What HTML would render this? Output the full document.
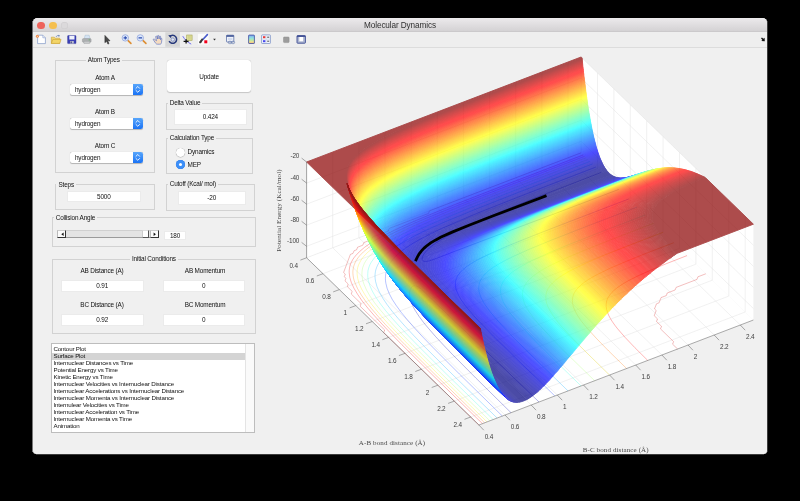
<!DOCTYPE html>
<html><head><meta charset="utf-8"><title>Molecular Dynamics</title>
<style>
html,body{margin:0;padding:0;background:#000;}
body{letter-spacing:-0.17px;width:800px;height:501px;position:relative;overflow:hidden;font-family:"Liberation Sans",sans-serif;font-size:6.4px;color:#111;}
#win{will-change:transform;position:absolute;left:33px;top:18px;width:734px;height:436px;background:#f0f0f0;border-radius:4.5px 4.5px 3px 3px;overflow:hidden;}
#tb{position:absolute;left:0;top:0;width:734px;height:14px;background:linear-gradient(#eceaec,#d4d2d4);border-bottom:1px solid #cbc9cb;box-sizing:border-box;}
#tb .t{position:absolute;left:0;width:734px;top:3.1px;text-align:center;font-size:8.2px;color:#303030;letter-spacing:-0.1px}
.lt{position:absolute;top:3.55px;width:7.4px;height:7.4px;border-radius:50%;}
#tool{position:absolute;left:0;top:14px;width:734px;height:16px;background:#eee;border-bottom:1.6px solid #dcdcdc;box-sizing:border-box;}
.ab{position:absolute;}
.pn{position:absolute;border:1px solid #d2d2d2;box-sizing:border-box;}
.pt{position:absolute;top:-4.6px;background:#f0f0f0;padding:0 2px;white-space:nowrap;line-height:8px;}
.lb{position:absolute;white-space:nowrap;text-align:center;line-height:8px;}
.ed{position:absolute;background:#fff;border:1px solid #ebebeb;box-sizing:border-box;text-align:center;}
.pop{position:absolute;background:#fff;border-radius:2px;box-shadow:0 0 0.5px #999,0 0.5px 0.8px rgba(0,0,0,.25);}
.pop span{position:absolute;left:5.4px;top:1.9px;line-height:8px;}
.pop i{position:absolute;right:0;top:0;width:9.6px;height:100%;border-radius:0 2.2px 2.2px 0;background:linear-gradient(#58a6fb,#1a73f5);}.pop i svg{position:absolute;left:0;top:0}
#lst{position:absolute;left:18.2px;top:325.4px;width:204px;height:89.2px;font-size:6.2px;background:#fff;border:1px solid #bdbdbd;box-sizing:border-box;}
#lst div{position:absolute;left:1.3px;white-space:nowrap;line-height:7.07px;height:7.07px;}
.rd{width:9px;height:9px;border-radius:50%;background:#fff;box-shadow:0 0 0.5px #777,0 0.4px 0.8px rgba(0,0,0,.3);}
.rd.on{background:#3c8ff8;box-shadow:0 0 0.5px #1a5fd0;}
.rd.on::after{content:"";position:absolute;left:3px;top:3px;width:3px;height:3px;border-radius:50%;background:#fff;}
.sb{width:9px;height:8.6px;background:#fbfbfb;border-right:0.8px solid #333;border-bottom:0.8px solid #333;border-left:0.5px solid #bbb;border-top:0.5px solid #ccc;box-sizing:border-box;}
.sb svg{position:absolute;left:-0.5px;top:-0.5px}
</style></head><body>
<div class="ab" style="left:32px;top:21px;width:1px;height:431px;background:linear-gradient(#e0dee0 0,#d8d6d8 11px,#f0f0f0 12px);opacity:.5"></div><div class="ab" style="left:767px;top:21px;width:1px;height:431px;background:#f0f0f0;opacity:.25"></div><div class="ab" style="left:36px;top:454px;width:728px;height:1px;background:#f0f0f0;opacity:.25"></div>
<div id="win">
 <div id="tb"><span class="lt" style="left:4.4px;background:#ee635b"></span><span class="lt" style="left:16.2px;background:#f5bf4f"></span><span class="lt" style="left:28px;background:#dbd9db;box-shadow:inset 0 0 0 0.5px #cdcbcd"></span><div class="t">Molecular Dynamics</div></div>
 <div id="tool"><svg style="position:absolute;left:-33px;top:-32px" width="800" height="60" viewBox="0 0 800 60">
<defs>
<linearGradient id="cb" x1="0" y1="0" x2="0" y2="1"><stop offset="0" stop-color="#7fa4f2"/><stop offset=".35" stop-color="#8fe0e0"/><stop offset=".6" stop-color="#b8e8a8"/><stop offset=".8" stop-color="#f0e090"/><stop offset="1" stop-color="#f0b080"/></linearGradient>
<linearGradient id="fl" x1="0" y1="0" x2="0" y2="1"><stop offset="0" stop-color="#f4dc7a"/><stop offset="1" stop-color="#dfb640"/></linearGradient>
</defs>
<!-- new -->
<path d="M37.6 35.2h5.2l2.6 2.6v5.8h-7.8z" fill="#fff" stroke="#8096c6" stroke-width=".7"/>
<path d="M42.8 35.2v2.6h2.6" fill="#dfe6f4" stroke="#8096c6" stroke-width=".5"/>
<circle cx="37.4" cy="36.3" r="1.5" fill="#f08a48"/><circle cx="37.4" cy="36.3" r=".6" fill="#fbd9b8"/>
<!-- open -->
<path d="M51.3 43.4v-6.2h3l.9 1h4.6v5.2z" fill="url(#fl)" stroke="#c79f34" stroke-width=".6"/>
<path d="M51.3 43.4l1.6-3.9h8.2l-1.5 3.9z" fill="#f3d568" stroke="#c79f34" stroke-width=".5"/>
<path d="M56 37c.6-1.3 1.8-1.800 3-1.4" fill="none" stroke="#6f86b8" stroke-width=".8"/><path d="M58.300 34.700l1.900 1-1.700 1.200z" fill="#6f86b8"/>
<!-- save -->
<rect x="67.600" y="35.600" width="8.400" height="8" rx=".5" fill="#3c40b6" stroke="#2c2f90" stroke-width=".4"/>
<rect x="69.300" y="35.800" width="5.200" height="3.700" fill="#eef1fb"/>
<rect x="70" y="41" width="3.800" height="2.600" fill="#b9bccd"/><rect x="70.600" y="41.500" width="1.100" height="1.700" fill="#30307a"/>
<!-- print -->
<path d="M84.300 38.800l.8-3.600h4l1 3.600z" fill="#d3e3f3" stroke="#9ab0c8" stroke-width=".4"/>
<rect x="82.400" y="38.600" width="8.700" height="3.700" rx="1" fill="#aeb0b2" stroke="#8b8d90" stroke-width=".4"/>
<rect x="83.800" y="41.300" width="6" height="2.200" rx=".4" fill="#c9cbcd" stroke="#96989b" stroke-width=".4"/>
<rect x="88.700" y="39.500" width="1.300" height=".8" fill="#5fae5f"/>
<!-- pointer -->
<path d="M104.900 35.400v7.300l1.700-1.500 1.300 2.900 1.100-.5-1.300-2.800h2.300z" fill="#4a4a4a" stroke="#222" stroke-width=".5" stroke-linejoin="round"/>
<!-- zoom in -->
<path d="M127.600 40.200l3.300 3.200" stroke="#dd8f35" stroke-width="1.700" stroke-linecap="round"/>
<circle cx="125.300" cy="37.900" r="3.200" fill="#dbe7fb" stroke="#93a6dc" stroke-width=".8"/>
<path d="M123.600 37.900h3.400M125.300 36.200v3.400" stroke="#2d4db0" stroke-width="1.100"/>
<!-- zoom out -->
<path d="M142.600 40.200l3.300 3.200" stroke="#dd8f35" stroke-width="1.700" stroke-linecap="round"/>
<circle cx="140.300" cy="37.900" r="3.200" fill="#dbe7fb" stroke="#93a6dc" stroke-width=".8"/>
<path d="M138.500 37.900h3.600" stroke="#2d4db0" stroke-width="1.200"/>
<!-- hand -->
<path d="M154.600 39.300c-.8-.9-1.700-.2-1.100.7l2.200 3.300c.5.700 1 .9 1.800.9h2.300c1 0 1.600-.6 1.700-1.500l.4-3.700c.1-.9-1-1-1.200-.2l-.2.900.1-3c0-.9-1.200-.9-1.300 0l-.2 2.300-.3-3c-.1-.9-1.300-.8-1.300.1l.1 2.900-.7-2.500c-.3-.9-1.400-.5-1.200.4l.8 3.900z" fill="#f6dcc0" stroke="#4c68c4" stroke-width=".6" stroke-linejoin="round"/>
<!-- rotate (selected) -->
<rect x="165.300" y="32.200" width="14.600" height="14.600" fill="#d7d7d7"/>
<path d="M169.700 36.600a4 4 0 1 1-.6 4.600" fill="none" stroke="#27397c" stroke-width="1.500"/>
<path d="M168.200 35.300l3.300-.3-.5 3.200z" fill="#27397c"/>
<circle cx="172.800" cy="39.600" r="1.700" fill="#e2e6f2" stroke="#6c80bc" stroke-width=".7"/>
<!-- data cursor -->
<rect x="186.700" y="35" width="5.400" height="5.400" fill="#dcdc96" stroke="#a6a658" stroke-width=".6"/>
<path d="M188 36.400h2.800M188 37.700h2.800M188 39h2.800" stroke="#c4c47c" stroke-width=".4"/>
<path d="M182.800 36.200c2 3.500 4.500 6 8.400 7.900" fill="none" stroke="#4c4cf0" stroke-width=".8"/>
<path d="M183.600 41.300h5M186.100 39.200v4.400" stroke="#111" stroke-width="1.300"/>
<!-- brush -->
<rect x="198" y="33.800" width="10.600" height="10.600" rx=".8" fill="#fbfbfb"/>
<path d="M207.400 34.600l-4.800 5.200" stroke="#4a5ccc" stroke-width="1.600" stroke-linecap="round"/>
<path d="M203.300 39.300l-1.300-1-2.600 3.300c-.5.700-.2 1.500.3 1.600.8.200 1.300 0 1.700-.5z" fill="#3a3a3a"/>
<rect x="204.300" y="40.300" width="3" height="3" fill="#f1001b"/>
<path d="M213.100 38.700h2.800l-1.400 1.700z" fill="#333"/>
<!-- link -->
<rect x="226.500" y="35.200" width="7.300" height="6.800" rx=".6" fill="#eef2fa" stroke="#4c629c" stroke-width=".7"/>
<rect x="226.500" y="35.200" width="7.300" height="1.600" fill="#3f5496"/>
<rect x="228" y="38" width="4.400" height="2" fill="#d3dcef"/>
<rect x="228.300" y="41.300" width="3.300" height="2.300" rx="1.100" fill="none" stroke="#6f84b4" stroke-width=".8"/><rect x="231.300" y="41.300" width="3.300" height="2.300" rx="1.100" fill="none" stroke="#6f84b4" stroke-width=".8"/>
<!-- colorbar -->
<rect x="248.600" y="35.100" width="5.800" height="8.400" rx=".5" fill="url(#cb)" stroke="#3c4c9c" stroke-width=".8"/>
<!-- legend -->
<rect x="261.600" y="34.900" width="8.800" height="8.600" rx=".6" fill="#f2f5fc" stroke="#7088c2" stroke-width=".7"/>
<path d="M261.600 39.200h8.800M266.200 34.900v8.600" stroke="#b8c4e0" stroke-width=".4"/>
<rect x="263" y="36.200" width="2.400" height="2" fill="#ea3838"/><rect x="263" y="40.200" width="2.400" height="2" fill="#4646ee"/>
<path d="M267.200 37.200h2M267.200 41.200h2" stroke="#222" stroke-width=".8"/>
<!-- gray sq -->
<rect x="283.500" y="37" width="5.600" height="5.600" rx=".8" fill="#9c9c9c" stroke="#8c8c8c" stroke-width=".5"/>
<!-- dock -->
<rect x="297" y="35.600" width="8.400" height="7.600" rx=".6" fill="#aeb7d2" stroke="#3a4a92" stroke-width=".9"/>
<rect x="299.300" y="37" width="3.800" height="4.300" fill="#fff"/>
<path d="M297 36.300h8.400" stroke="#3a4a92" stroke-width="1.200"/>
<!-- far right arrow -->
<path d="M761 38.300l1-.8 1.300 1.300 1.300-1.100.2 3.600-3.600-.2 1.200-1.200z" fill="#111"/>
</svg>
</div>
 <div style="position:absolute;left:0;top:0"><!-- coordinates relative to #win (page - 33, page - 18) -->
<div class="pn" style="left:21.8px;top:42px;width:100.4px;height:113px"><span class="pt" style="left:30px">Atom Types</span></div>
<div class="lb" style="left:52px;top:56px;width:40px">Atom A</div>
<div class="pop" style="left:36.6px;top:66.4px;width:73.2px;height:10.8px"><span>hydrogen</span><i><svg width="9.6" height="10.8" viewBox="0 0 9.6 10.8"><path d="M3 4.300l1.800-1.800 1.800 1.800M3 6.500l1.800 1.800 1.800-1.800" fill="none" stroke="#fff" stroke-width=".9" stroke-linecap="round" stroke-linejoin="round"/></svg></i></div>
<div class="lb" style="left:52px;top:90px;width:40px">Atom B</div>
<div class="pop" style="left:36.6px;top:100.4px;width:73.2px;height:10.8px"><span>hydrogen</span><i><svg width="9.6" height="10.8" viewBox="0 0 9.6 10.8"><path d="M3 4.300l1.800-1.800 1.800 1.800M3 6.500l1.800 1.800 1.800-1.800" fill="none" stroke="#fff" stroke-width=".9" stroke-linecap="round" stroke-linejoin="round"/></svg></i></div>
<div class="lb" style="left:52px;top:124.3px;width:40px">Atom C</div>
<div class="pop" style="left:36.6px;top:134.2px;width:73.2px;height:10.8px"><span>hydrogen</span><i><svg width="9.6" height="10.8" viewBox="0 0 9.6 10.8"><path d="M3 4.300l1.800-1.800 1.800 1.800M3 6.500l1.800 1.800 1.800-1.800" fill="none" stroke="#fff" stroke-width=".9" stroke-linecap="round" stroke-linejoin="round"/></svg></i></div>

<div class="ab" style="left:134px;top:42px;width:84px;height:32px;background:#fff;border-radius:3px;box-shadow:0 0 0.6px #aaa,0 0.6px 1px rgba(0,0,0,.18)"></div>
<div class="lb" style="left:156px;top:55px;width:40px">Update</div>

<div class="pn" style="left:133px;top:84.8px;width:86.6px;height:27.6px"><span class="pt" style="left:0.7px">Delta Value</span></div>
<div class="ed" style="left:140.8px;top:91.4px;width:73.2px;height:15.4px;line-height:13.8px">0.424</div>

<div class="pn" style="left:133px;top:119.9px;width:86.6px;height:36.1px"><span class="pt" style="left:0.7px">Calculation Type</span></div>
<div class="ab rd" style="left:142.7px;top:129.6px"></div><div class="lb" style="left:154.6px;top:130px;text-align:left">Dynamics</div>
<div class="ab rd on" style="left:142.7px;top:141.7px"></div><div class="lb" style="left:154.6px;top:143px;text-align:left">MEP</div>

<div class="pn" style="left:21.8px;top:166.4px;width:100.4px;height:26px"><span class="pt" style="left:0.7px">Steps</span></div>
<div class="ed" style="left:34px;top:173.2px;width:73.6px;height:11.2px;line-height:9.6px">5000</div>

<div class="pn" style="left:133px;top:166px;width:89.4px;height:27px"><span class="pt" style="left:0.7px">Cutoff (Kcal/ mol)</span></div>
<div class="ed" style="left:144.8px;top:173.2px;width:67.8px;height:14.2px;line-height:12.6px">-20</div>

<div class="pn" style="left:19px;top:199.4px;width:204px;height:29.2px"><span class="pt" style="left:0.7px">Collision Angle</span></div>
<div class="ab" style="left:24.3px;top:211.8px;width:101.2px;height:8.6px;background:#e4e4e4;border-bottom:0.6px solid #9b9b9b;border-top:0.5px solid #d0d0d0;box-sizing:border-box"></div>
<div class="ab sb" style="left:24.3px;top:211.8px"><svg width="9" height="8.6" viewBox="0 0 9 8.6"><path d="M5.600 2.500v3.400L3.300 4.200z" fill="#111"/></svg></div>
<div class="ab sb" style="left:116.5px;top:211.8px"><svg width="9" height="8.6" viewBox="0 0 9 8.6"><path d="M3.600 2.500v3.400l2.300-1.700z" fill="#111"/></svg></div>
<div class="ab" style="left:109.4px;top:211.8px;width:7px;height:8.600px;background:#fff;border-right:0.7px solid #555;border-bottom:0.7px solid #555;border-left:0.5px solid #ccc;border-top:0.5px solid #ddd;box-sizing:border-box"></div>
<div class="ed" style="left:131.4px;top:212.8px;width:21.3px;height:9.600px;line-height:8px">180</div>

<div class="pn" style="left:19px;top:241px;width:204.4px;height:75.4px"><span class="pt" style="left:77px">Initial Conditions</span></div>
<div class="lb" style="left:39px;top:248.8px;width:60px">AB Distance (A)</div>
<div class="lb" style="left:142px;top:248.8px;width:60px">AB Momentum</div>
<div class="ed" style="left:28px;top:261.5px;width:82.5px;height:12px;line-height:10.4px">0.91</div>
<div class="ed" style="left:130px;top:261.5px;width:81.6px;height:12px;line-height:10.4px">0</div>
<div class="lb" style="left:39px;top:282.6px;width:60px">BC Distance (A)</div>
<div class="lb" style="left:142px;top:282.6px;width:60px">BC Momentum</div>
<div class="ed" style="left:28px;top:295.5px;width:82.5px;height:12px;line-height:10.4px">0.92</div>
<div class="ed" style="left:130px;top:295.5px;width:81.6px;height:12px;line-height:10.4px">0</div>

<div id="lst">
<div style="top:8.2px;left:0;width:192.6px;background:#d4d4d4"></div>
<div style="top:0;left:192.6px;width:8.4px;height:87.2px;background:#fafafa;border-left:0.5px solid #e4e4e4"></div>
<div style="top:0.30px">Contour Plot</div>
<div style="top:7.37px">Surface Plot</div>
<div style="top:14.44px">Internuclear Distances vs Time</div>
<div style="top:21.51px">Potential Energy vs Time</div>
<div style="top:28.58px">Kinetic Energy vs Time</div>
<div style="top:35.65px">Internuclear Velocities vs Internuclear Distance</div>
<div style="top:42.72px">Internuclear Accelerations vs Internuclear Distance</div>
<div style="top:49.79px">Internuclear Momenta vs Internuclear Distance</div>
<div style="top:56.86px">Internulear Velocities vs Time</div>
<div style="top:63.93px">Internuclear Acceleration vs Time</div>
<div style="top:71.00px">Internuclear Momenta vs Time</div>
<div style="top:78.07px">Animation</div>
</div>
</div>
 <svg style="position:absolute;left:-33px;top:-18px" width="800" height="501" viewBox="0 0 800 501">
<path fill="#fff" d="M306.6 257.8L478.9 425L753.4 320L581.1 152.8Z"/>
<path fill="#fff" d="M306.6 257.8L581.1 152.8L581.1 57L306.6 162Z"/>
<path fill="#fff" d="M581.1 152.8L753.4 320L753.4 224.2L581.1 57Z"/>
<path fill="none" stroke="#e3e3e3" stroke-width="0.5" d="M306.6 257.8L581.1 152.8L581.1 57M478.9 425L306.6 257.8L306.6 162M323 273.7L597.5 168.7L597.5 72.9M505 415L332.7 247.8L332.7 152M339.4 289.6L613.9 184.6L613.9 88.8M531.2 405L358.9 237.8L358.9 142M355.8 305.6L630.3 200.6L630.3 104.8M557.3 395L385 227.8L385 132M372.2 321.5L646.7 216.5L646.7 120.7M583.5 385L411.2 217.8L411.2 122M388.6 337.4L663.1 232.4L663.1 136.6M609.6 375L437.3 207.8L437.3 112M405.1 353.3L679.5 248.3L679.5 152.5M635.7 365L463.4 197.8L463.4 102M421.5 369.2L695.9 264.2L695.9 168.4M661.9 355L489.6 187.8L489.6 92M437.9 385.2L712.3 280.2L712.3 184.4M688 345L515.7 177.8L515.7 82M454.3 401.1L728.8 296.1L728.8 200.3M714.2 335L541.9 167.8L541.9 72M470.7 417L745.2 312L745.2 216.2M740.3 325L568 157.8L568 62M306.6 246.3L581.1 141.3L753.4 308.5M306.6 225.2L581.1 120.2L753.4 287.4M306.6 204.2L581.1 99.2L753.4 266.3M306.6 183.1L581.1 78.1L753.4 245.2M306.6 162L581.1 57L753.4 224.2"/>
<path fill="none" stroke="#0000b5" stroke-width="0.36" stroke-opacity="0.8" d="M601.2 172.4L544.8 194.2L505.6 209.8L477.8 221.5L466.7 226.4L456.8 231.2L448.5 235.5L441.2 239.6L434.7 243.8L429.9 247.5L426 251.4L423.5 254.6L422.7 256.4L422.2 257.9L422.2 259.3L422.5 260.2L423.1 260.9L423.6 261.2L424.6 261.4L426.1 261.4L429.5 260.8L434.5 259.1L472.4 244.6L553.7 214.1L618.8 189.4M539 402L498 362.5L446.6 313.6L422.7 290.4L419.4 287.6L416.9 286.1L415.5 285.8L414.4 285.7L413.2 286.1L412.2 286.6L411.5 287.4L410.6 288.7L410 290.4L409.6 292.2L409.5 294.4L409.6 296L410.1 298.7L410.7 300.7L412.6 305.6L415.1 310.3L419 316.3L423.5 322.4L428.5 328.4L435.5 336.5L443.8 345.4L452.3 354.3L475.9 378.1L511 412.7"/>
<path fill="none" stroke="#002eff" stroke-width="0.36" stroke-opacity="0.8" d="M595.8 167.1L527.2 193.5L484.1 210.5L467.9 217.1L453.5 223.3L441.3 228.7L431.1 233.5L421.1 238.7L413.3 243.1L406.4 247.5L400.9 251.6L396.2 255.7L392.3 260L389.3 264.5L388 266.8L387.1 268.9L386.4 271.2L385.8 273.6L385.5 276.2L385.4 278.5L385.5 280.8L385.9 283.4L387.1 288.3L389.2 293.5L392.2 299.3L396.1 305.3L401.4 312.6L407.2 319.6L414.3 327.8L422.9 337.1L432.8 347.3L459.4 374L502.3 416M554.8 395.9L514 356.4L493.5 336.2L478.9 321.3L473.5 315.4L469 310.1L464.7 304.8L461.3 300L458.8 295.8L457 291.8L455.9 288.5L455.4 285L455.6 281.6L456.4 278.5L457.8 275.6L460 272.7L463 269.6L466.7 266.6L471.3 263.5L476.5 260.4L483 257.1L490.7 253.4L507.6 246L530.9 236.6L563.8 223.8L628.7 199"/>
<path fill="none" stroke="#00a7ff" stroke-width="0.36" stroke-opacity="0.8" d="M592.5 163.9L518.9 192.2L475.2 209.4L444.6 222L431.9 227.6L421.5 232.4L412.4 237L404.1 241.5L396.6 246.2L390.7 250.4L385.7 254.6L381.6 259L378.7 263.1L377.6 265.2L376.6 267.5L375.9 269.6L375.4 271.7L375.1 274.1L375 276.6L375.2 278.9L375.6 281.6L377 286.7L379.4 292.1L382.8 298.2L387.1 304.6L392 311.1L397.9 318.2L405.3 326.5L414 335.8L423.9 346L451 373L497.1 418M568 390.9L533.9 357.7L514.6 338.5L500.8 324.1L495.8 318.5L491.3 313.2L487.5 308.2L484.2 303.4L481.8 299.1L480.1 295.2L479.1 291.7L478.7 288.2L479 284.8L479.9 281.7L481.4 278.6L483.7 275.5L486.5 272.6L489.9 269.7L494.4 266.6L499.6 263.5L506 260L513.1 256.5L529.4 249.2L552 239.9L583.2 227.7L637 207.1"/>
<path fill="none" stroke="#2bffde" stroke-width="0.36" stroke-opacity="0.8" d="M590 161.4L515.3 190.2L470.5 207.7L438.2 221L426.5 226.1L415.6 231.1L405.9 235.8L397 240.6L389.5 245.2L383.6 249.4L378.4 253.7L374.3 258L371.4 262L370.1 264.3L369.2 266.5L368.5 268.7L368 270.7L367.8 273.2L367.7 275.5L367.9 277.8L368.3 280.5L369.9 285.7L372.3 291.1L375.8 297.2L380.4 303.8L385.7 310.7L392 318.1L398.8 325.7L407.6 335L418.5 346.2L446.3 373.9L493.1 419.5M581 385.9L551.7 357.4L533.8 339.5L521.2 326.1L516.3 320.5L512.2 315.5L508.6 310.8L505.7 306.3L503.4 302.2L501.9 298.5L500.9 295.1L500.5 291.5L500.7 288.2L501.5 285.1L502.9 282.2L505 279L507.9 276L511.4 272.9L515.5 269.9L520.6 266.7L526.4 263.5L533 260.1L548.6 253L569.6 244.3L598.5 232.9L645.2 215"/>
<path fill="none" stroke="#a4ff65" stroke-width="0.36" stroke-opacity="0.8" d="M587.9 159.4L511 189L465.1 207L432.8 220.2L420.6 225.5L409.7 230.5L400 235.3L391.1 240.1L383.5 244.6L377.4 248.9L372.4 253.2L368.7 257L367 259.1L365.5 261.4L364.4 263.3L363.5 265.5L362.7 267.6L362.2 270.1L362 272.1L361.9 274.5L362.1 276.7L362.5 279.3L363.2 281.9L364.1 284.5L366.5 290L370 296.1L374.6 302.8L380 309.6L386.2 317L393.4 325L402.2 334.3L413.1 345.5L441.6 373.8L489.8 420.8M594.6 380.7L569.1 355.9L553 339.6L541.4 327.2L536.9 322L533.1 317.3L529.7 312.6L527.1 308.4L525 304.5L523.6 300.9L522.8 297.5L522.5 294.3L522.7 291.1L523.5 288.2L525 285.1L526.8 282.4L529.3 279.6L532.8 276.4L536.7 273.5L541.3 270.5L546.6 267.4L552.6 264.3L567.1 257.6L586.9 249.3L613.1 238.9L653.7 223.2"/>
<path fill="none" stroke="#ffeb00" stroke-width="0.36" stroke-opacity="0.8" d="M586.2 157.7L506.5 188.4L460.1 206.5L427.7 219.8L415.5 225.1L404.6 230.1L394.9 234.8L386 239.6L378.5 244.2L372.2 248.6L367.3 252.7L363.6 256.6L362 258.7L360.5 261L358.5 265L357.8 267.2L357.4 269.2L357.1 271.6L357.1 274L357.7 278.4L359.1 283.5L361.6 289.1L365.2 295.2L369.7 301.8L375.1 308.7L381.4 316.1L388.6 324.1L397.3 333.3L408.3 344.6L437.1 373.2L487 421.9M609.4 375L587.5 353.5L573.1 339L562.6 327.6L558.4 322.6L555 318.3L552 313.9L549.7 310.1L547.9 306.5L546.7 303.3L546 300.3L545.8 297.1L546.1 294.2L547 291L548.2 288.4L550.1 285.6L552.6 282.9L555.7 280L559.2 277.4L563.8 274.4L568.6 271.6L574 268.8L587.5 262.4L605.1 254.9L628.4 245.6L663 232.3"/>
<path fill="none" stroke="#ff7200" stroke-width="0.36" stroke-opacity="0.8" d="M584.6 156.3L503.3 187.5L457.4 205.5L425 218.7L412.3 224.2L401.3 229.2L391.1 234.1L382.2 238.9L374.6 243.4L368.6 247.6L363.4 251.9L359.7 255.7L358 257.8L356.5 260.1L355.4 262L354.4 264.3L353.7 266.4L353.2 268.8L352.9 270.9L352.9 273.2L353.1 275.5L353.5 278L354.2 280.7L355.2 283.3L357.6 288.7L361.2 294.8L365.8 301.5L371.5 308.7L377.8 316L385.3 324.4L394.5 334L405.1 344.8L433.6 373.1L484.6 422.8M626.6 368.5L608.7 351L596.4 338.4L587.3 328.4L583.7 324.1L580.7 320.2L578.2 316.5L575.9 312.6L574.3 309.1L573.2 306.2L572.6 303.2L572.4 300.4L572.7 297.5L573.4 294.9L574.6 292.4L576.4 289.7L578.6 287.3L581.3 284.7L584.3 282.3L588.3 279.6L592.6 277.1L597.5 274.4L609.8 268.4L625.2 261.8L645.2 253.7L673.8 242.7"/>
<path fill="none" stroke="#ff0000" stroke-width="0.36" stroke-opacity="0.8" d="M583.3 154.9L501.4 186.4L454.9 204.5L422.5 217.7L409.7 223.2L398.2 228.4L387.5 233.6L378.6 238.4L371 242.9L364.7 247.2L359.5 251.6L355.7 255.6L354 257.7L352.6 259.8L350.6 263.8L349.9 266L349.5 268.1L349.2 270.5L349.2 272.8L349.8 277.4L350.6 280.2L351.4 282.7L354 288.3L357.6 294.3L362.2 301L367.9 308.2L374.2 315.5L382.1 324.2L391.2 333.8L401.9 344.7L430.8 373.3L482.4 423.6M647.7 360.4L634.8 347.6L625 337.3L617.7 328.9L614.9 325.3L612.3 321.6L610.2 318.2L608.6 315.1L607.5 312.3L606.6 309.3L606.2 306.7L606.2 304.3L606.5 301.9L607.2 299.5L608.2 297.4L609.7 295.1L611.7 292.6L614 290.4L616.6 288.2L620 285.8L623.7 283.4L628 280.9L638.1 275.8L650.7 270.2L666.3 263.7L687 255.6"/>
<path fill="none" stroke="#d42020" stroke-width="0.36" stroke-opacity="0.8" d="M581.1 152.8L429.5 210.8L428.5 213.4L389.3 228.4L388.3 231L372.6 237L371.6 239.6L363.8 242.6L362.8 245.2L357.6 247.2L356.6 249.8L354 250.8L353 253.4L350.4 254.4L346.5 264.7L343.6 272.5L345.3 274.1L344.3 276.7L345.9 278.3L345 280.9L348.2 284L347.3 286.6L352.2 291.4L351.2 294L361.1 303.6L360.1 306.2L384.7 330L383.7 332.6L478.9 425M677.6 349L672.6 344.2L673.6 341.6L660.5 328.9L661.5 326.3L656.5 321.5L657.5 318.9L654.2 315.7L656.2 310.5L654.5 308.9L656.5 303.8L659.1 302.8L661 297.6L666.3 295.6L667.2 293L675.1 290L676.1 287.4L697 279.4L697.9 276.8L705.8 273.8"/>
<g opacity="0.70" stroke-width="0.9" stroke-linejoin="round">
<path fill="#000081" stroke="#000081" d="M588.8 178L607 170.8L609.2 173.2L611.3 175L580.7 186.3L559.9 193.6L545.4 198.3L542.7 199L541.2 199.3L540.6 199.1L541 198.7L542.4 197.8L544.9 196.5L554 192.4L570.5 185.4ZM480.6 359.1L480.9 358.9L481.5 359.1L483.8 360.5L487.9 363.7L493.3 368.3L506.6 380.2L527.1 399.4L523.6 401L520.3 402L503.5 385.2L490.9 371.9L482.9 362.8L481 360.2Z"/>
<path fill="#000084" stroke="#000084" d="M597.3 173.2L606.2 169.7L607 170.8L578.3 182.3L558.9 190.3L544.9 196.5L542.4 197.8L541 198.7L540.6 199.1L541.2 199.3L542.7 199L545.4 198.3L559.9 193.6L580.7 186.3L611.3 175L612.3 175.7L568.4 192L539.8 202.2L521 208.2L515.1 209.7L513 209.8L512.9 209.5L513.3 209L514.2 208.3L517.8 206.3L524.1 203.1L534.8 198.4L560.1 187.9ZM463.2 341.8L463.6 341.5L464.8 341.9L468.3 344L474.2 348.6L481 354.4L500 371.5L528.7 398.5L527.1 399.4L507.3 380.9L494.1 369L487.9 363.7L483.8 360.5L481.5 359.1L480.9 358.9L480.6 359L481 360.2L482.9 362.8L490.2 371.2L503.5 385.2L520.3 402L518.9 402.2L493.6 376.9L476.5 359.1L471 352.9L466.2 347.1L463.8 343.6Z"/>
<path fill="#000088" stroke="#000088" d="M569.6 182.8L605.5 168.7L606.2 169.7L564.2 186.3L534.8 198.4L524.1 203.1L517.8 206.3L514.2 208.3L513.3 209L512.9 209.5L513 209.8L514.8 209.7L519.1 208.7L534.3 204L564 193.6L612.3 175.7L613.1 176.1L559.1 196.2L524.7 208.5L511.9 212.7L502.7 215.4L497 216.5L496.1 216.6L495.5 216.5L495.2 216.2L495.8 215.4L496.6 214.7L500.2 212.5L506.5 209.3L514.6 205.5L536.5 196.1ZM452.2 330.7L452.5 330.3L452.8 330.2L453.8 330.4L455.3 331.1L457.5 332.5L463.7 337L471.9 343.9L481.7 352.5L494.2 364L529.9 397.7L528.7 398.5L498.4 370L486 358.8L477.4 351.3L472 346.8L467.9 343.7L464.8 341.9L464.1 341.6L463.3 341.6L463.2 342.3L463.4 342.9L465.2 345.8L469.1 350.6L473.3 355.5L479.9 362.8L490 373.3L518.9 402.2L517.8 402.3L486.9 371.5L476.3 360.5L467.7 351.5L460.9 343.7L456.1 337.7L453.1 333.3L452.4 331.9Z"/>
<path fill="#00008b" stroke="#00008b" d="M589.8 173.7L604.9 167.9L605.5 168.7L554.1 189L522.5 202L510.1 207.5L502.5 211.3L496.6 214.7L495.8 215.4L495.2 216.2L495.5 216.5L496.1 216.6L497 216.5L502.7 215.4L509.5 213.5L520.3 210L555 197.8L613.1 176.1L613.8 176.5L551.1 199.9L513.3 213.3L500.7 217.5L490.5 220.4L484.9 221.5L483 221.6L482.3 221.2L482.5 220.5L483.7 219.3L489.3 215.9L497.3 211.8L509.8 206.1L540.3 193.3ZM444.3 322.1L444.5 321.9L445.1 321.7L446.2 321.9L448.6 323.1L450.9 324.5L458 329.8L466.8 337.2L477.6 346.7L492.4 360.4L531 397L529.9 397.7L493.4 363.2L479.8 350.8L470 342.3L462.6 336.2L457.5 332.5L454.5 330.7L453.2 330.3L452.5 330.3L452.2 330.9L452.4 331.9L453.1 333.3L454.7 335.8L458.6 340.9L464.8 348.2L474 358.2L485.4 370L517.8 402.3L516.9 402.4L482.3 367.9L470.5 355.8L461.1 345.7L453.2 336.7L447.9 329.9L444.9 325L444.2 323.2Z"/>
<path fill="#00008f" stroke="#00008f" d="M583.6 175.1L604.4 167L604.9 167.9L547.1 190.6L526.6 198.9L510.9 205.6L497.5 211.7L489.3 215.9L483.7 219.3L482.5 220.5L482.3 221.2L483 221.6L484.9 221.5L490.5 220.4L500.1 217.6L512.5 213.6L529.5 207.7L550.5 200.1L613.8 176.5L614.4 176.8L547.7 201.7L523.6 210.5L505.4 216.9L490.8 221.6L480.8 224.5L476.7 225.3L474.1 225.7L472.6 225.6L471.9 225.2L471.9 224.9L472.3 224L473.5 222.9L478.4 219.7L487.5 214.9L499.2 209.4L513.2 203.3L532.6 195.3ZM438 315.2L438.7 314.8L440.1 314.9L442.4 315.9L445 317.5L452.2 322.7L461.8 330.7L473.4 341L488.5 354.9L532 396.2L531 397L489.9 358L475.5 344.8L463.9 334.7L456.3 328.5L450.9 324.5L446.8 322.2L445.6 321.8L444.5 321.9L444.1 322.7L444.6 324.3L447.1 328.7L451.6 334.7L458.5 342.8L468.1 353.2L479.9 365.5L516.9 402.4L516.1 402.3L477.1 363.6L464.4 350.5L454.6 339.8L446.9 330.9L441.5 323.8L439.6 320.8L438.4 318.4L437.8 316.2Z"/>
<path fill="#000093" stroke="#000093" d="M586.8 172.9L603.9 166.2L604.4 167L543.1 191.1L520.6 200.2L504.8 206.9L490.8 213.3L480.1 218.7L476.8 220.6L473.5 222.9L472.3 224L471.9 224.9L471.9 225.2L472.6 225.6L474.1 225.7L476.7 225.3L480.8 224.5L490.7 221.7L502.7 217.8L520.4 211.7L545.5 202.6L614.4 176.8L615 177L541.6 204.5L517.3 213.4L497.8 220.2L482.5 225.2L472.3 228L468.5 228.8L465.9 229.1L464.3 229.1L463.8 229L463.2 228.5L463.2 228.2L463.6 227.4L465.2 225.7L468.1 223.6L471 221.8L480.1 217L494.1 210.4L509 203.9L529.9 195.3ZM432.9 309.1L433.4 308.8L434.1 308.7L435.7 309.1L438 310.2L440.4 311.6L447.6 316.8L457.8 325.3L470.1 336.2L486.5 351.3L533 395.5L532 396.2L487 353.5L471.6 339.4L458.8 328.2L450.9 321.7L444.5 317.2L442.3 315.9L440.1 314.9L439.1 314.7L438.1 315L437.8 315.8L438.2 317.8L439.2 319.9L440.8 322.7L445.6 329.2L453.3 338.3L463.5 349.5L475.9 362.4L493.4 380L516.1 402.3L515.3 402.3L491.7 379L473.9 361.1L460 346.8L449.5 335.3L441 325.2L435.7 317.8L434.1 315.1L432.9 312.3L432.5 310.4L432.6 309.7Z"/>
<path fill="#000097" stroke="#000097" d="M602 166.1L603.5 165.5L603.9 166.2L563.6 181.9L533.6 193.8L511.1 203L494.1 210.4L480.1 217L471 221.8L468.1 223.6L465.2 225.7L463.6 227.4L463.2 228.2L463.2 228.5L463.8 229L464.3 229.1L465.9 229.1L468.5 228.8L472.3 228L481.8 225.4L495.2 221.1L514.6 214.3L539.9 205.1L615 177L615.6 177.2L538.2 206.3L511.8 215.9L490.8 223.3L475.5 228.3L465 231.2L461.1 232L458.6 232.2L457 232.2L455.8 231.6L455.7 231.3L455.8 230.6L457.4 228.7L459.8 226.8L463.4 224.4L473.6 218.8L489.1 211.4L506 204.1L529.9 194.3L559.5 182.6ZM428.5 303.8L429.7 303.3L431.2 303.6L433.3 304.4L436.4 306.2L443.6 311.4L453.5 319.6L466.3 331L483.7 347L533.9 394.8L533 395.5L505.6 369.3L484.7 349.6L468.1 334.3L454.7 322.7L446.5 315.9L439.8 311.2L437.1 309.7L435.1 308.9L433.7 308.8L432.9 309.1L432.6 309.7L432.5 310.4L432.9 312.3L434.1 315.1L435.7 317.8L441 325.2L449.4 335.2L460 346.8L473.9 361.1L491.7 379L515.3 402.3L514.6 402.2L488.5 376.5L470.3 358.2L456.4 343.8L445.3 331.6L437.3 322L434.2 317.9L431.4 313.6L429.5 310.2L428.3 307.1L428 304.9Z"/>
<path fill="#00009b" stroke="#00009b" d="M560.7 181.2L603.1 164.7L603.5 165.5L560.7 182.1L530.4 194.1L506.5 203.9L489.6 211.2L474 218.6L468.5 221.4L463.4 224.4L459.8 226.8L457.4 228.7L455.8 230.6L455.7 231.3L455.8 231.6L457 232.2L458.6 232.2L461.1 232L464.7 231.2L474.5 228.6L489.4 223.7L528.3 209.9L565.3 196.2L615.6 177.2L616.2 177.4L533.3 208.5L503.4 219.4L482.4 226.8L467.2 231.7L457.6 234.3L454.2 234.9L451.6 235.1L449.9 234.9L449.1 234.2L449.2 233.1L450.6 231.3L452.6 229.5L455.6 227.4L459.6 224.8L464.8 221.9L476.6 216L490.6 209.6L508.5 202L532.1 192.4ZM424.8 298.8L425.8 298.4L427.7 298.6L429.9 299.5L432.9 301.2L439.8 306.1L449.6 314.3L464 327.2L482.4 344.2L534.8 394.1L533.9 394.8L504.8 366.9L482.7 346.1L465.3 330.1L451.3 317.7L442.4 310.5L435.7 305.7L433.3 304.4L431.2 303.6L429.7 303.3L428.5 303.8L428 304.9L428.3 307.1L429.2 309.5L431.1 313.1L433.4 316.7L436.6 321L444.9 331.2L454.3 341.6L466.9 354.8L487.1 375.1L514.6 402.2L514 402.1L486.9 375.4L467.4 355.9L452.9 340.8L441.4 328.1L433 317.8L429.5 312.9L427.1 309.1L425.2 305.3L424.2 302.4L424.1 300.3L424.3 299.4Z"/>
<path fill="#00009f" stroke="#00009f" d="M579.3 173L602.7 163.9L603.1 164.7L560.7 181.2L528.3 194L504.9 203.5L485.1 212.1L470.2 219.1L463.2 222.8L458.1 225.7L454.5 228.1L451.2 230.7L449.4 232.7L449.1 233.5L449.1 234.2L449.9 234.9L451.6 235.1L454.2 234.9L457.6 234.3L467.2 231.7L481.8 227L500.3 220.5L522.9 212.3L562.9 197.5L616.2 177.4L616.7 177.5L529.5 210.3L497.9 221.9L475.3 229.8L461.1 234.5L451.6 237L448.1 237.6L445.6 237.8L443.8 237.5L443.1 236.8L443 236.1L443.3 235.4L444.6 233.5L447.1 231.2L451 228.4L455.1 225.8L460.6 222.7L475 215.6L491.5 208.2L513.9 198.8L540.7 188.1ZM421.2 294.5L422.3 293.8L424 293.8L425.9 294.3L428.6 295.7L431.8 297.8L435.4 300.4L445 308.4L459.7 321.5L479.5 339.9L504.4 363.4L535.7 393.4L534.8 394.1L503.5 364.1L480.1 342L461.2 324.6L447.2 312.3L438.3 305L431.8 300.5L429.1 299.1L427.2 298.5L425.8 298.4L424.7 298.9L424.3 299.4L424.1 300.3L424.2 302.4L425.2 305.3L427.1 309.1L429.5 312.9L432.7 317.5L440.8 327.4L450.3 338.1L463.4 351.8L484 372.5L514 402.1L513.3 402L485 374.1L464.5 353.5L449.5 337.8L438.2 325.3L433.6 319.8L429.4 314.4L426.1 309.6L423.8 305.9L422 302.2L420.8 298.7L420.6 296.1L420.8 295.2Z"/>
<path fill="#0000a4" stroke="#0000a4" d="M551.8 182.8L602.3 163.2L602.7 163.9L555.8 182.2L522.9 195.1L497.4 205.6L479.2 213.6L462.9 221.5L456.7 224.9L452.2 227.6L447.9 230.6L445.1 233L443.3 235.4L443 236.1L443.1 236.8L443.8 237.5L445.6 237.8L447.6 237.7L451.1 237.1L460.2 234.7L473.9 230.3L493.4 223.5L518.7 214.3L561.2 198.5L616.7 177.5L617.2 177.7L525.2 212.3L492.1 224.5L468.5 232.8L454.3 237.5L445.5 239.8L442.2 240.4L440.2 240.5L438.5 240.1L437.6 239.5L437.5 238.9L437.6 238.2L438.8 236L440.8 233.9L443.9 231.4L448.2 228.4L452.7 225.7L463.7 219.8L478.7 212.8L497.5 204.6L521.5 194.8ZM418.5 289.8L419.7 289.2L421.4 289.2L423.2 289.8L425.9 291.1L428.7 292.9L432.2 295.6L441 302.9L456.1 316.4L477.7 336.5L503.5 361L536.5 392.7L535.7 393.4L503.4 362.4L478 338.5L457.8 319.8L443.4 307L434.8 300L428.6 295.7L425.9 294.3L424 293.8L422.7 293.7L421.5 294.2L420.7 295.5L420.6 297.8L421.5 300.9L423 304.5L425.4 308.6L428.4 313L432.6 318.5L437.1 324L447.3 335.5L461 349.9L482.4 371.5L513.3 402L512.8 401.8L482 371.5L461.1 350.5L445.9 334.7L434.4 321.7L430.1 316.4L426 311L422.4 305.7L420.1 301.5L418.4 297.5L417.5 294.4L417.5 291.6L417.8 290.7Z"/>
<path fill="#0000a8" stroke="#0000a8" d="M577.1 172L602 162.4L602.3 163.2L552.4 182.5L519.3 195.7L493.5 206.3L474.1 214.8L458.6 222.4L452.7 225.7L447 229.2L442.2 232.7L439.2 235.5L437.7 237.8L437.5 238.9L437.6 239.5L438.5 240.1L440.2 240.5L442.2 240.4L445.2 239.9L453.5 237.7L467.1 233.3L486.6 226.4L515 216.1L560 199.3L617.2 177.7L617.8 177.8L522.5 213.7L484.4 227.7L459.3 236.7L447.4 240.7L439.3 242.8L436.5 243.2L434.8 243.2L433.2 242.8L432.5 242L432.3 241.4L432.4 240.4L433 239.2L433.9 237.8L436.4 235.2L440.2 232.1L444.7 229L450.8 225.3L457.2 221.9L464.7 218.2L482.4 210.1L504.7 200.7L535 188.5ZM416 285.4L417.2 284.7L418.8 284.6L420.5 285.1L422.8 286.1L427.8 289.5L435.7 296.2L452 310.9L476.8 334.1L537.3 392L536.5 392.7L502.2 359.8L475.4 334.4L454 314.6L438.8 301L430.8 294.4L425.4 290.8L423.2 289.8L421.4 289.2L419.7 289.2L418.5 289.8L418 290.4L417.6 291.3L417.4 292.3L417.5 293.9L418.2 297L419.7 300.8L421.9 304.8L425.2 309.8L429 315L433.8 321L444.3 332.9L459 348.3L480.3 369.9L512.8 401.8L512.2 401.6L479.7 369.7L457.9 347.7L442.1 331.1L430.8 318.2L425.8 311.9L422.2 307L419.2 302.1L416.8 297.5L415.2 293.3L414.6 290L414.8 287.4L415.3 286.2Z"/>
<path fill="#0000ad" stroke="#0000ad" d="M552.5 180.7L601.6 161.7L602 162.4L550.3 182.5L514.8 196.5L489.1 207.2L469.1 216.1L459.8 220.6L452.7 224.3L446 228.2L441.2 231.4L437 234.6L433.9 237.8L433 239.2L432.4 240.4L432.3 241.4L432.5 242L433.2 242.8L434.8 243.2L436.5 243.2L439.2 242.8L446.9 240.8L458.4 237L479.1 229.6L511.4 217.8L557.6 200.5L617.8 177.8L618.3 177.9L525.7 212.8L447.6 241.6L438.7 244.6L433 245.9L431.1 246.1L429.6 246.1L428.2 245.6L427.6 244.8L427.4 243.9L427.5 242.9L428.7 240.4L431.2 237.4L434.4 234.5L438.1 231.8L443.3 228.4L449.4 224.8L456.2 221.2L471.8 213.8L492.2 204.9L518.5 194.1ZM413.8 280.8L415 280.1L416.5 279.9L418 280.2L419.7 280.8L423.7 283.4L429.6 288.4L444.9 302.6L479.4 335L538.2 391.3L537.3 392L502.3 358.4L474.8 332.2L449.7 308.8L434.1 294.8L427.2 289.1L424.3 287.1L422.1 285.8L420.4 285L418.8 284.6L417.2 284.7L416 285.3L415.4 285.9L414.9 287L414.6 288.4L414.6 290L415.2 293.3L416.8 297.5L419.2 302.1L422.2 307L425.8 311.9L430.7 318.1L441.6 330.6L456.7 346.5L478.7 368.7L512.2 401.6L511.6 401.4L477.7 368.1L455.1 345.3L439 328.2L432.5 321L427.4 314.9L422.9 309L418.9 303.3L415.8 298.1L413.9 293.9L412.4 289.4L412 285.8L412.2 284L412.5 282.7L413.1 281.6Z"/>
<path fill="#0000b2" stroke="#0000b2" d="M594 163.8L601.3 160.9L601.6 161.7L546.5 183.1L508.5 198.2L481 209.7L461.6 218.5L453.7 222.5L445.8 226.8L440.2 230.3L435.2 233.9L431.2 237.4L428.7 240.4L427.5 242.9L427.4 243.9L427.6 244.8L428.2 245.6L429.6 246.1L431.1 246.1L433 245.9L438.7 244.6L447.2 241.8L525.2 213L618.3 177.9L618.8 177.9L435.3 247.2L430 248.9L426.5 249.6L425.3 249.6L424.2 249.4L423.5 249L422.9 248.2L422.6 247.3L422.7 246L423.2 244.4L424 242.8L426.6 239.5L430.7 235.5L435.1 232.2L441.3 228.2L448.4 224.1L457.4 219.5L476.4 210.7L503.4 199.3L538.7 185.2ZM412.5 275.5L413.6 274.9L414.6 274.7L415.6 274.8L416.9 275.1L419.7 276.8L423.3 279.7L446 301.7L496.9 350.1L539 390.5L538.2 391.3L477.9 333.6L442.1 300L428.5 287.5L423.3 283.2L419.3 280.7L417.5 280L416.1 279.9L415 280.1L413.9 280.7L413.1 281.6L412.5 282.7L412.2 284L412 285.8L412.4 289.4L413.9 293.9L415.8 298.1L418.9 303.3L422.9 309L427.4 314.9L432.5 321L438.9 328.2L453.9 344.1L476.7 367.1L511.6 401.4L511.1 401.2L475.7 366.4L452.6 343.2L435.8 325.3L429.3 317.8L424.1 311.5L419.4 305.2L415.4 299.2L412.6 293.8L410.8 289.4L409.8 284.9L409.8 281.2L410.1 279.5L410.6 278L411.4 276.6Z"/>
<path fill="#0000b7" stroke="#0000b7" d="M564.5 174.3L600.9 160.2L601.3 160.9L543.8 183.2L506.5 198L479.2 209.5L468.2 214.4L458.7 218.8L450.4 223L442.3 227.5L436.2 231.5L430.7 235.5L426.6 239.5L424 242.8L423.2 244.4L422.7 246L422.6 247.3L422.9 248.2L423.5 249L424.2 249.4L425.3 249.6L426.5 249.6L430 248.9L435.3 247.2L618.8 177.9L619.3 178L468.3 235.1L445.9 244.1L423.7 253.9L421.4 254.6L419.9 254.7L418.9 254.3L418.2 253.6L417.8 252.4L417.7 251.1L417.9 249.3L418.5 247.5L420.5 243.7L423.7 239.8L427.3 236.4L432.5 232.4L438.7 228.4L445.6 224.4L452.7 220.7L462.6 215.9L486 205.6L518.4 192.4ZM412 268.9L413.7 268.1L415 268L416.4 268.6L417.8 269.7L430.8 284.4L444.4 298.2L539.8 389.8L539 390.5L496.9 350.1L446.3 302L422.8 279.3L419.4 276.5L416.9 275.1L415.6 274.8L414.6 274.7L413.6 274.9L412.5 275.6L411.4 276.6L410.6 278L410.1 279.5L409.8 281.2L409.8 284.9L410.8 289.4L412.6 293.8L415.4 299.2L419.2 305L423.7 310.9L428.7 317.1L434.7 324.1L450.8 341.2L474.2 365L511.1 401.2L510.6 401L472.2 363.3L448.1 338.8L438.5 328.7L431 320.4L424.6 312.8L419.6 306.4L415.2 300.1L411.9 294.6L409.5 289.1L408 284.3L407.5 279.8L407.7 277.5L408.1 275.5L408.7 273.6L409.7 271.6L410.8 270.1Z"/>
<path fill="#0000bc" stroke="#0000bc" d="M547.1 180.1L600.6 159.4L600.9 160.2L542.3 182.9L503.6 198.3L475.5 210.1L464.2 215.2L454.8 219.7L445.6 224.4L438.7 228.4L432.5 232.4L427.3 236.4L423.2 240.3L420.2 244.1L418.4 247.8L417.9 249.3L417.7 251.1L417.8 252.4L418.1 253.3L418.6 254.1L419.2 254.5L420.9 254.7L423.3 254L446.7 243.8L470 234.4L619.3 178L619.8 178L489.2 227.5L469.8 235L455.2 240.9L441.1 247.2L435.8 249.9L431.1 252.6L427.4 255.1L424.9 257.1L423 259.3L421.8 261.4L421.3 263.6L421.4 265.9L422.2 268.6L423.5 271.4L425.7 274.9L428.3 278.6L431.9 282.9L436.1 287.6L445 296.9L457.6 309.4L540.6 389L539.8 389.8L444.6 298.5L431.1 284.7L425.7 278.7L419.2 271.2L417.3 269.3L415.7 268.2L414.6 268L413.3 268.2L411.9 269L410.4 270.6L409.2 272.4L408.4 274.5L407.8 276.8L407.5 280.2L408 284.3L409 288L410.8 292.4L413.3 297L416.6 302.2L420.6 307.7L425.6 314L431 320.4L437.7 327.8L454 344.9L476.6 367.6L510.6 401L510 400.7L482.6 373.9L453.4 344.7L436.2 326.6L429.4 319.1L423.5 312.1L418.3 305.5L414.4 299.9L411.2 294.8L408.6 289.8L406.8 285L405.9 281L405.6 277.1L405.9 273.3L407.1 269L410.9 260L413.8 251.2L414.8 248.8L416.2 246.2L418.8 242.6L422.2 238.9L426.3 235.3L432.3 231.1L439.3 226.7L447.4 222.3L457.7 217.2L470.1 211.5L483.7 205.6L500.6 198.6Z"/>
<path fill="#0000c1" stroke="#0000c1" d="M535 184L600.3 158.7L600.6 159.4L530.7 186.6L488.1 203.8L472.4 210.5L458.6 216.7L447.4 222.3L437.7 227.7L431 231.9L424.8 236.6L420.6 240.5L417 244.9L415.2 247.9L413.8 251.2L410.9 260L407 269.3L406.2 272L405.7 274.4L405.6 278.3L406.2 282.4L407.4 286.7L409.3 291.2L411.8 295.8L415.1 301L419.1 306.6L424.1 312.9L429.5 319.2L436.4 326.9L452.7 344L475.6 366.9L510 400.7L509.5 400.5L481.6 373.1L452.4 343.9L434.9 325.6L428.2 318.2L422.2 311.2L417.2 304.8L413.1 299L409.9 293.9L407.3 288.9L405.5 284.4L404.3 280.2L403.8 276.1L404 271.8L405 266.6L407.5 259.4L410.5 252L413.2 246.9L416.4 242.7L419.9 239L424.1 235.4L430 231.2L437 226.8L445 222.4L453.9 217.9L465.2 212.7L478.1 207L494.2 200.3ZM465.7 236.6L501.5 222.8L619.8 178L620.3 178.1L494.1 225.9L473.1 234.1L458.5 240.1L444.7 246.4L439.3 249.3L435 251.9L431.7 254.3L428.9 256.6L426.9 259.1L425.6 261.5L425 264L425 266.4L425.6 269.2L426.9 272.3L428.8 275.6L431.3 279.3L434.5 283.4L438.6 288.2L447.7 297.8L461 311L541.4 388.3L540.6 389L462.8 314.4L445.2 297.1L437 288.6L430.8 281.7L426 275.5L423.1 270.6L422.1 268.3L421.5 266.2L421.3 264.3L421.5 262.4L422.1 260.7L423.1 259.2L424.4 257.6L426.5 255.8L429.2 253.8L432.4 251.8L440.8 247.4L451.6 242.5Z"/>
<path fill="#0000c6" stroke="#0000c6" d="M575.4 167.4L600 157.9L600.3 158.7L533.1 184.7L490.7 201.7L474.8 208.5L460.8 214.7L450.2 219.8L440.7 224.7L432.5 229.5L425.8 234.1L420.5 238.5L416.4 242.7L413.2 246.9L410.7 251.6L407.6 259.1L405 266.6L404 271.5L403.8 275.7L404.3 280.2L405.6 284.8L407.5 289.4L410.4 294.8L414.2 300.7L418.9 307.1L424.5 313.8L430.9 321.2L439.1 330.1L448.2 339.6L472.2 363.7L509.5 400.5L509.1 400.2L475.8 367.6L447.2 338.8L437.6 328.8L429.3 319.9L422.5 311.9L416.9 305.1L412.2 298.6L408.6 292.9L405.8 287.6L403.7 282.2L402.6 277.6L402.2 272.8L402.5 268.3L403.6 263.4L405.8 257L408.3 251.3L411.2 246.5L414.6 242.2L419.1 237.9L424.6 233.5L430.5 229.5L438.4 224.8L447.8 219.9L457.9 215L469.4 209.9L483.5 203.8L520.1 189ZM480.9 231L620.3 178.1L620.8 178.1L498.1 224.7L476.4 233.1L460.8 239.6L453.6 242.9L447.1 246.1L442.1 248.8L437.8 251.5L434.4 253.9L431.8 256.4L429.8 258.9L428.4 261.5L427.8 264.2L427.8 266.9L428.4 269.7L429.6 272.9L431.4 276.2L434.1 280.1L437.3 284.3L441.4 289L450.8 299.1L464.4 312.6L542.1 387.5L541.4 388.3L466.7 316.5L447.2 297.3L438.9 288.4L432.9 281.4L428.6 275.4L427.2 272.9L426 270.3L425.2 267.7L425 265.4L425.1 263.4L425.7 261.3L426.9 259.1L428.5 257.2L430.5 255.2L433.1 253.1L436.6 250.9L440.4 248.7L450 243.9L463.1 238.2Z"/>
<path fill="#0000cb" stroke="#0000cb" d="M557.5 173.4L599.7 157.2L600 157.9L531.1 184.6L489.9 201.1L473.5 208L460 214.1L448.2 219.7L438.8 224.6L430.4 229.5L423.8 234.1L418.4 238.5L414.2 242.7L410.6 247.4L407.7 252.5L404.8 259.7L402.9 266.2L402.2 270.9L402.3 275.4L403.1 280L404.5 284.5L406.6 289.3L409.6 294.7L413.8 300.9L418.5 307.1L424.2 313.9L430.8 321.4L447.9 339.6L471.9 363.7L509.1 400.2L508.6 399.9L475.5 367.5L447.4 339.3L437.6 329.1L429.3 320.2L422.3 312.2L416.9 305.6L411.8 298.9L408.1 293.3L405.2 288L402.9 282.9L401.4 278L400.7 273.4L400.7 269L401.4 264.2L403 258.5L405.3 253L407.9 248.3L411.3 243.7L415.2 239.5L420.1 235.3L426 231.1L432.9 226.8L440.6 222.5L451.1 217.2L462.2 212L475 206.4L508 192.9ZM471.3 235.2L487.5 228.8L510.6 219.9L620.8 178.1L621.3 178.1L501.6 223.6L479.3 232.3L463.6 238.9L455.9 242.4L449.8 245.4L444.7 248.2L440.4 250.9L436.8 253.7L434.1 256.2L432.1 258.8L430.8 261.5L430.2 264.2L430.1 266.8L430.7 269.9L432 273.1L433.7 276.5L436.4 280.5L439.7 284.8L443.8 289.6L453.4 299.9L467.2 313.7L542.9 386.7L542.1 387.5L471.5 319.5L451.5 299.8L443.1 291L437.1 284L432.6 278L429.6 272.9L428.6 270.3L427.9 267.7L427.7 265.2L428 263.1L428.7 260.9L429.8 258.9L431.3 256.9L433.3 254.9L435.6 253L438.7 250.8L446.7 246.3L457.1 241.3Z"/>
<path fill="#0000d1" stroke="#0000d1" d="M545.2 177.3L599.4 156.4L599.7 157.2L530.3 184L488.1 201L472.2 207.6L459.2 213.4L448.2 218.6L438 223.9L429.8 228.6L422.8 233.3L417.1 237.8L412.2 242.7L408.2 247.9L405.1 253.4L402.6 259.8L401.7 263.1L401.1 266L400.6 270.5L400.9 274.7L401.8 279.5L403.4 284.1L405.8 289.2L409 294.7L412.9 300.4L417.9 306.9L423.6 313.7L430.2 321.2L447.4 339.3L471.4 363.4L508.6 399.9L474.6 366.7L447 339.1L429.4 320.6L422.8 313.2L416.9 306.1L411.9 299.7L407.9 293.9L404.7 288.4L402.2 283.2L400.6 278.6L399.5 273.7L399.2 269.1L399.7 264.3L400.9 259.1L403 253.7L405.8 248.7L409.1 244.1L412.9 239.9L417.5 235.8L423 231.7L429.9 227.3L437.5 223L446.4 218.5L457.3 213.3L469.1 208L499.9 195.2ZM478.6 232.6L518.3 217.2L621.3 178.1L621.8 178.1L504.6 222.7L482.2 231.5L466.4 238.1L452.8 244.6L447.3 247.6L443 250.3L439.3 253.1L436.6 255.6L434.5 258.4L433 261.2L432.3 263.9L432.3 266.9L432.9 270L434 273.2L435.9 276.8L438.4 280.5L441.7 284.9L445.7 289.7L455.3 300.1L469.5 314.3L543.7 386L542.9 386.7L474.3 320.6L453.4 299.9L444.9 290.9L438.7 283.6L434.4 277.6L432.8 274.8L431.6 272.3L430.7 269.6L430.2 267.1L430.1 264.6L430.5 262.4L431.4 260.1L432.8 257.9L434.5 255.8L436.8 253.7L439.8 251.4L443 249.2L451.6 244.5L463.2 239.1Z"/>
<path fill="#0000d7" stroke="#0000d7" d="M536.1 180L599.1 155.6L599.4 156.4L525.5 185L500.9 194.8L481.4 202.8L467.8 208.6L454.9 214.4L444.2 219.6L435.7 224L426.8 229.2L420 233.9L414.7 238.3L409.9 243.1L406 248.2L403 253.7L400.7 259.7L400 262.8L399.5 265.6L399.2 270.3L399.7 274.6L400.7 279.1L402.4 283.8L404.9 288.7L408.1 294.1L412.3 300.2L417.1 306.4L423 313.4L429.7 320.9L446.9 339L470.9 363.1L508.1 399.6L473.6 365.9L446.6 338.9L428.9 320.3L422 312.6L416.1 305.6L411.1 299.1L406.9 293.1L403.8 287.9L401.3 282.9L399.5 278.2L398.3 273.2L397.9 268.9L398.2 264.3L399.3 259.1L401.1 253.9L403.8 248.9L407 244.4L411.2 239.8L415.8 235.6L421.3 231.5L427.7 227.4L434.9 223.3L444.2 218.5L454.1 213.7L465.3 208.7L493.9 196.7ZM485.3 230.2L525.7 214.6L621.8 178.1L622.3 178L507.2 221.9L484.6 230.8L468.3 237.7L460.5 241.3L454.3 244.4L449.2 247.2L444.9 250L441.2 252.9L438.5 255.4L436.5 258.1L435 261L434.3 263.9L434.2 266.6L434.8 269.7L435.9 273L437.8 276.6L440.3 280.6L443.6 285L447.6 289.8L457.4 300.4L471.6 314.7L544.5 385.2L543.7 386L476.4 321L454.8 299.6L446.6 290.7L440.5 283.4L436.1 277.1L434.6 274.3L433.5 271.8L432.6 269.1L432.2 266.5L432.3 263.9L432.9 261.5L433.9 259.2L435.5 257L437.7 254.6L440.2 252.4L443.3 250.1L447 247.8L456.2 242.8L468.5 237.2Z"/>
<path fill="#0000dc" stroke="#0000dc" d="M528.9 181.9L598.8 154.8L599.1 155.6L524.7 184.4L500.1 194.2L480.3 202.3L465.6 208.6L454.1 213.7L444.2 218.5L434.6 223.4L426.3 228.3L419.2 233.1L413 238.1L408.2 242.9L404.3 248.1L401.3 253.5L399.2 259.4L398.5 262.3L398.1 265.1L398 269.7L398.5 274.2L399.7 278.8L401.6 283.6L404.2 288.7L407.5 294.1L411.5 299.7L416.5 306.1L422.4 313L429.2 320.6L446.4 338.7L470.2 362.6L507.7 399.2L472.7 365.1L446.1 338.6L428.6 320.3L421.7 312.5L415.7 305.5L410.6 299L406.6 293.3L403.2 287.9L400.5 282.7L398.6 277.9L397.3 273.3L396.7 268.8L396.8 264.1L397.6 259.4L399.2 254.5L401.7 249.6L404.7 245.1L408.5 240.6L412.8 236.6L418.1 232.5L424.6 228.1L431.5 224L439.8 219.6L449.2 215.1L461.2 209.5L488.6 197.9ZM491.7 228L533.1 211.9L622.3 178L622.7 178L510.2 220.9L487 230.1L470.6 237.1L462.7 240.7L456.5 243.8L451.4 246.7L446.9 249.6L443.4 252.3L440.4 255.2L438.4 257.9L436.9 260.7L436.2 263.7L436.1 266.6L436.7 269.8L437.9 273.1L439.7 276.7L442.2 280.7L445.5 285.1L449.5 289.9L459.3 300.5L473.7 315L545.3 384.3L544.5 385.2L478.5 321.4L465.8 308.9L456.2 299.2L447.8 290.1L441.8 282.7L437.6 276.3L436.2 273.5L435.1 270.9L434.4 268.2L434.2 265.6L434.5 263L435.2 260.6L436.3 258.4L438.1 256L440.4 253.6L443.3 251.2L446.8 248.7L450.6 246.4L460.5 241.3L473.8 235.3Z"/>
<path fill="#0000e2" stroke="#0000e2" d="M588.9 157.7L598.6 154L598.8 154.8L529.9 181.5L488.1 198.1L471.7 205L458.6 210.7L447.1 216L437.5 220.8L429.2 225.3L422 229.8L415.9 234.1L410.8 238.4L406.6 242.7L403.3 246.9L400.5 251.7L398.5 256.5L397.2 261.6L396.7 266.8L397.1 271.9L398.2 276.8L400.2 282.1L403.2 287.9L406.9 293.9L411.6 300.3L417 307L423.8 314.9L431.8 323.7L441.2 333.5L466.6 359.1L507.2 398.9L468.1 360.7L440.9 333.4L431.4 323.4L423.2 314.5L416.5 306.7L410.8 299.7L406 293.1L402.2 287.2L399.2 281.3L397.2 276L395.9 270.6L395.5 265.7L396 260.7L397.3 255.7L399.5 250.5L402.5 245.7L406.1 241.4L410.6 237L415.5 233L421.8 228.7L429.4 224.1L438.1 219.4L447.6 214.8L459.1 209.5L486.8 197.7L525.8 182.2ZM497.8 225.8L540.2 209.4L622.7 178L623.2 178L512.2 220.3L489 229.6L472.5 236.6L465 240L458.8 243.2L453.3 246.3L448.9 249.1L445.2 252L442.3 254.8L440.2 257.6L438.8 260.5L438 263.5L437.9 266.5L438.5 269.6L439.7 273.2L441.6 276.8L444.1 280.8L447.4 285.2L451.4 290L461.3 300.9L475.7 315.4L546.1 383.5L545.3 384.3L480.5 321.8L467.4 308.8L457.9 299.1L449.3 289.7L443.4 282.3L441 278.9L439.2 275.9L437.9 273.1L436.9 270.4L436.2 267.4L436.1 264.7L436.5 262.3L437.3 259.8L438.7 257.4L440.6 255L443.1 252.6L446.1 250.2L449.7 247.7L453.9 245.2L464.4 239.9L478.4 233.7Z"/>
<path fill="#0000e8" stroke="#0000e8" d="M573.6 162.7L598.3 153.2L598.6 154L525.2 182.4L481.9 199.8L455.7 211L445.9 215.6L437.1 219.9L427.9 225L420.5 229.5L414.4 233.8L409.3 238.1L405.2 242.4L401.5 247.1L398.7 252.2L396.8 257.3L395.8 262.1L395.6 267.1L396.1 272L397.5 277.1L399.7 282.5L402.7 288L406.5 293.9L411.5 300.6L417.1 307.5L423.6 315L431.9 323.9L441.4 333.9L466.6 359.2L506.8 398.6L467.6 360.3L441.1 333.7L431.3 323.5L422.9 314.4L416.4 306.9L410.5 299.8L405.5 293.1L401.8 287.3L398.6 281.4L396.4 276.2L395.1 271.2L394.5 266.3L394.6 261.3L395.6 256.5L397.5 251.4L400.2 246.7L403.8 242L407.9 237.8L413 233.5L419.1 229.2L426.2 224.8L434.1 220.4L443.1 215.9L453.9 210.9L466 205.5L481.1 199.1L518.3 184.2ZM503.8 223.6L547.9 206.7L623.2 178L623.7 177.9L514.3 219.7L490.9 229L474.4 236.1L466.9 239.6L460.6 242.7L455.1 245.9L450.7 248.7L447 251.6L444.3 254.3L442.1 257L440.6 260L439.8 262.9L439.7 266L440.1 269.1L441.3 272.7L443.1 276.3L445.6 280.4L448.9 284.8L452.8 289.6L462.7 300.5L477.3 315.3L546.9 382.7L546.1 383.5L482.3 321.9L468.9 308.7L459.3 298.7L451 289.5L444.9 281.9L442.6 278.4L440.8 275.4L439.4 272.3L438.5 269.6L438 266.8L437.9 264.2L438.5 261.4L439.5 258.9L441.1 256.3L443 254.1L445.5 251.8L448.9 249.1L452.6 246.7L457.3 244L468.3 238.5L483.5 231.8Z"/>
<path fill="#0000ee" stroke="#0000ee" d="M563.2 165.9L598 152.4L598.3 153.2L523.8 182.1L480.2 199.6L454 210.8L443.9 215.5L435.2 219.8L426.2 224.8L419.1 229.2L412.9 233.6L407.3 238.4L402.9 243L399.6 247.6L397 252.6L395.3 257.6L394.5 262.4L394.5 267.2L395.2 272L396.7 276.9L399 282.2L402.2 288L406.3 294.2L411.2 300.6L416.8 307.4L423.6 315.1L441.1 333.7L466.2 358.9L506.3 398.2L467.2 359.9L441.2 333.9L423.1 314.8L416.2 307L410.4 300L405.5 293.5L401.3 287.1L398 281.4L395.8 276.2L394.3 271.4L393.5 266.4L393.4 261.6L394.2 256.8L395.9 251.8L398.3 247.3L401.6 242.7L405.4 238.5L410 234.4L415.7 230.2L422.6 225.8L430.4 221.3L439.2 216.8L449.4 211.9L461.6 206.4L475.1 200.7L510.5 186.4ZM509.9 221.5L555.7 203.8L623.7 177.9L624.2 177.9L516.3 219.1L492.9 228.5L476.3 235.5L468.8 239.1L462.4 242.3L456.9 245.4L452.5 248.3L448.8 251.2L445.9 254.1L443.7 256.9L442.3 259.8L441.5 262.7L441.4 265.8L441.8 268.9L443 272.5L444.8 276.2L447.3 280.2L450.5 284.6L454.6 289.7L464.5 300.6L479.1 315.4L547.7 381.8L546.9 382.7L483.6 321.5L470.3 308.3L460.4 298.1L452.2 288.9L446.2 281.2L443.9 277.7L442.2 274.7L440.9 271.6L440.1 268.8L439.7 266L439.8 263.2L440.5 260.3L441.6 257.9L443.3 255.4L445.6 252.9L448.5 250.4L451.7 248.1L455.6 245.5L460.2 242.9L472.3 237L488.1 230.2Z"/>
<path fill="#0000f5" stroke="#0000f5" d="M555.6 167.9L597.7 151.6L598 152.4L523.5 181.2L479.4 198.9L452.8 210.4L442.8 215L433.7 219.5L424.8 224.5L417.7 228.8L411.5 233.2L406 238L401.6 242.7L398 247.7L395.6 252.6L394 257.7L393.4 262.4L393.5 266.8L394.4 271.8L396 276.8L398.3 282L401.5 287.5L405.5 293.6L410.6 300.2L416.2 307L423.1 314.8L441 333.6L466 358.7L505.9 397.8L466.1 358.8L440.5 333.3L422.4 314.2L415.7 306.6L409.9 299.6L404.8 293L400.7 286.9L397.5 281.3L395.1 276.1L393.4 271.2L392.5 266.3L392.4 261.6L393 257L394.4 252.2L396.6 247.7L399.6 243.2L403.6 238.7L408.2 234.5L414 230.1L420.4 225.9L427.8 221.6L436.4 217.1L446.3 212.3L457.7 207.2L471 201.5L505.4 187.5ZM516.2 219.2L564.8 200.5L624.7 177.8L517.9 218.7L494.4 228.1L477.7 235.2L470.2 238.7L463.9 242L458.4 245.1L453.9 248.1L450.3 251L447.5 253.7L445.3 256.7L443.9 259.6L443.1 262.6L443 265.6L443.5 268.8L444.7 272.3L446.4 276L448.9 280L452.1 284.5L456.3 289.6L466.1 300.5L480.7 315.2L548.5 381L547.7 381.8L485.2 321.4L471.4 307.7L461.5 297.4L453.4 288.2L447.5 280.5L445.3 277L443.7 273.9L442.4 270.7L441.6 268L441.3 265.1L441.6 262.4L442.3 259.8L443.6 257.2L445.5 254.6L447.9 252L450.9 249.5L454.5 246.9L458.7 244.3L463.6 241.6L476.3 235.5L492.9 228.5Z"/>
<path fill="#0000fb" stroke="#0000fb" d="M549.9 169.2L597.5 150.8L597.7 151.6L522.2 180.9L478.1 198.5L451.6 209.9L441.2 214.7L432.2 219.2L423.5 224.1L415.6 229L409.5 233.4L404.1 238.1L400 242.7L396.6 247.7L394.3 252.6L392.9 257.5L392.4 262L392.6 266.6L393.5 271.5L395.3 276.5L397.8 281.9L401 287.4L405 293.2L410.1 299.9L415.7 306.6L422.6 314.4L440.5 333.3L465.3 358.1L505.5 397.4L465.4 358.2L439.8 332.6L421.8 313.7L415.3 306.3L409.3 299.2L404.2 292.5L399.9 286.3L396.6 280.7L394.2 275.4L392.5 270.5L391.6 265.8L391.4 261.1L391.9 256.6L393.2 252.1L395.2 247.6L398.1 243.2L401.9 238.8L406.7 234.3L411.9 230.3L418.1 226.2L425.8 221.6L434.6 217L444.2 212.3L454.8 207.5L467.9 201.8L501 188.3ZM523 216.7L625.2 177.7L519.9 218L496.3 227.5L479.6 234.6L472.1 238.2L465.7 241.4L460.2 244.6L455.7 247.6L452 250.6L449.3 253.3L447.1 256.2L445.6 259.1L444.8 262L444.6 265.1L445.1 268.3L446.2 271.8L447.9 275.5L450.4 279.6L453.6 284L457.7 289.1L467.7 300.3L482.2 315.1L502.3 334.7L549.3 380.1L548.5 381L486.5 321L472.7 307.3L462.7 296.8L454.6 287.5L451.4 283.4L448.8 279.8L446.6 276.2L445.1 273.2L443.8 270L443.2 267.2L443 264.3L443.3 261.5L444.2 258.8L445.7 256.1L447.8 253.4L450.3 251L453.6 248.3L457.7 245.6L462 243L467.4 240.1L480.8 233.8L498.6 226.3Z"/>
<path fill="#0003ff" stroke="#0003ff" d="M545.7 169.9L597.2 150L597.5 150.8L521.3 180.3L476.4 198.3L450.5 209.4L440.5 214.1L431.5 218.6L422.5 223.5L415.2 228L409.2 232.3L403.5 237.1L399.2 241.8L395.7 246.8L393.3 251.8L392.4 254.4L391.8 257L391.4 261.5L391.7 266.2L392.7 271L394.4 276L396.9 281L400.1 286.5L404.2 292.5L409.3 299.2L415.3 306.3L421.8 313.7L439.1 331.9L463.9 356.8L503.1 395.1L463.7 356.5L438.7 331.5L421.3 313.2L414.6 305.7L408.7 298.6L403.5 292L399.3 285.9L395.9 280.2L393.5 275.1L391.7 269.8L390.7 265.2L390.4 260.6L390.9 256.1L392.1 251.6L394.2 247L397 242.8L400.8 238.3L405.4 234L410.8 229.8L417 225.6L424.6 221.2L433.1 216.7L442.2 212.2L452.8 207.4L465.8 201.8L498.1 188.5ZM531.1 213.7L625.7 177.6L521.5 217.6L497.8 227L481.1 234.3L473.5 237.8L467.2 241.1L462 244.1L457.5 247.1L453.8 250.1L450.8 253.1L448.6 256L447.2 258.9L446.4 261.9L446.2 264.9L446.8 268.4L448 271.9L449.7 275.6L452.2 279.7L455.4 284.1L459.5 289.2L469.5 300.4L484 315.1L504.1 334.8L550.1 379.3L549.3 380.1L487.8 320.6L473.8 306.6L463.8 296.1L455.6 286.6L452.4 282.5L449.9 278.8L447.8 275.2L446.3 272.1L445.2 268.9L444.7 266.1L444.7 263.1L445.2 260.2L446.4 257.4L448 254.8L450.3 252.1L453.2 249.5L456.7 246.9L460.9 244.2L465.7 241.4L471.3 238.6L485.3 232.1L504.5 224.2Z"/>
<path fill="#0009ff" stroke="#0009ff" d="M542.6 170.1L597 149.2L597.2 150L524.4 178.1L480.5 195.6L456.3 205.9L437.4 214.5L428.8 218.9L420.7 223.4L414 227.6L408 231.9L403.1 236L399.3 239.9L396 244.1L393.5 248.4L391.8 252.4L390.8 256.6L390.4 260.9L390.7 265.1L391.6 269.5L393.1 274.1L395.4 279.1L398.3 284.3L401.9 289.7L406.2 295.6L411.4 301.9L417.2 308.7L432.6 325.2L454.5 347.4L432.4 325L416.7 308.2L410.5 301L405.3 294.7L401.1 288.9L397.4 283.4L394.4 278.2L392.3 273.5L390.7 268.6L389.8 264.3L389.5 259.9L389.9 255.6L391 251.5L392.6 247.5L394.9 243.6L397.8 239.9L401.3 236.2L405.3 232.7L410.1 229L415.7 225.3L422.1 221.5L430 217.2L446.9 209L470.1 199L500.4 186.6ZM542.4 209.5L626.2 177.6L551.5 206.1L517.9 219.1L493.7 229L476.6 236.7L469 240.6L463.1 244L458.3 247.3L454.3 250.6L451.3 254L449.3 257.4L448.1 260.9L447.8 264.4L448.2 267.3L449 270.3L450.3 273.4L452.1 276.7L454.3 280.3L457.2 284.2L464.8 293.3L474.9 304.1L489 318.3L550.9 378.4L550.1 379.3L488.9 320L474.9 306L464.7 295.2L456.6 285.6L453.5 281.5L450.9 277.6L449 274.2L447.5 270.8L446.6 267.8L446.2 264.9L446.4 261.9L447.1 259L448.5 256.1L450.3 253.6L452.9 250.8L455.9 248.3L459.9 245.5L464.5 242.6L469.9 239.7L476 236.6L491.3 229.8L511.9 221.4Z"/>
<path fill="#0010ff" stroke="#0010ff" d="M540.4 170L596.7 148.3L597 149.2L524.7 177.1L481.2 194.4L457.2 204.4L438.8 212.9L430 217.2L421.7 221.7L415.4 225.4L409.5 229.5L404.5 233.3L400.2 237.3L396.6 241.3L393.7 245.5L391.7 249.5L390.4 253.4L389.7 257.3L389.5 261.5L390 265.8L391.1 270.2L392.8 274.7L395.2 279.5L398.1 284.4L401.8 290L406.1 295.7L411.3 302L417.4 309L424.7 316.9L442.8 335.7L424.3 316.5L417 308.6L410.9 301.6L405.4 295L401.1 289.3L397.3 283.8L394.4 278.9L392.1 274.1L390.3 269.5L389.2 265.1L388.7 260.8L388.8 256.7L389.4 252.8L390.8 248.8L392.8 244.9L395.3 241.1L398.6 237.3L402.1 233.9L406.7 230.2L411.8 226.6L417.2 223.2L424.2 219.2L431.3 215.5L449.2 207L471.3 197.5L500.7 185.6ZM509.2 222.6L549.2 206.9L626.7 177.5L525.1 216.4L501.8 225.8L484.4 233.3L476.8 236.9L470.4 240.2L465.2 243.2L460.7 246.2L456.9 249.3L453.9 252.3L451.7 255.3L450.3 258.2L449.6 261.2L449.4 264.5L449.9 267.7L451 271.2L452.8 274.9L455.2 279L458.4 283.4L462.5 288.6L472.5 299.7L486.9 314.5L507.5 334.7L551.7 377.5L550.9 378.4L492.9 322.2L479.4 308.7L469.3 298.2L460.9 288.8L454.9 281L452.6 277.6L450.7 274.3L449.4 271.4L448.5 268.5L447.9 265.7L447.9 262.7L448.3 260L449.3 257.4L450.8 254.7L452.7 252.3L455.2 249.8L458.3 247.3L462 244.7L466 242.3L476.6 236.7L490.5 230.3Z"/>
<path fill="#0017ff" stroke="#0017ff" d="M539.2 169.6L596.5 147.5L596.7 148.3L525.5 175.8L481.9 193.1L458.4 203L440.4 211L431.5 215.4L423.2 219.8L416 223.9L410.3 227.6L405 231.5L400.8 235.1L397.2 238.9L393.9 243.1L391.7 246.8L390.1 250.5L389.1 254.6L388.6 258.5L388.8 262.5L389.5 266.5L390.8 271L392.7 275.6L395.3 280.4L398.4 285.4L402.3 290.9L406.6 296.5L411.9 302.9L418.1 309.9L433.7 326.3L417.7 309.4L411.5 302.5L406.2 296.2L401.8 290.5L397.9 285L394.6 279.8L392.1 275.2L390.1 270.5L388.7 266.1L387.9 261.8L387.8 257.8L388.2 253.9L389.2 250L390.7 246.4L392.9 242.5L395.4 239.3L398.7 235.7L402.5 232.2L406.9 228.8L412 225.2L417.8 221.7L424.3 218.1L431.8 214.2L449.2 206L470.9 196.7L499.9 185ZM513.1 221.2L553.1 205.6L627.3 177.3L526.7 215.9L502.8 225.5L485.9 232.8L478.3 236.5L471.9 239.8L466.6 242.9L462.1 245.9L458.4 249L455.6 251.7L453.4 254.7L451.9 257.7L451.1 260.6L451 264L451.4 267.2L452.5 270.8L454.2 274.4L456.6 278.5L459.8 283L463.8 288.1L473.8 299.3L488.5 314.3L509 334.5L552.5 376.6L551.7 377.5L494.2 321.8L480.7 308.3L470.6 297.8L462.2 288.3L456.3 280.6L454 277.1L452.2 273.8L450.9 271L450 268L449.5 265.2L449.4 262.2L449.9 259.5L450.9 256.8L452.5 254.1L454.4 251.7L457.2 249L460.4 246.5L464.1 243.9L468.5 241.3L479.3 235.7L493.8 229.1Z"/>
<path fill="#001eff" stroke="#001eff" d="M538.8 168.8L596.2 146.6L596.5 147.5L533.2 171.9L492.2 188L462.6 200.2L440.9 209.8L431.4 214.4L423.6 218.4L416.6 222.4L410.8 226L405.7 229.6L401.1 233.4L397.1 237.3L394.2 240.7L391.8 244.3L389.9 248L388.6 251.8L387.9 255.4L387.8 259.4L388.2 263.4L389.1 267.4L390.5 271.7L392.6 276.1L395.1 280.7L398.4 285.8L402.2 291L406.8 296.9L412.1 303.2L425.4 317.7L411.7 302.8L406.1 296.2L401.7 290.6L397.7 285.1L394.5 280.1L391.9 275.6L389.8 271.1L388.3 266.7L387.4 262.7L386.9 258.7L387.1 254.8L387.7 251.2L389 247.4L390.9 243.7L393.3 240.1L396.2 236.7L399.5 233.4L403.1 230.3L407.6 227L412.4 223.8L418.5 220.1L432.4 212.8L449 205.1L470.8 195.8L499.6 184.1ZM517.2 219.6L557 204.2L627.8 177.2L527.7 215.6L504.3 225.1L487.4 232.4L479.7 236.1L473.3 239.4L468.1 242.5L463.6 245.6L459.8 248.6L457.1 251.5L455 254.3L453.4 257.5L452.7 260.4L452.5 263.8L453 267L454.1 270.5L455.8 274.2L458.2 278.3L461.4 282.8L465.4 287.9L475.4 299.1L489.8 313.9L510.3 334.1L553.3 375.6L552.5 376.6L495.5 321.3L481.8 307.6L471.8 297.1L463.4 287.6L457.5 279.8L455.3 276.4L453.5 273L452.3 270.2L451.4 267.2L451 264L451 261.3L451.7 258.5L452.7 256L454.3 253.4L456.4 250.9L459.3 248.2L462.5 245.7L466.3 243.1L470.7 240.5L482 234.7L497.2 227.9Z"/>
<path fill="#0025ff" stroke="#0025ff" d="M539.3 167.7L596 145.8L596.2 146.6L533.5 170.8L492.9 186.8L463.3 198.9L441.4 208.5L432.4 212.8L424.5 216.8L416.9 221.1L411.1 224.6L405.6 228.4L401.2 231.9L397.2 235.6L394 239.2L391.4 242.8L389.5 246.2L388.1 250L387.2 253.8L386.9 257.6L387.2 261.6L388 265.7L389.4 269.9L391.2 274.2L393.8 279L396.7 283.7L400.5 289L404.7 294.4L409.7 300.5L422.3 314.4L409.5 300.3L404.3 294.1L400 288.6L396.2 283.2L393.1 278.3L390.6 273.6L388.6 269.3L387.2 265.1L386.4 261L386.1 256.9L386.4 253.1L387.2 249.3L388.7 245.6L390.5 242.1L393.1 238.6L395.7 235.6L399.2 232.2L403 229.1L407.8 225.6L412.9 222.3L419.4 218.5L433.1 211.4L450.1 203.6L471.9 194.3L500.1 183ZM521.7 218L560.9 202.8L628.3 177.1L529.8 214.9L506.3 224.4L489.3 231.8L481.6 235.5L475.2 238.8L469.9 241.9L465.3 245L461.6 248L458.8 250.9L456.5 254L455 256.9L454.2 259.9L454 263.2L454.5 266.4L455.6 270L457.3 273.7L459.7 277.8L462.8 282.3L466.8 287.4L476.8 298.6L491.4 313.7L511.9 333.8L554.1 374.7L553.3 375.6L496.6 320.6L482.9 306.9L472.9 296.4L464.6 286.9L458.8 279.1L456.6 275.6L454.9 272.3L453.7 269.4L452.8 266.4L452.5 263.3L452.7 260.4L453.3 257.8L454.6 255L456.3 252.4L458.6 249.8L461.3 247.3L464.9 244.6L468.8 242.1L473.7 239.2L485.2 233.4L501 226.4Z"/>
<path fill="#002cff" stroke="#002cff" d="M540.7 166.2L595.8 144.9L596 145.8L534.4 169.5L493.7 185.5L464.4 197.5L442.5 207L425.5 215.3L418 219.3L412 222.9L406.7 226.4L401.9 230L397.9 233.4L394.3 237.1L391.7 240.5L389.5 244L387.8 247.6L386.7 251.3L386.2 255L386.2 258.9L386.7 262.7L387.7 266.6L389.2 270.7L391.2 275L393.9 279.6L397 284.4L401 289.9L405.5 295.5L416.7 308.4L405 295.1L400.5 289.5L396.5 284L393.3 279.1L390.6 274.5L388.5 270.1L387 266L385.9 262.1L385.4 258.2L385.4 254.4L385.9 250.6L387 247L388.6 243.3L390.8 239.8L393.4 236.5L396.4 233.3L400.4 229.8L404.6 226.6L409.1 223.5L414.6 220.2L420.5 216.8L434 210L451.5 202L473.1 192.9L500.7 181.8ZM526.6 216.2L566 200.9L628.8 177L530.9 214.6L507.3 224.1L490.3 231.5L483.1 235L476.6 238.4L471.3 241.5L466.8 244.6L463 247.7L460.2 250.5L458.1 253.4L456.5 256.6L455.7 259.7L455.6 262.7L456 266.2L457.2 269.8L458.9 273.5L461.3 277.6L464.4 282L468.4 287.2L478.3 298.4L492.8 313.2L513.2 333.4L554.9 373.8L554.1 374.7L498 320.2L484 306.2L474 295.6L465.8 286.1L460 278.3L457.9 274.8L456.2 271.5L455 268.3L454.3 265.5L454 262.6L454.2 259.8L455 256.9L456.3 254.3L458 251.8L460.4 249.1L463.4 246.5L467 243.8L471.4 241L476.3 238.2L488.4 232.2L504.4 225.2Z"/>
<path fill="#0033ff" stroke="#0033ff" d="M543.2 164.2L595.5 144.1L595.8 144.9L534.2 168.7L494 184.4L464.6 196.4L442.6 206L425.1 214.4L418.3 218L411.9 221.7L406.9 225L402 228.5L397.6 232.2L394.3 235.5L391.5 238.9L389.3 242.1L387.5 245.7L386.2 249.2L385.5 252.9L385.3 256.7L385.7 260.5L386.5 264.5L387.8 268.3L389.7 272.6L392 277L395 281.8L398.8 287.1L402.7 292.3L413 304.3L402.5 292.1L398.3 286.7L394.6 281.4L391.4 276.3L389 271.9L387.1 267.6L385.8 263.8L384.9 259.8L384.5 255.9L384.7 252.2L385.4 248.6L386.6 245.1L388.5 241.4L390.6 238.3L393.5 234.8L396.8 231.6L400.3 228.5L404.9 225.1L409.7 222L415.6 218.4L421.6 215.1L435.7 208.1L453 200.3L475.3 191L503.1 179.9ZM532.1 214.1L571.1 199L629.3 176.9L532.5 214.1L509.3 223.4L492.3 230.9L484.9 234.4L478.5 237.8L473.1 240.9L468.6 244L464.7 247.1L461.8 250L459.6 253.1L458.1 256.1L457.3 259.1L457.1 262.3L457.5 265.7L458.6 269.3L460.4 273.2L462.8 277.3L466 281.8L469.8 286.7L479.7 297.9L494.1 312.7L514.8 333.1L555.7 372.8L554.9 373.8L499 319.5L485.3 305.7L475.2 294.9L467 285.4L463.8 281.3L461.3 277.6L459.2 274L457.5 270.7L456.4 267.4L455.7 264.7L455.5 261.7L455.8 259L456.7 256.2L458.1 253.4L460.1 250.7L462.7 248L465.8 245.4L469.9 242.5L474.3 239.7L479.4 236.9L492.1 230.7L508.8 223.5Z"/>
<path fill="#003aff" stroke="#003aff" d="M547 161.8L595.3 143.2L595.5 144.1L534.5 167.6L494.2 183.4L465.3 195.1L443.1 204.7L426 212.8L419.1 216.5L412.6 220.2L407.2 223.6L402 227.2L398.1 230.4L394.5 233.8L391.5 237.1L389.1 240.4L387.3 243.6L385.9 247.1L385 250.7L384.6 254.3L384.7 258L385.3 262L386.5 266L388.1 270L390.3 274.4L393 279L396.4 284.1L400.3 289.3L410.2 301.1L400 289L396.1 283.9L392.7 278.8L389.9 274.2L387.6 269.8L385.8 265.5L384.7 261.6L384 257.8L383.8 253.9L384.1 250.4L384.9 246.8L386.3 243.3L388.2 239.9L390.5 236.7L393.6 233.1L397.3 229.7L401 226.7L405.2 223.7L410.3 220.4L421.6 214L436.3 206.8L454.1 198.9L477 189.3L506.1 177.7ZM538.7 211.6L577.4 196.7L629.8 176.7L534.1 213.5L510.9 222.9L493.7 230.4L486.4 233.9L479.9 237.3L474.6 240.5L470 243.6L466.2 246.7L463.4 249.6L461.1 252.7L459.6 255.7L458.8 258.6L458.6 262L459.1 265.5L460.2 269L462 273L464.4 277.1L467.6 281.5L471.4 286.4L481.3 297.6L495.7 312.5L516.1 332.6L556.6 371.9L555.7 372.8L499.9 318.5L486.2 304.7L476.1 293.9L467.9 284.4L464.8 280.2L462.3 276.5L460.3 273L458.7 269.6L457.7 266.5L457.2 263.5L457.1 260.5L457.6 257.6L458.6 254.8L460.2 252.1L462.2 249.5L465 246.8L468.6 244L472.5 241.3L477.3 238.4L482.9 235.4L496.3 229L514.2 221.4Z"/>
<path fill="#0042ff" stroke="#0042ff" d="M552.7 158.6L595.1 142.3L595.3 143.2L535.4 166.3L496.1 181.7L467.4 193.3L445 202.8L427.6 211L420.6 214.6L413.9 218.3L408.4 221.6L403.3 225.1L398.8 228.4L395.3 231.5L392.2 234.7L389.4 238.1L387.2 241.6L385.6 244.9L384.5 248.3L383.9 251.9L383.8 255.6L384.2 259.4L385.1 263.3L386.5 267.2L388.4 271.4L390.8 275.9L393.9 280.7L397.5 285.7L401.7 291.1L406.6 297L401.4 290.9L397.2 285.5L393.6 280.5L390.5 275.7L388 271.3L386 267.1L384.5 263L383.5 258.9L383.1 255.2L383.1 251.5L383.7 248L384.8 244.4L386.4 240.9L388.6 237.4L391.4 234L394.4 230.9L397.9 227.8L402 224.7L406.8 221.4L411.6 218.5L423.9 211.8L439.3 204.4L457.9 196.2L480.7 186.8L510.7 175ZM547.1 208.5L586.2 193.4L630.4 176.6L562.9 202.4L528.9 215.7L504.8 225.6L495.7 229.7L487.9 233.5L481 237.1L474.9 240.8L470 244.3L466.2 247.7L463.3 251.1L461.4 254.6L460.4 258L460.1 261.9L460.5 264.6L461.3 267.6L462.6 270.8L464.4 274.1L466.7 277.9L469.4 281.7L476.8 290.7L486.8 301.5L500.9 315.8L557.4 370.9L556.6 371.9L500.7 317.5L486.9 303.5L476.8 292.7L468.7 283.1L465.7 278.9L463.3 275.2L461.3 271.6L460 268.4L459 265.1L458.6 262.3L458.7 259.3L459.4 256.3L460.6 253.5L462.4 250.8L464.7 248.1L467.7 245.4L471.4 242.6L475.7 239.8L480.7 236.9L486.4 233.9L501 227.1L520.2 219.1Z"/>
<path fill="#0049ff" stroke="#0049ff" d="M561.1 154.4L594.8 141.5L595.1 142.3L535.2 165.4L495.8 180.8L467.1 192.4L444.8 201.9L428.1 209.7L414.3 216.9L408.4 220.4L403.5 223.7L399.3 226.8L395.4 230L391.9 233.5L389.2 236.6L386.9 240.1L385.2 243.4L384 246.9L383.2 250.4L383 254L383.3 257.8L384.2 261.7L385.5 265.6L387.3 269.9L389.7 274.3L392.6 278.9L396 283.9L400.2 289.3L404.9 295.1L399.8 288.8L395.8 283.7L392.3 278.7L389.3 274L386.9 269.6L385 265.4L383.5 261.1L382.7 257.4L382.3 253.5L382.5 249.8L383.2 246.2L384.4 242.7L386.1 239.4L388.4 236L391.1 232.8L394.5 229.4L397.9 226.5L402.3 223.3L406.8 220.3L412 217.1L424.9 210.2L440.7 202.7L459.5 194.6L483.9 184.6L515.3 172.2ZM559.4 203.7L603.2 187L630.9 176.4L565.2 201.6L531.5 214.7L507.7 224.5L498.5 228.6L490.6 232.4L483.6 236L477.5 239.6L472.5 243L468.5 246.5L465.5 249.8L463.4 253.2L462.1 256.7L461.6 260.2L461.8 263.1L462.5 266.2L463.7 269.4L465.3 272.7L467.6 276.5L470.4 280.5L477.5 289.4L487.5 300.3L501.5 314.6L521.3 334L558.3 369.9L557.4 370.9L501.4 316.3L487.5 302.3L477.5 291.4L469.5 281.8L466.6 277.6L464.2 273.8L462.4 270.3L461.1 267L460.3 263.7L460.1 260.7L460.4 257.9L461.2 255L462.7 252.1L464.8 249.2L467.6 246.3L470.9 243.6L474.9 240.8L479.8 237.8L485.4 234.7L491.7 231.6L507.6 224.4L528.9 215.7Z"/>
<path fill="#0051ff" stroke="#0051ff" d="M574 148.5L594.6 140.6L594.8 141.5L499.2 178.5L470.2 190.1L448.8 199.2L431.3 207.1L418.2 213.7L407.4 219.9L402.6 223.1L398.8 225.9L395 229L391.5 232.3L388.9 235.3L386.6 238.5L384.8 241.9L383.5 245.3L382.6 248.7L382.3 252.2L382.5 256.2L383.4 260.7L384.8 264.9L386.9 269.6L389.7 274.7L393 279.8L397.2 285.5L402 291.5L397.1 285.5L393.4 280.6L390.2 275.8L387.5 271.2L385.3 267L383.7 263L382.5 259.1L381.8 255.4L381.6 251.7L381.9 248.2L382.7 244.7L383.9 241.4L385.6 238.2L387.9 234.9L390.8 231.6L394.3 228.3L398 225.1L401.9 222.3L406.7 219.2L417.2 213.1L430.7 206.3L447.6 198.6L467.7 190.2L492.8 180ZM529.9 215.4L566.9 200.9L618.1 181.3L631.4 176.3L570.3 199.7L537.8 212.3L514.5 221.8L497.8 229.2L490.4 232.7L484.3 236L478.9 239.2L474.3 242.4L470.7 245.4L467.7 248.5L465.6 251.4L464.2 254.4L463.3 257.3L463.1 260.6L463.6 264.1L464.7 267.7L466.5 271.6L468.9 275.7L472 280.2L475.8 285.1L485.6 296.3L500 311.2L520.4 331.4L559.1 368.9L558.3 369.9L505.1 318.2L491.5 304.4L481.5 293.9L473.3 284.4L467.6 276.5L465.5 273L463.8 269.7L462.7 266.8L461.9 263.7L461.6 260.6L461.8 257.7L462.5 255.1L463.8 252.3L465.6 249.6L467.9 247.1L470.9 244.3L474.3 241.8L478.2 239.2L482.8 236.5L494.5 230.5L509.6 223.7Z"/>
<path fill="#0058ff" stroke="#0058ff" d="M507.6 173.2L594.4 139.7L594.6 140.6L498.5 177.8L469.5 189.4L448.1 198.4L430.7 206.3L417.5 212.9L406.7 219.2L401.9 222.3L398 225.1L393.9 228.6L390.4 232L387.6 235.4L385.3 238.7L383.5 242.3L382.4 245.8L381.7 249.4L381.6 253.1L382 256.9L383 260.9L384.5 265L386.4 269.3L389 273.9L392.2 278.8L396.1 284.2L400.5 289.8L396.5 284.7L393 280.1L389.9 275.6L387.4 271.5L385.2 267.4L383.6 263.7L382.3 260L381.4 256.5L381 253L380.9 249.7L381.3 246.5L382.1 243.4L383.3 240.4L384.9 237.5L387.1 234.3L389.5 231.4L392.3 228.7L395.7 225.7L403.4 220.1L413.1 214.2L425 208L439.3 201.3L457.6 193.3L479.9 184.2ZM535.4 213.3L572 199L631.9 176.1L572 199.1L539.4 211.8L516.1 221.3L499.3 228.7L491.9 232.3L485.4 235.7L480 239L475.8 241.9L472.3 244.8L469.3 247.9L467.1 251L465.7 253.9L464.8 257L464.7 260.3L465.1 263.7L466.1 267.1L467.9 271.1L470.3 275.2L473.4 279.7L477.1 284.6L487 295.8L501.3 310.7L521.8 330.8L560 367.9L559.1 368.9L506.2 317.5L492.6 303.7L482.7 293.1L474.5 283.6L471.4 279.4L468.9 275.7L466.8 272.2L465.1 268.8L464.1 265.9L463.4 262.8L463.1 259.8L463.4 256.9L464.2 254.2L465.6 251.4L467.5 248.8L469.9 246.1L473 243.4L476.5 240.8L480.8 238L485.5 235.3L497.8 229.2L514 222Z"/>
<path fill="#0060ff" stroke="#0060ff" d="M511 170.9L594.2 138.8L594.4 139.7L498.3 176.9L469.7 188.3L448.3 197.3L431.6 204.8L418.3 211.4L407.4 217.5L402.3 220.8L398.2 223.7L394.2 226.9L390.6 230.3L387.5 233.8L385.1 237.1L383.3 240.4L382 244L381.2 247.5L380.9 251.1L381.1 254.6L381.9 258.6L383.1 262.6L384.9 266.8L387.4 271.5L390.3 276.1L393.9 281.4L398 286.7L394.1 281.6L390.8 277.1L387.9 272.7L385.7 268.8L383.8 264.9L382.3 261.5L381.2 257.9L380.5 254.4L380.2 251.2L380.3 247.9L380.9 244.7L381.8 241.6L383.2 238.5L385 235.4L387.1 232.6L389.8 229.6L392.8 226.8L395.9 224.2L404 218.5L413.8 212.7L426.3 206.3L440.7 199.6L458.8 191.9L481.7 182.5ZM542 210.7L577.8 196.9L632.5 176L573.1 198.7L541 211.2L518.1 220.5L501.2 227.9L493.8 231.5L487.5 234.9L482.2 238L477.6 241.2L474 244.1L471 247.2L468.7 250.3L467.2 253.3L466.4 256.3L466.2 259.7L466.6 262.9L467.6 266.5L469.4 270.5L471.7 274.5L474.8 279.1L478.5 284L483 289.3L488.4 295.3L502.5 309.9L522.9 330.1L560.8 366.9L560 367.9L507.1 316.4L493.5 302.7L483.4 291.8L475.5 282.5L472.4 278.4L469.9 274.5L467.9 271.1L466.4 267.7L465.3 264.4L464.8 261.6L464.7 258.7L465.1 255.7L466.1 252.9L467.6 250.2L469.7 247.5L472.3 244.8L475.4 242.2L479.3 239.5L483.8 236.7L489 233.8L502 227.4L519 220Z"/>
<path fill="#0068ff" stroke="#0068ff" d="M515.3 168.2L593.9 137.9L594.2 138.8L498 176L469 187.6L447.6 196.6L430.9 204.1L417.7 210.6L406.8 216.8L401.6 220.1L397.6 222.9L393.5 226.2L389.9 229.6L387.1 232.6L384.7 235.9L382.8 239.3L381.4 242.8L380.5 246.3L380.2 249.9L380.4 253.6L381.1 257.5L382.3 261.5L384 265.5L386.2 269.7L389 274.3L392.4 279.3L396.5 284.7L392.7 279.8L389.6 275.4L386.8 271.1L384.5 267L382.7 263.2L381.3 259.5L380.3 256L379.7 252.8L379.5 249.5L379.7 246.3L380.3 243.2L381.4 240.1L382.7 237.3L384.6 234.2L386.9 231.3L389.7 228.3L392.8 225.4L396.1 222.8L400.1 219.9L404.8 216.8L415.2 210.8L427.5 204.6L443 197.6L461.3 189.8L485 180.2ZM550.2 207.6L584.8 194.2L633 175.8L574.2 198.3L542.1 210.8L519.2 220.2L502.3 227.6L494.9 231.3L488.7 234.6L483.3 237.8L479 240.8L475.3 243.9L472.3 247L470.2 249.9L468.7 252.9L467.9 256L467.7 259.1L468.1 262.6L469.2 266.2L471 270.2L473.3 274.3L476.4 278.8L480.2 283.7L484.6 289L490 295L504.1 309.6L524.2 329.5L561.7 365.9L560.8 366.9L508 315.4L494.4 301.6L484.3 290.8L476.3 281.2L473.3 277L470.9 273.3L468.9 269.7L467.6 266.4L466.6 263.2L466.2 260.4L466.3 257.4L466.8 254.5L467.9 251.7L469.6 249L472 246.2L474.8 243.4L478.3 240.7L482.6 237.8L487.2 235.1L493 232L506.7 225.5L525 217.6Z"/>
<path fill="#0070ff" stroke="#0070ff" d="M521 165L593.7 137L593.9 137.9L498.3 174.9L469.8 186.3L448.2 195.3L431.1 203L417.5 209.6L406.2 216L397.8 221.5L393.6 224.8L389.7 228.3L386.8 231.4L384.3 234.7L382.3 238.1L380.9 241.3L380 244.7L379.6 248.2L379.6 251.8L380.2 255.6L381.2 259.4L382.9 263.6L384.9 267.7L387.5 272.2L390.6 276.9L394.6 282.3L391 277.5L388.1 273.2L385.4 268.9L383.3 265L381.6 261.3L380.4 257.8L379.4 254.2L379 250.8L378.9 247.4L379.3 244.2L380 241.3L381.2 238.2L382.8 235.2L384.9 232.2L387.5 229.1L390.2 226.4L393.7 223.4L397.2 220.7L405.6 215.1L416.5 209.1L429.3 202.8L444.5 195.9L464.3 187.5L488.3 177.8ZM561.9 203.1L596.1 189.9L633.6 175.6L571.3 199.5L537.9 212.6L514.4 222.3L505.2 226.5L497.7 230.1L490.6 233.9L484.4 237.6L479.8 240.9L475.9 244.3L473 247.5L470.9 251L469.6 254.7L469.2 258.2L469.4 261.1L470.2 264.2L471.3 267.4L473 270.7L475.1 274.3L477.8 278.2L484.9 287.2L494.8 298.1L508.6 312.2L528.1 331.4L562.5 364.9L561.7 365.9L508.6 314.2L495.1 300.3L485.1 289.5L480.8 284.5L477.1 279.9L474.2 275.7L471.9 271.9L470 268.2L468.8 265.1L468 261.9L467.7 258.8L468 255.7L468.8 252.7L470.3 249.8L472.3 247L474.9 244.3L478.2 241.5L482.1 238.6L486.7 235.7L492 232.8L498.3 229.5L513.4 222.7L533.2 214.4Z"/>
<path fill="#0078ff" stroke="#0078ff" d="M528.8 161L593.5 136.1L593.7 137L497.6 174.2L469.5 185.4L447.6 194.6L430.8 202L417.1 208.8L405.9 215L397.2 220.7L392.9 224L389.6 226.9L386.6 230.1L383.9 233.5L381.9 236.7L380.4 240.1L379.4 243.5L378.9 247L378.9 250.4L379.4 254.2L380.5 258.1L381.9 262.1L384 266.4L386.5 270.8L389.5 275.4L393.1 280.3L389.6 275.6L386.7 271.4L384.3 267.3L382.1 263.1L380.5 259.3L379.4 255.8L378.6 252.2L378.2 248.9L378.3 245.6L378.8 242.4L379.7 239.4L381.1 236.1L383 233.1L385.1 230.3L387.9 227.2L390.9 224.4L394.1 221.7L398 218.9L407.3 213L418.7 206.8L432.6 200.2L449.1 192.9L469.3 184.5L494.3 174.5ZM587.6 193.2L634.1 175.5L574.2 198.4L541.6 211.2L518.4 220.7L501.8 228.3L494.5 232L488.5 235.4L483.4 238.8L479.3 242L476.1 245.2L473.5 248.5L471.8 251.8L470.9 255.3L470.7 258.2L471.1 261.4L472 264.7L473.4 268.2L475.4 271.8L477.9 275.8L481.2 280.3L485.1 285.1L494.8 296L508.7 310.4L528.4 329.9L563.4 363.8L562.5 364.9L527.8 331.1L508.3 311.9L494.6 297.8L484.7 286.9L480.5 281.9L477 277.2L474.2 272.9L472.1 269.1L470.5 265.3L469.6 262L469.2 258.8L469.4 255.8L470.2 252.6L471.6 249.6L473.5 246.9L476.3 243.9L479.5 241.1L483.7 238.1L488.6 235L494.3 231.9L507.9 225.2L526.2 217.4L550.7 207.5Z"/>
<path fill="#0080ff" stroke="#0080ff" d="M539.7 155.8L593.3 135.2L593.5 136.1L497.4 173.3L469.8 184.3L447.8 193.5L431 200.9L417.3 207.6L406.6 213.4L397.4 219.3L393.1 222.6L389.6 225.6L386.4 228.8L383.7 232L381.6 235.3L380 238.6L379 241.9L378.4 245.2L378.2 248.7L378.6 252.2L379.4 255.8L380.8 260L382.6 264L385.1 268.7L388 273.2L391.5 278.2L388.1 273.5L385.3 269.2L382.8 264.9L381 261.1L379.5 257.4L378.4 253.8L377.8 250.4L377.6 246.9L377.8 243.7L378.5 240.5L379.5 237.4L381 234.4L383 231.4L385.3 228.5L388.3 225.4L391.7 222.4L399.2 216.8L409.3 210.7L421.4 204.4L435.6 197.7L452.9 190.3L474.4 181.4L501.9 170.5ZM545.7 209.5L580 196.2L616.9 182L634.7 175.3L578.2 196.9L546.5 209.3L523.4 218.7L506.9 226.1L499.4 229.7L493.2 233.1L488.1 236.1L483.7 239.2L479.9 242.3L477 245.4L474.8 248.4L473.3 251.4L472.5 254.5L472.3 257.6L472.7 261.1L473.7 264.7L475.3 268.4L477.6 272.6L480.6 277.1L484.4 282L488.8 287.3L494.2 293.2L508 307.6L528.1 327.6L564.3 362.8L563.4 363.8L512.6 314.2L499.2 300.7L489.4 290.1L481.6 280.8L478.5 276.6L476 272.9L474 269.3L472.5 265.9L471.4 262.8L470.9 259.8L470.8 256.8L471.2 253.9L472.2 251L473.6 248.4L475.5 245.8L478.2 243.1L481.3 240.4L485.1 237.6L489.3 235L494.5 232L507.1 225.8L523.8 218.5Z"/>
<path fill="#0088ff" stroke="#0088ff" d="M557 148.1L593.1 134.2L593.3 135.2L494 173.6L465.8 184.9L443.7 194.2L426.8 201.8L413.4 208.5L402.2 214.9L397.7 217.9L393.5 220.9L389.7 224.1L386.7 227L384 230L381.9 232.9L380.3 235.8L378.9 239L378.1 242.2L377.6 245.5L377.6 248.8L378.1 252.3L379 255.9L380.4 259.7L382.1 263.5L384.4 267.7L387 271.9L390.3 276.6L386.8 271.6L384.1 267.3L381.7 263.2L380 259.4L378.6 255.7L377.6 251.9L377 248.3L377 245L377.3 241.8L378.2 238.5L379.5 235.4L381.2 232.3L383.4 229.2L386.1 226.2L389.2 223.2L393 220.1L401.3 214.4L411.4 208.4L424.6 201.8L440.4 194.6L459.5 186.5L483.1 176.9ZM554.4 206.2L587.6 193.3L629.5 177.3L635.2 175.1L579.3 196.5L547.6 208.9L524.9 218.2L508.4 225.5L501.3 229L495.1 232.4L489.6 235.7L485.3 238.7L481.6 241.7L478.6 244.8L476.3 248L474.9 250.9L474.1 253.9L473.8 257.2L474.2 260.5L475.2 264.1L476.8 267.8L479.1 272L482.1 276.5L485.8 281.4L490.2 286.7L495.6 292.7L509.3 307L529.2 326.8L565.2 361.7L564.3 362.8L513.2 312.9L499.7 299.1L489.9 288.5L482.2 279.1L479.2 275L476.8 271.2L474.9 267.6L473.6 264.4L472.7 261.2L472.3 258.3L472.4 255.2L473 252.3L474.2 249.5L475.8 246.9L478.1 244.1L480.8 241.6L484.5 238.6L488.5 235.9L493.2 233.1L498.5 230.2L512.4 223.5L529.8 216Z"/>
<path fill="#0091ff" stroke="#0091ff" d="M590.9 134.1L592.9 133.3L593.1 134.2L498 171L470.3 182L448.6 191L432.5 198.1L418.6 204.7L407.5 210.6L398.7 216L394.5 218.9L390.4 222.2L387.2 225.1L384.3 228.2L382 231.1L380.1 234.1L378.6 237.4L377.6 240.4L377 244L377 247.8L377.5 251.8L378.6 255.7L380.2 260L382.4 264.4L385.2 269.2L388.7 274.4L385.8 270.2L383 265.6L380.7 261.5L378.9 257.5L377.6 253.7L376.7 250L376.4 246.5L376.4 243.1L376.9 239.9L377.8 236.9L379.3 233.7L381.1 230.6L383.6 227.4L386.6 224.2L389.8 221.3L394 218.1L398.2 215.1L407.8 209.3L419.8 203L433.9 196.4L452.2 188.5L474 179.5L501.5 168.6ZM567 201.3L598.3 189.2L635.8 174.9L576.4 197.7L543.4 210.7L520.2 220.3L511.3 224.4L503.7 228L496.6 231.8L490.7 235.4L486.1 238.7L482.2 242.1L479.2 245.5L477 249L475.8 252.5L475.3 256L475.5 258.9L476.2 262L477.3 265.2L478.8 268.3L480.9 272L483.5 275.9L486.8 280.3L490.6 284.8L500.4 295.7L513.9 309.6L533.1 328.6L566.1 360.7L565.2 361.7L532.7 330.1L513.9 311.6L500.4 297.8L490.7 287.2L483 277.8L480.1 273.6L477.8 269.8L476 266.1L474.8 262.9L474 259.6L473.8 256.6L474.1 253.5L475 250.6L476.5 247.6L478.5 244.9L481 242.2L484.2 239.5L488.1 236.6L492.7 233.7L497.9 230.8L503.9 227.7L519.1 220.7L539.1 212.3Z"/>
<path fill="#0099ff" stroke="#0099ff" d="M507.8 165.2L592.7 132.4L592.9 133.3L497.3 170.3L469.1 181.5L447.1 190.6L430.3 198.1L416.9 204.5L405.8 210.5L396.8 216.1L392.2 219.4L388.6 222.4L385.5 225.3L382.7 228.5L380.5 231.6L378.7 234.8L377.4 238.1L376.6 241.4L376.3 244.8L376.5 248.4L377.1 251.9L378.2 255.6L379.8 259.5L382 264L384.6 268.3L387.6 272.9L384.5 268.3L382.2 264.5L380.2 260.8L378.6 257.3L377.4 254L376.5 250.7L375.9 247.5L375.7 244.4L375.9 241.3L376.5 238.5L377.4 235.7L378.7 232.8L380.4 230L382.3 227.4L384.9 224.5L387.8 221.8L394.4 216.5L402.6 211.2L413 205.4L424.9 199.5L439.1 193L457.2 185.4L479.4 176.3ZM596.3 190L636.4 174.7L579.3 196.6L547.1 209.2L524.2 218.7L507.9 226.2L501 229.7L494.9 233.2L489.6 236.7L485.6 239.9L482.2 243.1L479.9 246.2L478.1 249.5L477.1 252.9L476.9 256L477.2 259L478 262.2L479.3 265.7L481.2 269.4L483.7 273.4L486.9 277.8L490.5 282.5L500.2 293.4L513.8 307.6L533.2 326.8L567 359.6L566.1 360.7L532.6 328.1L513.4 309.1L499.9 295.3L490.1 284.3L486 279.2L482.8 274.8L480 270.5L478 266.6L476.5 262.9L475.6 259.5L475.3 256.3L475.6 253.3L476.5 250.2L477.9 247.3L479.9 244.5L482.8 241.5L486.4 238.5L490.3 235.7L495.4 232.5L501.1 229.4L515 222.7L533.5 214.7L558.4 204.7Z"/>
<path fill="#00a2ff" stroke="#00a2ff" d="M516.1 160.9L592.5 131.5L592.7 132.4L496.5 169.5L468 180.9L446.4 189.9L430.1 197.1L416.6 203.5L405.5 209.5L396.6 215L392.3 218L388.5 221.1L385 224.4L382.2 227.5L379.9 230.7L378.2 233.7L376.9 236.9L376.1 240L375.7 243.3L375.8 246.7L376.4 250.4L377.4 254.1L378.8 257.8L380.8 262.1L383.3 266.4L386.2 270.8L383.4 266.7L381.2 262.9L379.2 259.1L377.6 255.5L376.4 252.1L375.7 248.9L375.2 245.7L375.1 242.5L375.5 239.4L376.1 236.7L377.3 233.7L378.7 230.9L380.6 228.1L382.8 225.3L385.5 222.5L388.4 219.9L395.7 214.4L404.6 208.9L415.3 203.1L428.2 196.9L444 189.9L462.5 182.1L485.5 172.9ZM554.8 206.2L587.5 193.5L619.7 181.1L636.9 174.5L582.8 195.3L551.4 207.6L529.2 216.7L512.6 224.1L505.5 227.6L499.2 231L494.1 234.2L489.7 237.2L486.1 240.3L483.2 243.3L481 246.3L479.5 249.4L478.7 252.6L478.4 255.7L478.8 258.9L479.8 262.5L481.3 266.2L483.6 270.4L486.6 274.9L490.3 279.8L494.7 285.1L499.8 290.8L513.6 305.2L533.2 324.8L567.9 358.5L567 359.6L517.7 311.4L504.3 297.8L494.6 287.2L487.1 278.1L484 273.9L481.7 270.2L479.7 266.6L478.4 263.4L477.4 260.1L476.9 257.1L477 254L477.6 251.1L478.6 248.3L480.2 245.7L482.2 243.1L484.9 240.4L488.2 237.7L492.2 234.9L496.9 232L502.2 229.1L515.1 222.7L532.1 215.4Z"/>
<path fill="#00aaff" stroke="#00aaff" d="M527.8 155.3L592.3 130.5L592.5 131.5L496.3 168.6L467.8 180L446.2 188.9L429.4 196.3L416 202.8L404.9 208.7L396.1 214.1L392 217L388 220.2L384.7 223.3L381.8 226.5L379.6 229.5L377.8 232.5L376.5 235.6L375.6 239L375.2 242.4L375.2 245.7L375.7 249.3L376.7 252.9L378.1 256.7L380.1 260.9L382.6 265.3L385.4 269.6L382.4 265L380.1 261.2L378.3 257.6L376.8 254.1L375.7 250.6L374.9 247.2L374.6 244L374.6 241L375 237.9L375.9 234.9L377 232L378.6 229.3L380.5 226.6L382.8 223.8L385.7 221L389.1 218L396.9 212.4L406.1 206.9L417.6 200.9L431.2 194.5L447.3 187.4L467.6 179.1L493 168.9ZM566.3 201.7L597 189.8L637.5 174.4L579.9 196.5L547.2 209.3L524.4 218.9L515.5 222.9L507.9 226.6L500.7 230.5L494.8 234.1L490.2 237.5L486.4 241L483.6 244.3L481.5 247.8L480.4 251.2L480 255L480.2 257.8L480.9 260.6L482 263.9L483.7 267.3L485.7 270.8L488.4 274.8L495.3 283.5L504.9 294.2L518.3 308L537 326.5L568.8 357.4L567.9 358.5L536.6 328.1L518.1 309.8L504.8 296.2L495.1 285.6L490.9 280.6L487.5 276.2L484.8 272.2L482.5 268.4L480.7 264.8L479.5 261.6L478.7 258.2L478.4 255.3L478.7 252.2L479.5 249.4L480.8 246.7L482.7 243.9L485.2 241.1L488.4 238.3L492.2 235.4L496.4 232.7L501.2 229.9L507.2 226.7L521.4 220.1L540.4 212Z"/>
<path fill="#00b3ff" stroke="#00b3ff" d="M546.5 147.1L592.1 129.6L592.3 130.5L496.7 167.5L468 178.9L446.4 187.8L429.6 195.2L416.2 201.6L405 207.5L396 213L391.5 216.1L387.5 219.3L384.3 222.3L381.5 225.3L379.2 228.3L377.4 231.3L376 234.4L375.1 237.6L374.6 240.8L374.6 244L375 247.5L375.8 251.2L377 254.7L378.8 258.7L381 262.8L383.9 267.4L381.1 263.1L379 259.2L377.1 255.3L375.7 251.8L374.7 248.2L374.1 245.1L374 241.8L374.2 238.7L374.8 235.7L375.8 232.8L377.1 229.9L379.1 226.8L381.4 223.9L384.2 221L387.5 218L391.1 215.2L399.3 209.7L409.8 203.7L421.9 197.7L437.2 190.7L455.6 182.9L477.6 174ZM587.8 193.4L617.8 181.9L638.1 174.2L582.2 195.6L550.5 208.1L527.5 217.6L511.2 225.2L504.3 228.8L498.3 232.4L493.4 235.7L489.4 239L486.4 242.1L484 245.5L482.4 249L481.7 252.3L481.6 255.3L482 258.2L482.9 261.5L484.3 264.9L486.2 268.5L488.8 272.6L492 277L495.7 281.6L505.1 292.3L518.5 306.2L537.5 325L569.7 356.3L568.8 357.4L537 326.5L518.3 308L504.9 294.2L495.3 283.5L491.1 278.4L487.9 274L485.1 269.7L483 265.9L481.4 262.2L480.4 258.8L480 255.7L480.1 252.7L480.8 249.7L482.1 246.7L483.9 243.8L486.4 241L489.5 238.1L493.4 235.2L497.9 232.2L503.2 229.1L515.9 222.7L532.8 215.3L555.2 206.1Z"/>
<path fill="#00bbff" stroke="#00bbff" d="M586.1 130.9L591.9 128.6L592.1 129.6L495.9 166.7L467.8 177.9L445.8 187L429.2 194.3L415.6 200.8L404.1 206.9L395.3 212.3L391.1 215.2L387 218.5L383.9 221.3L381 224.4L378.8 227.3L376.9 230.3L375.5 233.4L374.5 236.6L374 239.8L374 243.1L374.4 246.5L375.2 250.1L376.4 253.5L378.1 257.5L380.3 261.7L383.1 266.2L380.2 261.6L378 257.5L376.1 253.5L374.8 249.7L373.9 246.1L373.4 242.6L373.4 239.2L373.9 236.1L374.7 233.1L376.2 229.8L378 226.8L380.4 223.6L383.4 220.4L386.5 217.5L390.6 214.3L394.8 211.4L404.2 205.7L416.1 199.5L430.4 192.7L448.6 184.8L470 176L497.3 165.2ZM559 204.7L591 192.2L621.5 180.5L638.6 174L586.3 194.1L555.4 206.2L533 215.4L516.8 222.7L509.7 226.2L503.8 229.5L498.6 232.6L494.2 235.7L490.6 238.8L487.7 241.9L485.7 244.7L484.2 247.8L483.4 250.9L483.1 254.1L483.5 257.5L484.5 261.1L486.1 264.8L488.3 269L491.3 273.5L494.8 278.2L499.2 283.5L504.3 289.2L517.8 303.4L537.2 322.6L570.6 355.2L569.7 356.3L539.7 327.1L521.7 309.3L508.6 296L499.1 285.6L491.6 276.5L488.6 272.3L486.2 268.5L484.3 264.9L483 261.8L482 258.5L481.6 255.6L481.6 252.6L482.2 249.7L483.2 247L484.9 244.1L487 241.4L489.7 238.7L493.1 236L497.1 233.1L501.8 230.2L506.8 227.4L519.8 221.1L536.4 213.8Z"/>
<path fill="#00c4ff" stroke="#00c4ff" d="M505.7 160.9L591.7 127.7L591.9 128.6L496.8 165.4L468.1 176.8L446 185.9L429.5 193.1L416.1 199.5L405.2 205.2L395.7 210.8L391.4 213.7L387.3 216.9L383.9 219.9L380.9 223L378.6 225.9L376.6 229L375.2 231.9L374.1 235.1L373.5 238.2L373.4 241.6L373.7 245.1L374.4 248.5L375.6 252.1L377.1 255.9L379.3 260L381.9 264.3L379.3 260.2L377.4 256.6L375.8 253.2L374.6 250L373.6 246.7L373.1 243.8L372.8 240.7L372.9 238L373.3 235.2L374.1 232.4L375.2 229.8L376.6 227.1L378.5 224.4L380.8 221.7L383.4 219.1L386.1 216.6L393.1 211.3L401.7 206L411.8 200.5L423.8 194.7L438.5 188.1L456.2 180.6L477.7 171.9ZM571.8 199.7L601.7 188.1L639.2 173.8L583.9 195L551.7 207.7L528.7 217.3L520.2 221.2L512.5 225L505.7 228.7L499.8 232.3L495.1 235.8L491.2 239.2L488.4 242.5L486.3 246L485.1 249.4L484.7 253.2L484.9 256.2L485.6 259L486.7 262.2L488.3 265.6L490.3 269.1L492.8 272.8L499.6 281.6L509.2 292.3L522.3 305.9L540.8 324.2L571.5 354.1L570.6 355.2L540.3 325.8L522.1 307.7L509.1 294.4L499.4 283.7L492.1 274.5L489.3 270.5L487 266.7L485.3 263.1L484.1 259.9L483.3 256.5L483.1 253.6L483.4 250.5L484.2 247.8L485.5 245L487.4 242.2L490 239.4L493.2 236.5L497.1 233.6L501.3 230.9L506.2 228.1L512.3 224.9L526.7 218.1L545.3 210.3Z"/>
<path fill="#00cdff" stroke="#00cdff" d="M517.1 155.4L591.5 126.7L591.7 127.7L496.1 164.6L467.9 175.8L445.8 184.9L429.8 191.9L415.8 198.5L404.9 204.2L395.5 209.8L391.2 212.7L386.9 215.9L383.6 218.8L380.8 221.7L378.4 224.6L376.3 227.7L374.6 231L373.6 234.1L373 237.3L372.8 240.4L373.1 243.8L373.8 247.3L374.9 251L376.5 254.8L378.4 258.6L381 263L378.6 259.1L376.7 255.5L375.1 252L373.8 248.6L372.9 245.3L372.4 242.4L372.3 239.4L372.4 236.4L373 233.6L373.9 230.5L375.2 227.8L376.9 225.1L379 222.2L381.3 219.7L384.2 216.9L387.2 214.4L394.2 209.4L403.3 204L414.5 198L427.5 191.9L443 185.1L462.5 177ZM598.8 189.3L631.5 176.7L639.8 173.6L586.8 193.9L555.5 206.3L533.3 215.5L516.7 223.1L509.8 226.7L504 230.1L499.1 233.4L494.9 236.7L491.7 239.8L489.2 243.1L487.5 246.4L486.5 249.8L486.3 252.8L486.5 255.9L487.3 259.2L488.7 262.6L490.5 266.3L493 270.3L496 274.5L499.6 279.1L509 289.9L522.3 303.8L541 322.3L572.5 353L571.5 354.1L540.5 323.9L521.9 305.4L508.7 291.8L499.2 281.1L495.1 276L491.9 271.5L489.3 267.5L487.3 263.6L485.9 260.1L485 256.8L484.7 253.6L484.9 250.5L485.7 247.6L487 244.6L489.1 241.6L491.8 238.6L495.1 235.8L499 232.8L503.7 229.9L509.5 226.6L522.5 220.1L540.2 212.4L563.6 203Z"/>
<path fill="#00d5ff" stroke="#00d5ff" d="M535 147.5L591.3 125.8L591.5 126.7L495.9 163.7L467.2 175.1L445.6 184L429.2 191.1L415.2 197.7L404.4 203.3L395.2 208.8L390.9 211.7L386.7 214.9L383.3 217.8L380.3 220.7L377.9 223.7L375.8 226.7L374.3 229.7L373.2 232.8L372.5 236L372.3 239.2L372.4 242.4L373.1 246.1L374.2 249.7L375.7 253.5L377.7 257.4L380.1 261.5L377.8 257.6L375.8 253.8L374.2 250.3L373.1 247L372.2 243.7L371.8 240.6L371.7 237.4L372 234.5L372.7 231.5L373.7 228.8L375.2 225.9L377.1 223.2L379.4 220.3L381.9 217.7L385.2 214.8L388.7 212L396.5 206.8L406.8 200.9L418.4 195.1L433 188.4L450.3 181L471.4 172.4ZM566.8 201.8L597.5 189.8L628.3 178L640.4 173.4L585.1 194.6L553.4 207.2L531 216.6L522.4 220.5L514.8 224.3L508 228.1L502.3 231.7L497.7 235.1L493.9 238.6L491 242.2L489.1 245.7L488.1 249.3L487.9 252.9L488.2 255.6L488.9 258.5L490.1 261.7L491.7 265.1L493.8 268.6L496.3 272.3L503.2 281L512.5 291.4L525.7 305.1L543.7 322.9L573.4 351.8L572.5 353L543.4 324.7L525.5 306.9L512.4 293.6L503 283.2L495.6 274L492.8 270.1L490.5 266.3L488.7 262.6L487.4 259.5L486.6 256.4L486.3 253.4L486.4 250.5L487 247.6L488.2 244.8L489.9 242L492.2 239.3L495.2 236.4L498.7 233.6L502.8 230.8L507.2 228.1L512.8 225.1L526 218.7L543.4 211.2Z"/>
<path fill="#00deff" stroke="#00deff" d="M571.5 132.4L591.2 124.8L591.3 125.8L494.1 163.3L466 174.5L443.7 183.8L426.5 191.3L413.2 197.6L401.8 203.6L392.9 209.1L388.5 212.2L385.1 214.8L381.9 217.7L379.1 220.6L376.9 223.4L375 226.3L373.6 229.2L372.5 232.3L371.9 235.4L371.7 238.5L371.9 241.8L372.5 245L373.5 248.4L375 252.1L376.7 255.7L379.1 259.9L376.8 255.9L374.8 252L373.2 248.3L372.1 244.7L371.4 241.3L371.2 238L371.3 234.8L371.9 231.7L372.9 228.7L374.3 225.9L376.2 222.8L378.5 219.9L381.1 217.1L384.3 214.2L388.2 211.2L392.4 208.2L401.6 202.6L413 196.6L426.8 190.1L444.3 182.4L464.9 173.9L490.3 163.8ZM583.7 195.2L612.6 184L641 173.2L587.5 193.8L556.2 206.1L534.1 215.4L525.4 219.3L518.1 222.9L511.2 226.6L505.5 230L500.7 233.4L496.7 236.8L493.6 240.2L491.4 243.6L490.1 247L489.5 250.5L489.5 253.3L490 256.3L491 259.5L492.5 263L494.5 266.6L496.9 270.3L499.9 274.5L503.6 279.1L512.8 289.6L525.9 303.2L544.1 321.3L574.4 350.7L573.4 351.8L543.7 322.9L525.7 305.1L512.5 291.4L503.2 281L499.2 276.2L495.9 271.8L493.3 267.8L491.1 263.9L489.5 260.2L488.5 257L487.9 253.8L487.9 250.8L488.4 247.9L489.5 244.9L491.2 241.9L493.4 239.2L496.1 236.5L499.5 233.7L503.6 230.8L508.4 227.8L513.9 224.8L520.1 221.6L535.4 214.7L555.5 206.3Z"/>
<path fill="#00e7ff" stroke="#00e7ff" d="M502.5 158L591 123.9L591.2 124.8L495.5 161.8L467.8 172.8L445.5 181.9L428.7 189.2L415.3 195.5L403.9 201.4L394.7 206.7L390.2 209.8L386.4 212.6L382.7 215.6L379.6 218.7L377.1 221.6L375 224.6L373.4 227.5L372.2 230.6L371.5 233.6L371.2 236.8L371.3 240.1L371.8 243.5L372.8 247.1L374.3 250.9L376.1 254.6L378.4 258.8L376.2 255L374.5 251.7L373.1 248.4L372 245.3L371.2 242.2L370.8 239.1L370.6 236.2L370.8 233.6L371.4 230.8L372.2 228.2L373.5 225.4L375 222.9L376.8 220.4L378.9 217.9L381.7 215.2L384.6 212.7L391.2 207.8L399.7 202.6L409.9 197.1L422.6 190.9L437.2 184.4L454.5 177.2ZM565.5 202.4L596.9 190.1L626.9 178.6L641.6 173L591.6 192.2L561.6 204L540.2 212.8L524.2 220.1L517.5 223.5L511.5 226.7L506.5 229.8L502.2 232.9L498.8 235.8L495.9 238.9L493.6 242L492.2 245L491.3 248L491 251.2L491.4 254.6L492.3 258L493.8 261.7L496 265.9L498.7 270.2L502.2 274.8L506.3 279.9L511.3 285.7L524.5 299.6L543.4 318.4L575.3 349.6L574.4 350.7L546.1 323.2L528.6 305.9L515.8 292.7L506.3 282.4L498.9 273.2L496.2 269.2L493.8 265.5L492 261.8L490.7 258.7L489.9 255.6L489.5 252.7L489.5 249.8L490.1 246.9L491.2 244.1L492.8 241.4L494.9 238.7L497.6 236L501 233.1L504.8 230.5L509.1 227.8L514.2 224.9L526.8 218.6L543.1 211.5Z"/>
<path fill="#00f0ff" stroke="#00f0ff" d="M515.8 151.8L590.8 122.9L591 123.9L495.8 160.6L467.6 171.8L445.5 180.9L428.9 188L415.5 194.3L404 200.2L394.7 205.6L389.8 208.8L386.1 211.6L382.4 214.6L379.4 217.4L376.8 220.4L374.8 223.2L373.1 226.2L371.9 229.1L371.1 232L370.7 235.2L370.7 238.4L371.2 241.9L372.1 245.4L373.4 249.1L375.1 252.9L377.3 256.9L375.2 253.1L373.4 249.6L372.1 246.4L371.1 243.2L370.5 240.1L370.2 237.1L370.2 234.2L370.5 231.4L371.2 228.8L372.3 226L373.7 223.2L375.5 220.6L377.6 218L380.1 215.4L383.1 212.7L386.3 210.1L393.6 205.1L402.9 199.7L413.6 194.1L427.1 187.8L442.2 181.2L461.2 173.3ZM579.8 196.8L608.9 185.5L642.2 172.8L589.8 192.9L558.5 205.3L536.3 214.6L527.7 218.6L520.4 222.2L513.5 226L507.9 229.4L503.1 232.9L499.5 236.2L496.5 239.5L494.4 243L493.1 246.5L492.7 250L492.8 253L493.4 256.1L494.5 259.3L496 262.4L498 266L500.4 269.7L506.9 278.2L516.2 288.7L529.1 302.1L547 319.9L576.3 348.4L575.3 349.6L546.5 321.5L528.8 304L516.1 290.8L506.7 280.4L499.6 271.5L497 267.5L494.7 263.7L493 260L491.9 256.8L491.2 253.6L491.1 250.6L491.4 247.5L492.3 244.6L493.8 241.7L495.8 238.9L498.2 236.3L501.5 233.4L505.4 230.6L509.9 227.7L514.9 224.8L521 221.6L535.2 215L554.1 207Z"/>
<path fill="#04f9ff" stroke="#04f9ff" d="M538.3 142.1L590.6 122L590.8 122.9L495.1 159.9L466.5 171.2L444.8 180.1L428.3 187.3L415.1 193.4L403.8 199.2L394.5 204.6L389.6 207.8L385.7 210.6L381.9 213.7L379 216.5L376.4 219.4L374.3 222.3L372.6 225.2L371.4 228L370.6 231.1L370.2 234.3L370.2 237.5L370.6 240.9L371.5 244.4L372.7 247.9L374.5 251.9L376.7 255.8L374.6 252.1L372.8 248.4L371.4 244.9L370.4 241.6L369.8 238.4L369.6 235.3L369.8 232.2L370.3 229.4L371.1 226.7L372.4 223.8L374.2 220.9L376.1 218.3L378.6 215.5L381.4 212.9L384.5 210.2L388.2 207.5L396.7 202L407 196.4L419.5 190.2L433.9 183.7L451.4 176.3L473.1 167.5ZM621 180.9L642.8 172.6L592.8 191.8L562.9 203.6L541 212.7L525.1 220L518.5 223.5L512.6 226.9L507.5 230.2L503.6 233.3L500.4 236.3L497.9 239.3L495.9 242.7L494.8 245.7L494.3 248.7L494.4 251.9L494.9 255.1L496.1 258.6L497.8 262.3L500 266.1L502.8 270.4L506.4 275L515.4 285.6L528.4 299.2L546.8 317.6L577.2 347.3L576.3 348.4L546 319L527.9 300.9L514.8 287.2L505.7 276.7L501.9 271.8L498.8 267.3L496.4 263.3L494.6 259.5L493.4 256.1L492.8 252.6L492.7 249.3L493.2 246.1L494.4 243L496.2 240L498.5 237.1L501.7 234.1L505.4 231.1L509.8 228.2L515.2 225L521.3 221.7L535.9 214.9L554.7 206.8L580.6 196.5Z"/>
<path fill="#0dfffc" stroke="#0dfffc" d="M493.8 158.3L590.4 121L590.6 122L494.4 159.1L465.8 170.4L444.2 179.3L428.1 186.3L414.5 192.6L403.2 198.4L394 203.7L389.3 206.8L385.4 209.6L381.6 212.7L378.6 215.5L375.9 218.5L373.9 221.3L372.1 224.3L370.9 227.1L370.1 230.1L369.7 233.3L369.7 236.5L370.1 239.8L370.9 243.4L372.2 246.9L373.8 250.7L375.9 254.5L374 251L372.4 247.8L371.1 244.6L370.2 241.6L369.5 238.6L369.2 235.9L369.1 233.1L369.4 230.5L369.9 228.1L370.8 225.4L371.9 222.9L373.4 220.4L375.2 217.9L377.3 215.4L379.9 212.9L382.8 210.4L389.1 205.7L397.2 200.6L407.5 195L418.9 189.4L432.5 183.3L448.9 176.3ZM579.8 196.9L609.5 185.4L643.4 172.4L591.6 192.3L560.8 204.5L539.1 213.7L530.5 217.7L523.1 221.3L516.2 225.1L510.6 228.6L506.1 232L502.3 235.4L499.5 238.8L497.5 242.2L496.3 245.7L495.9 249.2L496.1 252L496.7 254.9L497.8 258.2L499.3 261.6L501.3 265.1L503.8 268.9L510.1 277.1L519.4 287.6L532 300.7L549.7 318.3L578.2 346.1L577.2 347.3L549.2 320L531.8 302.6L519 289.5L509.9 279.3L502.8 270.4L500.1 266.4L497.9 262.6L496.3 259.2L495.1 255.8L494.4 252.6L494.3 249.6L494.6 246.7L495.4 243.9L496.8 241L498.7 238.3L501.3 235.3L504.3 232.7L507.9 230L512.3 227L517.2 224.2L522.9 221.2L537 214.5L554.8 206.9Z"/>
<path fill="#16fff3" stroke="#16fff3" d="M505.7 152.6L590.3 120.1L590.4 121L493.8 158.3L466.1 169.3L444 178.4L427.9 185.3L414.3 191.6L403 197.4L394 202.5L389.1 205.7L385.1 208.6L381.8 211.2L378.6 214.1L375.9 217.1L373.7 219.9L371.9 222.9L370.6 225.8L369.7 228.8L369.2 231.8L369.1 235L369.4 238.2L370.2 241.6L371.4 245.4L373 249.2L375 253L373.1 249.3L371.5 246L370.3 242.8L369.4 239.8L368.9 236.9L368.6 234.1L368.7 231.4L369 228.6L369.7 226L370.8 223.2L372.1 220.7L373.8 218.2L375.9 215.6L378.3 213.1L384 208.2L391.2 203.1L399.8 198L410.5 192.4L423 186.5L437.6 180L456 172.3ZM611.7 184.6L644 172.2L594.6 191.2L564.7 203L543.3 212L527.4 219.4L520.8 222.9L514.9 226.3L510.3 229.4L506.4 232.5L503.2 235.6L500.6 238.9L498.9 242.2L497.9 245.4L497.5 248.5L497.7 251.4L498.3 254.5L499.5 258L501.3 261.7L503.5 265.5L506.4 269.7L509.8 274.1L518.8 284.7L531.6 298.1L549.7 316.2L579.2 344.9L578.2 346.1L549.2 317.8L531.3 300L518.7 286.8L509.5 276.4L505.7 271.5L502.7 267.3L500.2 263.2L498.2 259.3L496.9 255.8L496.1 252.5L495.9 249.2L496.2 246.1L497.1 243.1L498.6 240.2L500.8 237.1L503.5 234.2L506.9 231.3L511 228.4L515.8 225.3L521.4 222.2L534.7 215.7L552.3 208L576.2 198.4Z"/>
<path fill="#1fffea" stroke="#1fffea" d="M524.7 144.2L590.1 119.1L590.3 120.1L494.6 157L466.4 168.1L444.3 177.2L427.8 184.3L414.1 190.6L402.9 196.3L393.5 201.7L388.8 204.7L384.8 207.6L381.3 210.4L378.1 213.3L375.5 216.1L373.3 219L371.4 222L370.1 224.8L369.2 227.9L368.7 230.9L368.6 234.1L368.9 237.3L369.7 240.7L370.8 244.3L372.4 248L374.4 251.9L372.4 248.2L370.9 244.8L369.6 241.4L368.8 238.3L368.3 235.1L368.1 232.3L368.3 229.4L368.8 226.6L369.7 223.9L370.9 221.2L372.5 218.5L374.4 215.9L376.8 213.3L379.4 210.7L382.7 207.9L386.1 205.4L393.9 200.3L403.6 194.8L415.1 189.1L429.2 182.6L445.9 175.5L465.7 167.4ZM582.3 196L612 184.5L644.7 172L593.5 191.7L563.1 203.7L541.4 212.9L533.2 216.7L525.9 220.4L519.4 224L513.8 227.6L509.3 230.8L505.6 234.2L502.8 237.5L500.8 240.9L499.6 244.5L499.2 248L499.3 251L499.9 253.8L500.9 256.8L502.4 260.1L504.4 263.7L506.8 267.5L513.1 275.7L522.1 285.9L534.8 299.1L552.2 316.5L580.2 343.8L579.2 344.9L551.7 318.1L534.5 301L522 288.1L512.9 277.9L509.1 273.4L505.8 269L503.2 265L501.1 261.4L499.5 257.9L498.3 254.5L497.7 251.4L497.5 248.5L497.8 245.7L498.7 242.7L500.1 239.8L502 237.1L504.4 234.3L507.4 231.7L511 228.9L515.6 225.9L520.3 223.1L526.1 220L539.8 213.5L557.7 205.9Z"/>
<path fill="#29ffe1" stroke="#29ffe1" d="M566.4 127.1L589.9 118.1L590.1 119.1L492.3 156.8L463.4 168.3L441.5 177.3L425.1 184.4L411.4 190.9L400.3 196.6L391.1 202L386.7 205L383 207.7L379.8 210.3L376.9 213.1L374.4 215.9L372.4 218.7L370.7 221.5L369.5 224.3L368.7 227.2L368.2 230.1L368.1 233.2L368.4 236.4L369.1 239.6L370.2 243L371.7 246.6L373.6 250.4L371.6 246.7L370 242.9L368.8 239.4L368 236.1L367.7 232.9L367.7 229.9L368.1 226.9L368.8 224L370 221.1L371.6 218.3L373.6 215.5L376.1 212.6L378.9 209.9L382.5 206.9L390.4 201.3L399.7 195.8L411.2 189.9L424.6 183.6L441.3 176.3L461.7 167.9L487 157.9ZM616.4 182.8L645.3 171.8L597 190.4L567.6 202L546.1 211L530.7 218.2L524 221.7L518.1 225.2L513.4 228.4L509.5 231.5L506.4 234.6L503.9 237.7L502.2 240.9L501.2 244.1L500.8 246.9L500.9 249.9L501.5 253.2L502.7 256.6L504.4 260.2L506.6 264.1L509.4 268.3L512.8 272.7L521.8 283.3L534.3 296.5L552.2 314.3L581.2 342.6L580.2 343.8L551.7 316L534 298.4L521.4 285.2L512.3 274.7L508.5 269.8L505.6 265.6L503.1 261.5L501.3 257.7L500 254.1L499.3 250.7L499.2 247.6L499.6 244.6L500.6 241.5L502.1 238.6L504.5 235.4L507.3 232.6L510.8 229.7L514.9 226.8L519.8 223.7L525.4 220.6L539 214L556.8 206.4L580.8 196.7Z"/>
<path fill="#32ffd7" stroke="#32ffd7" d="M500.5 151.6L589.8 117.2L589.9 118.1L493.2 155.5L465.1 166.6L443.5 175.4L427.4 182.4L413.7 188.6L402.7 194.2L393.1 199.6L388.5 202.6L384.3 205.5L381 208.1L377.7 211L375.1 213.7L372.7 216.7L370.8 219.7L369.4 222.5L368.3 225.6L367.8 228.5L367.6 231.5L367.8 234.8L368.5 238.2L369.5 241.5L371 245.3L372.9 249.1L371.1 245.7L369.7 242.4L368.6 239.4L367.8 236.4L367.3 233.5L367.1 230.8L367.3 228.1L367.7 225.4L368.5 222.7L369.6 220.2L370.9 217.7L372.7 215.1L374.7 212.7L377.3 210.1L383 205.2L389.9 200.5L398.5 195.3L408.6 190L420.8 184.3L435.4 177.8L452.7 170.6ZM587 194.3L616.9 182.7L645.9 171.6L596.5 190.7L566.6 202.5L545.3 211.5L537 215.3L529.6 219L523 222.6L517.3 226.2L512.8 229.5L509.2 232.8L506.3 236.2L504.3 239.5L503 243L502.5 246.5L502.6 249.3L503.1 252.3L504.1 255.4L505.5 258.7L507.3 262L509.7 265.8L515.9 274L524.9 284.3L537.3 297.2L554.7 314.6L582.2 341.4L581.2 342.6L554.4 316.5L537.4 299.6L525 286.7L515.9 276.5L512.2 271.9L508.9 267.5L506.3 263.5L504.2 260L502.7 256.6L501.6 253.3L501 250.2L500.8 247.2L501.2 244.1L502 241.3L503.5 238.5L505.5 235.6L508.1 232.8L511.3 230L515 227.3L519.3 224.4L529.8 218.7L543.6 212.1L561.6 204.4Z"/>
<path fill="#3bffce" stroke="#3bffce" d="M519.2 143.3L589.6 116.2L589.8 117.2L494.1 154.1L465.4 165.4L443.3 174.5L426.8 181.6L413.2 187.8L401.8 193.5L392.5 198.8L384 204.5L380.3 207.4L377.1 210.3L374.3 213.2L372 216L370.3 218.7L368.9 221.6L367.9 224.5L367.3 227.5L367.1 230.6L367.3 233.8L368 237.3L369 240.6L370.5 244.3L372.3 248.1L370.6 244.7L369.1 241.4L368 238.1L367.2 235.1L366.8 232L366.7 229.2L366.9 226.3L367.5 223.6L368.3 221L369.6 218.3L371.2 215.6L373.2 213.1L375.4 210.6L378.3 207.9L384.8 202.7L392.3 197.8L402 192.4L413.4 186.7L427 180.4L443.1 173.5L462.4 165.6ZM576.6 198.5L607.2 186.5L643.3 172.6L646.5 171.4L601.3 188.9L572.7 200.1L552 208.7L536.3 215.9L529.4 219.4L523.8 222.6L518.9 225.7L514.9 228.6L511.4 231.7L508.7 234.6L506.6 237.6L505.2 240.4L504.4 243.3L504.1 246.5L504.3 249.7L505.2 253.3L506.7 257.1L508.7 261L511.4 265.3L514.6 269.7L518.5 274.6L523.3 280.1L535.9 293.6L554 311.7L583.2 340.2L582.2 341.4L556.1 316L539.4 299.4L527.2 286.7L518.3 276.8L511.4 268.1L508.6 264.2L506.5 260.6L504.7 257L503.5 253.8L502.8 250.7L502.5 247.9L502.6 245.1L503.2 242.2L504.4 239.2L506 236.5L508.2 233.8L510.8 231.3L513.9 228.7L517.7 225.9L522.2 223.1L526.9 220.5L539.4 214.2L555.4 207.1Z"/>
<path fill="#44ffc5" stroke="#44ffc5" d="M559.8 126.6L589.4 115.2L589.6 116.2L492.9 153.5L464.3 164.8L442.7 173.7L426.2 180.8L412.6 187L401.3 192.7L392.2 197.8L383.8 203.4L380 206.4L376.8 209.2L373.9 212.2L371.7 214.9L369.9 217.7L368.5 220.6L367.5 223.6L366.9 226.6L366.7 229.6L366.8 232.7L367.4 236L368.4 239.5L369.8 243L371.6 246.7L369.7 243L368.3 239.4L367.2 236.2L366.5 232.9L366.2 229.7L366.3 226.6L366.7 223.8L367.6 220.8L368.9 217.9L370.6 215L372.7 212.2L375 209.6L377.9 206.9L381 204.3L384.7 201.6L389.1 198.6L398.4 193.2L409.6 187.4L423.2 181L439.5 174L459.3 165.8L483.9 156ZM594.4 191.5L624.9 179.7L647.2 171.3L598.9 189.8L569.5 201.5L548.6 210.4L540.3 214.2L533.3 217.7L526.7 221.3L521.3 224.6L516.7 227.9L513 231.2L510 234.5L507.8 237.9L506.5 241L505.8 244.6L505.8 247.3L506.3 250.5L507.1 253.5L508.4 256.6L510.1 260L512.4 263.8L515.2 267.7L518.6 272.1L527.5 282.4L539.8 295.3L556.9 312.4L584.2 339L583.2 340.2L556.7 314.3L539.7 297.5L527.5 284.8L518.5 274.6L514.8 270L511.8 265.8L509.2 261.9L507.2 258.2L505.7 254.8L504.7 251.5L504.2 248.4L504.1 245.3L504.7 242.3L505.6 239.5L507.1 236.8L509.2 234L512 231.1L515.1 228.4L518.9 225.7L523.8 222.6L534.9 216.6L549.4 209.8L568.3 201.9Z"/>
<path fill="#4dffbc" stroke="#4dffbc" d="M498.8 149.1L589.3 114.3L589.4 115.2L492.7 152.6L464.1 163.9L442.5 172.7L426 179.8L412.9 185.8L401.6 191.5L392.2 196.7L383.7 202.3L380 205.1L376.7 208L374 210.7L371.6 213.6L369.7 216.4L368.1 219.4L367.1 222.3L366.5 225.2L366.2 228.3L366.3 231.4L366.9 234.8L367.8 238.1L369.1 241.6L370.9 245.4L369.3 242L368 239L367 236.1L366.3 233.2L365.8 230.3L365.7 227.7L365.9 225L366.4 222.4L367.2 219.8L368.2 217.4L369.7 214.9L371.3 212.5L373.4 210.1L375.8 207.5L381.6 202.6L388.6 197.8L397.3 192.7L407.1 187.5L419.5 181.7L433.8 175.3L451.3 168ZM583 196.1L613.3 184.3L647.8 171.1L599 189.9L569.6 201.6L548.3 210.7L540.1 214.5L533.1 218L526.6 221.7L521.4 225.1L516.9 228.5L513.3 231.9L510.7 235.3L508.8 238.7L507.8 242.1L507.4 245.7L507.7 248.4L508.3 251.2L509.4 254.5L510.8 257.6L512.6 260.9L515 264.6L521.1 272.6L529.9 282.6L542.3 295.6L558.9 312.2L585.2 337.8L584.2 339L558.7 314.1L542.2 297.7L530 285.1L521.1 275.1L514.2 266.4L511.6 262.4L509.5 258.9L507.9 255.5L506.7 252.3L506 249.2L505.8 246.3L506 243.3L506.7 240.4L508 237.5L509.7 234.9L512 232.1L514.8 229.5L518.2 226.8L522.1 224.1L526.7 221.3L531.9 218.4L544.7 212.2L561 205Z"/>
<path fill="#57ffb3" stroke="#57ffb3" d="M519.5 140.1L589.1 113.3L589.3 114.3L492.5 151.6L464.4 162.7L442 171.9L426.2 178.6L412.6 184.9L401.6 190.4L391.9 195.8L386.9 198.9L382.8 201.8L379.2 204.6L376 207.3L373.3 210.2L371 213L369.1 215.8L367.7 218.6L366.7 221.4L366 224.5L365.7 227.4L365.9 230.7L366.4 233.8L367.3 237.1L368.6 240.6L370.4 244.4L368.6 240.8L367.3 237.6L366.4 234.7L365.7 231.6L365.3 228.7L365.3 225.8L365.6 223L366.2 220.4L367.2 217.7L368.5 215.2L370.2 212.6L372.1 210.1L374.5 207.5L377.4 204.8L383.9 199.8L392 194.6L401.4 189.4L412.8 183.7L426.5 177.5L443 170.4L462.3 162.5ZM606.7 186.9L642.7 173.1L648.5 170.9L602 188.8L573 200.3L552 209.2L537 216.3L530.8 219.7L525.3 223L520.7 226.3L516.8 229.5L514 232.6L511.7 235.8L510.1 239.1L509.3 242.5L509.1 245.4L509.4 248.3L510.1 251.4L511.3 254.6L513 258L515.2 261.8L517.9 265.7L521.2 270.1L529.8 280.2L542.1 293.1L559.2 310.3L586.3 336.6L585.2 337.8L558.9 312.2L542 295.3L529.8 282.5L520.9 272.4L517.3 267.8L514.3 263.6L511.8 259.5L510 255.9L508.6 252.4L507.8 249.1L507.4 246.2L507.6 243.1L508.3 240.2L509.4 237.4L511.3 234.4L513.6 231.6L516.6 228.8L520.2 226L524.5 223L529.6 220L541.5 213.8L556.9 206.9L577.3 198.4Z"/>
<path fill="#60ffa9" stroke="#60ffa9" d="M570.4 119.5L588.9 112.3L589.1 113.3L491.3 151L462.3 162.5L440.4 171.5L423.6 178.7L410.6 184.8L399 190.6L389.6 196L381.4 201.6L378.1 204.2L375 207L372.5 209.7L370.2 212.5L368.5 215.2L367.1 218.1L366.1 220.8L365.5 223.7L365.3 226.8L365.4 229.7L365.9 232.8L366.8 236.1L368.1 239.5L369.7 243.1L367.9 239.3L366.6 235.8L365.6 232.5L365 229.4L364.8 226.2L365 223.3L365.6 220.3L366.5 217.5L367.9 214.6L369.5 212L371.7 209.1L374.2 206.4L377.3 203.7L380.8 200.8L384.8 198L389.3 195.1L399.2 189.5L410.8 183.6L424.7 177.2L442 169.8L462.2 161.5L487.5 151.5ZM591.8 192.8L622.5 180.8L649.1 170.7L602.1 188.8L573.1 200.3L552.2 209.3L543.9 213.1L537.1 216.6L530.7 220.1L525.4 223.5L520.8 226.9L517.3 230.1L514.5 233.4L512.6 236.6L511.3 240.1L510.8 243.6L510.9 246.3L511.4 249.4L512.3 252.4L513.7 255.5L515.6 259L517.8 262.6L523.8 270.7L532.5 280.7L544.6 293.4L561.3 310L587.3 335.4L586.3 336.6L560.7 311.7L544.3 295.3L532.3 282.9L523.5 272.9L519.8 268.3L516.8 264.2L514.4 260.4L512.4 256.8L510.8 253.4L509.8 250.2L509.2 247L509.1 244.2L509.5 241.3L510.5 238.2L511.9 235.4L513.8 232.8L516.2 230.2L519.2 227.4L523 224.6L527 221.9L537 216.3L550.5 209.9L568.1 202.3Z"/>
<path fill="#69ffa0" stroke="#69ffa0" d="M500.7 145.3L588.8 111.4L588.9 112.3L492.2 149.7L463.6 161L442 169.8L425.1 177L411.9 183.1L400.5 188.7L391.5 193.8L382.6 199.5L378.8 202.4L375.8 205L373 207.7L370.5 210.6L368.6 213.3L367 216.3L365.9 219L365.2 222L364.8 225.1L364.9 228.1L365.3 231.3L366.2 234.7L367.4 238.1L369.1 241.8L367.6 238.6L366.3 235.4L365.4 232.5L364.8 229.6L364.4 226.8L364.4 224.1L364.7 221.5L365.3 218.9L366.1 216.5L367.3 214L368.8 211.5L370.6 209.1L375.1 204.4L381.2 199.4L388.3 194.6L397 189.5L407.7 184L420.1 178.2L434.5 171.9L452.1 164.6ZM584.3 195.8L615.2 183.7L649.8 170.5L602.1 188.9L573.3 200.4L552.4 209.4L544.6 213L537.6 216.6L531.5 220.1L526.2 223.5L521.8 226.9L518.3 230.3L515.7 233.6L513.9 237L512.8 240.4L512.5 244.2L512.8 247.1L513.4 249.8L514.4 252.8L515.8 255.9L517.7 259.2L519.9 262.7L526 270.7L534.7 280.7L546.6 293.1L563 309.5L588.3 334.2L587.3 335.4L562.7 311.5L546.5 295.3L534.6 282.9L525.9 273.2L519.3 264.7L516.8 261L514.7 257.5L513 254.1L511.8 250.9L511.1 247.8L510.8 245L511 241.9L511.6 239.1L512.7 236.5L514.3 233.8L516.4 231.2L519.1 228.4L522.3 225.7L526.2 223L530.7 220.1L535.5 217.4L547.7 211.3L563.5 204.4Z"/>
<path fill="#72ff97" stroke="#72ff97" d="M526.6 134.3L588.6 110.4L588.8 111.4L492 148.7L463.4 160L441.4 169L425.7 175.7L412.1 181.9L400.5 187.6L391 192.9L382.1 198.7L378.6 201.4L375.1 204.4L372.3 207.1L370.1 209.7L368.2 212.5L366.6 215.3L365.5 218.1L364.8 221L364.4 224L364.5 227.1L364.9 230.3L365.7 233.6L367 237.2L368.6 240.9L367 237.3L365.7 234.2L364.8 231.1L364.2 227.9L364 225.1L364.1 222.1L364.5 219.3L365.3 216.7L366.5 213.9L367.9 211.4L369.5 209L371.7 206.4L374.2 203.9L377.1 201.3L384.2 196.1L392.6 190.9L402.2 185.7L413.8 180L428.4 173.5L445.2 166.4L466.2 157.9ZM605.5 187.6L640.8 174L650.4 170.4L605.2 187.8L576.7 199.1L556.1 207.9L548.2 211.5L541.1 215.1L534.9 218.5L529.4 221.9L524.8 225.3L521.4 228.3L518.6 231.4L516.3 234.8L514.9 238.1L514.3 241.3L514.2 244L514.5 247L515.4 250.2L516.6 253.4L518.3 256.8L520.4 260.3L523.2 264.3L526.3 268.4L534.9 278.5L547 291.2L563.6 307.8L589.4 333L588.3 334.2L563 309.5L546.6 293.1L534.7 280.7L526 270.7L522.4 266.1L519.5 262.1L517 258.1L515.2 254.5L513.9 251.3L512.9 248L512.5 244.8L512.6 241.8L513.2 238.9L514.3 236.1L515.9 233.3L518.2 230.5L521.1 227.6L524.3 224.9L528.2 222.1L533.2 219.1L544.6 213L559 206.4L578.7 198.2Z"/>
<path fill="#7cff8d" stroke="#7cff8d" d="M488.8 147.9L588.5 109.5L588.6 110.4L491.9 147.7L463.3 159L441.7 167.8L425.6 174.7L411.9 180.9L400.8 186.4L391 191.8L382 197.6L378.3 200.3L374.8 203.3L372.1 206.1L369.7 208.8L367.7 211.6L366.3 214.3L365.1 217L364.4 220L364 223.1L364 226.1L364.4 229.1L365.2 232.4L366.3 235.6L367.9 239.3L366.4 236.2L365.3 233.2L364.4 230.2L363.8 227.4L363.6 224.8L363.6 222.2L363.8 219.7L364.4 217.2L365.2 214.9L366.3 212.4L367.9 209.8L369.6 207.5L373.9 202.9L379.4 198.3L386.1 193.7L394.4 188.8L404.1 183.6L415.5 178.2L429.1 172.1L445 165.4ZM594.9 191.8L626.3 179.6L651.1 170.2L605.8 187.6L577.3 199L556.8 207.8L548.9 211.4L541.9 215L535.7 218.5L530.3 221.9L525.7 225.3L522.3 228.5L519.5 231.9L517.6 235.2L516.4 238.4L515.9 241.9L516 244.6L516.5 247.7L517.4 250.7L518.8 253.8L520.5 257.1L522.7 260.6L528.5 268.4L536.9 278.2L548.8 290.7L565.2 307.1L590.4 331.8L589.4 333L564.8 309L548.9 293.1L537 280.7L528.4 271L524.7 266.4L521.7 262.2L519.3 258.4L517.3 254.9L515.9 251.7L514.9 248.5L514.3 245.3L514.2 242.5L514.6 239.6L515.4 236.9L516.8 234.1L518.6 231.3L521 228.6L524.1 225.8L527.8 223L531.9 220.3L536.6 217.5L542 214.6L555.1 208.3L572.3 200.9Z"/>
<path fill="#85ff84" stroke="#85ff84" d="M507.3 139.7L588.3 108.5L588.5 109.5L491.7 146.8L463.1 158.1L441.5 166.9L425 173.9L411.7 180L400.3 185.6L390.9 190.8L382 196.5L378.1 199.3L374.6 202.3L371.8 205L369.6 207.5L367.6 210.3L365.9 213.2L364.8 216L364 218.8L363.6 221.8L363.6 224.9L363.9 228L364.7 231.4L365.8 234.7L367.4 238.4L365.9 235.1L364.7 231.9L363.9 228.9L363.3 226.1L363.1 223.3L363.2 220.7L363.5 218L364.2 215.4L365.2 213.1L366.4 210.6L368.2 207.9L370.1 205.5L375.1 200.6L381.2 195.8L388.6 191L397.8 185.8L408.2 180.6L421.6 174.4L436.5 167.9L454.9 160.3ZM588.9 194.3L620.2 182L651.7 170L606.5 187.5L578 198.8L557.5 207.6L549.7 211.3L542.6 214.9L536.5 218.4L531.1 221.9L526.9 225.2L523.4 228.6L520.8 231.9L519 235.3L517.9 238.7L517.6 242.3L517.8 245L518.4 247.8L519.4 250.8L520.8 253.9L522.6 257.2L524.8 260.7L530.7 268.5L539.2 278.2L550.8 290.4L566.9 306.6L591.5 330.6L590.4 331.8L566.4 308.3L550.7 292.6L539.2 280.7L530.6 271L524 262.5L521.5 258.8L519.5 255.2L517.9 251.8L516.8 248.9L516.1 245.8L515.9 242.9L516 240.2L516.7 237.3L517.9 234.5L519.5 231.9L521.7 229.1L524.3 226.5L527.6 223.9L531.5 221.1L536.1 218.2L541 215.5L552.8 209.6L568.2 202.8Z"/>
<path fill="#8eff7b" stroke="#8eff7b" d="M547 123.4L588.2 107.6L588.3 108.5L491.6 145.8L463 157.1L441 166.1L425.2 172.8L411.4 179L399.8 184.8L390.4 189.9L381.5 195.6L377.6 198.5L374.4 201.2L371.5 204L369.1 206.7L367.2 209.4L365.5 212.3L364.4 215L363.5 218L363.1 221L363.1 224L363.5 227.1L364.3 230.4L365.4 233.8L366.9 237.4L365.4 233.9L364.2 230.6L363.3 227.6L362.8 224.5L362.7 221.5L362.9 218.6L363.5 215.7L364.4 213L365.6 210.4L367.3 207.7L369.4 205L371.8 202.4L374.8 199.6L377.9 197.1L385.5 191.8L394.6 186.4L405.5 180.8L418.7 174.7L434.7 167.7L453.4 159.9L476.5 150.7ZM612.7 185.1L652.4 169.9L608.4 186.9L580.9 197.8L560.8 206.4L546.3 213.3L540.2 216.6L534.8 220L530.5 223.1L526.9 226.2L524.1 229.2L521.7 232.6L520.3 235.6L519.5 239.1L519.3 241.7L519.5 244.6L520.2 247.6L521.4 250.9L523 254.3L525 257.8L527.7 261.8L530.8 265.9L539.2 275.7L550.9 288.2L567.3 304.7L592.6 329.3L591.5 330.6L566.7 306.4L550.6 290.2L538.7 277.7L530.3 267.9L526.9 263.6L524 259.4L521.7 255.6L519.9 251.9L518.7 248.7L517.9 245.4L517.6 242.3L517.8 239.5L518.5 236.5L519.8 233.6L521.6 230.7L523.9 228L526.9 225.2L530.4 222.5L534.4 219.7L539.1 216.9L550.6 210.9L565.2 204.2L585.2 195.9Z"/>
<path fill="#98ff72" stroke="#98ff72" d="M495.4 142.3L588 106.6L588.2 107.6L490.9 145.1L462.3 156.3L440.7 165.1L424.7 172L411 178.2L399.9 183.6L390.2 188.9L381.3 194.6L377.4 197.5L374.2 200.1L371.3 202.9L368.9 205.6L366.9 208.3L365.2 211.2L364 214L363.2 216.8L362.8 219.8L362.7 222.7L363 226L363.7 229.1L364.8 232.4L366.2 235.9L364.8 232.6L363.7 229.7L363 227L362.5 224.1L362.3 221.5L362.3 218.9L362.7 216.4L363.4 213.8L364.3 211.5L365.5 209L366.9 206.8L368.8 204.4L373.4 199.6L379.5 194.7L387 189.8L395.4 184.9L405.7 179.7L417.7 174L431.5 168L449 160.7ZM602.4 189.2L635.8 176.2L653.1 169.7L609 186.7L581.6 197.7L561.5 206.3L553.5 210L546.9 213.3L540.7 216.8L535.6 220L531.3 223.2L527.6 226.6L524.9 229.8L522.9 232.9L521.6 236.3L521 239.8L521.1 242.5L521.5 245.3L522.4 248.3L523.6 251.5L525.4 254.9L527.5 258.4L533.2 266.2L541.6 276L553.2 288.2L569.1 304.2L593.6 328.1L592.6 329.3L568.5 305.9L552.8 290.2L541.4 278.2L532.9 268.5L529.4 264.1L526.4 259.9L524.1 256.2L522.1 252.6L520.8 249.4L519.8 246.1L519.4 243.2L519.3 240.3L519.8 237.5L520.7 234.7L522.1 231.9L524.1 229.1L526.6 226.5L529.7 223.7L533.5 220.9L537.7 218.2L548 212.4L561.3 206.1L578.7 198.7Z"/>
<path fill="#a1ff68" stroke="#a1ff68" d="M522.3 130.8L587.9 105.6L588 106.6L491.3 143.9L463.1 155L440.6 164.2L424.1 171.2L410.9 177.2L399.8 182.6L390.1 187.9L381.1 193.6L377.2 196.4L374.1 199L371.1 201.8L368.8 204.4L366.6 207.2L364.9 210.1L363.6 213L362.8 215.9L362.3 218.9L362.3 221.9L362.6 225.1L363.3 228.2L364.3 231.4L365.8 235L364.3 231.5L363.2 228.4L362.4 225.4L362 222.5L361.9 219.6L362.1 216.8L362.6 214.2L363.4 211.6L364.5 209.2L366 206.6L367.8 204.2L370.1 201.6L375.4 196.7L382.5 191.5L390.5 186.6L400.6 181.1L412.2 175.5L426.4 169.2L442.6 162.3L463.5 153.8ZM596.7 191.5L629 179L653.8 169.6L609.7 186.6L582.3 197.5L562.2 206.2L554.3 209.9L547.7 213.3L541.5 216.8L536.5 220.1L532.3 223.3L528.9 226.5L526.3 229.7L524.3 233.1L523.2 236.6L522.7 240L522.9 242.7L523.4 245.5L524.3 248.5L525.7 251.6L527.4 254.8L529.5 258.2L535.2 266L543.7 275.7L555 287.7L570.7 303.4L594.7 326.9L593.6 328.1L570.3 305.4L554.9 289.9L543.4 278L534.9 268.3L528.6 260L526.2 256.2L524.2 252.6L522.7 249.3L521.7 246.3L521.2 243.5L521 240.5L521.3 237.6L522.1 234.8L523.4 232.1L525.2 229.4L527.5 226.7L530.3 224.1L533.7 221.4L537.3 218.9L541.5 216.3L546.9 213.3L559 207.4L575.1 200.4Z"/>
<path fill="#aaff5f" stroke="#aaff5f" d="M487.2 143.5L587.7 104.7L587.9 105.6L491.1 142.9L463 154L440.9 163L424.7 169.9L410.9 176.1L399.3 181.8L389.8 187L380.8 192.6L377 195.4L373.7 198.2L370.9 200.8L368.2 203.7L366 206.6L364.5 209.2L363.3 212L362.4 214.8L362 217.7L361.9 220.6L362.1 223.8L362.8 227L363.9 230.5L365.3 233.9L364 230.9L363 228L362.2 225.3L361.7 222.5L361.5 219.8L361.5 217.2L361.9 214.8L362.5 212.3L363.4 209.8L364.6 207.5L366.1 205.2L367.9 202.8L372.3 198.1L377.8 193.7L384.5 189.1L392.6 184.3L402.2 179.3L413.9 173.7L427.9 167.5L443.8 160.8ZM635.3 176.7L654.5 169.4L613.4 185.3L586.9 195.8L567.5 204L553.1 210.8L547.1 214L541.9 217.1L537.4 220.1L533.6 223.1L530.6 226L528 229.2L526.2 232.3L525.1 235.3L524.6 237.9L524.5 240.9L524.9 244.1L525.9 247.4L527.3 250.8L529.2 254.4L531.6 258.2L534.6 262.4L538.3 267L542.8 272.2L554.5 284.8L570.6 301L595.8 325.7L594.7 326.9L569.9 302.7L553.8 286.5L542.3 274.2L534 264.4L530.7 260L527.9 255.7L525.8 251.9L524.3 248.5L523.3 245.2L522.8 241.9L522.8 238.8L523.3 235.8L524.4 232.9L526 230.1L528.2 227.3L530.9 224.5L534.4 221.6L538.5 218.7L543.2 215.8L548.6 212.8L561.7 206.4L579 198.9L602.1 189.6Z"/>
<path fill="#b4ff56" stroke="#b4ff56" d="M508.7 134.1L587.6 103.8L587.7 104.7L489.9 142.4L461.4 153.7L439.8 162.4L423.4 169.5L410.2 175.4L399.1 180.9L389.4 186.2L380.2 192L376.3 194.8L373.1 197.5L370.2 200.2L367.9 202.8L365.8 205.6L364.2 208.2L363 210.9L362.1 213.7L361.6 216.6L361.5 219.6L361.7 222.6L362.4 225.9L363.4 229.2L364.8 232.7L363.4 229.4L362.4 226.5L361.6 223.6L361.2 220.9L361.1 218.2L361.2 215.5L361.7 213L362.5 210.4L363.5 208L364.9 205.4L366.8 202.7L368.8 200.4L373.9 195.5L380.5 190.6L388 185.9L397.4 180.7L408.9 175L422 169L437.5 162.4L456 154.8ZM617 183.9L655.1 169.3L613.5 185.3L587 195.9L567.2 204.3L552.9 211.2L547 214.5L541.9 217.6L537.5 220.7L533.9 223.8L531 226.9L528.7 230.1L527.2 233.4L526.4 236.7L526.2 239.4L526.5 242.3L527.2 245.4L528.3 248.6L529.9 252L531.8 255.3L534.3 259L537.4 263.2L545.5 272.7L557 285L572.6 300.7L596.9 324.4L595.8 325.7L572.3 302.7L556.6 287L545.2 275L536.8 265.2L533.5 260.8L530.7 256.9L528.5 253.1L526.8 249.7L525.5 246.2L524.7 243.1L524.5 240.2L524.7 237.2L525.4 234.3L526.6 231.4L528.2 228.8L530.6 226L533.3 223.4L536.8 220.5L540.6 217.9L545.3 215L556.5 209.1L571.2 202.4L590.2 194.4Z"/>
<path fill="#bdff4c" stroke="#bdff4c" d="M566.5 110.8L587.5 102.8L587.6 103.8L489.8 141.4L461.3 152.7L438.8 161.9L422.4 168.9L408.5 175.2L397.2 180.8L387.4 186.2L378.8 191.8L372.3 197L369.4 199.7L367.2 202.2L365.2 205L363.7 207.6L362.5 210.4L361.6 213.1L361.2 215.9L361.1 218.9L361.3 221.8L361.9 224.9L362.9 228.2L364.3 231.7L362.8 228.1L361.8 224.9L361.1 221.8L360.7 218.7L360.7 215.8L361.1 212.8L361.8 210.2L363 207.4L364.5 204.6L366.4 201.9L368.7 199.2L371.5 196.5L377.9 191.3L386.6 185.6L396.1 180.3L408 174.4L422.3 167.9L439.5 160.5L459.2 152.5L485 142.3ZM609.5 186.9L647.4 172.2L655.8 169.1L614.2 185.2L587.2 196L567.5 204.5L560 208L553.3 211.4L547.4 214.7L542.3 217.9L538.1 221.1L534.6 224.3L531.9 227.5L530 230.5L528.7 233.7L528 237.1L528 239.6L528.3 242.5L529.1 245.5L530.3 248.6L531.9 251.8L534 255.3L539.4 262.9L547.5 272.5L558.8 284.5L574.5 300.2L598 323.2L596.9 324.4L573.8 301.9L558.4 286.5L547.3 274.7L539 265.2L535.6 260.8L532.9 256.9L530.5 253.1L528.8 249.8L527.5 246.6L526.6 243.4L526.2 240.4L526.3 237.5L526.8 234.5L527.9 231.8L529.4 229.1L531.3 226.5L533.9 223.8L536.8 221.3L540.7 218.5L544.8 215.7L554.9 210.2L568.3 203.9L585.9 196.4Z"/>
<path fill="#c6ff43" stroke="#c6ff43" d="M500 135.5L587.3 101.9L587.5 102.8L490.2 140.3L461.6 151.6L440 160.4L423.9 167.2L410.2 173.3L398.4 179.1L389 184.2L379.9 189.9L372.9 195.3L369.8 198.1L367.4 200.7L365.2 203.5L363.6 206.1L362.3 209L361.4 211.7L360.8 214.6L360.7 217.6L360.9 220.8L361.5 223.9L362.5 227.2L363.9 230.7L362.5 227.4L361.5 224.5L360.8 221.7L360.4 218.9L360.3 216.3L360.5 213.7L360.9 211.1L361.6 208.8L362.6 206.4L364.1 203.8L365.6 201.5L367.6 199.1L372.6 194.3L378.9 189.5L386.4 184.6L395.2 179.7L405.6 174.5L418.1 168.7L432.5 162.5L450.2 155.2ZM605.1 188.8L639.9 175.3L655.8 169.1L656.5 169L614.9 185.1L588.4 195.7L568.7 204.2L561.2 207.7L554.5 211.1L548.7 214.4L543.6 217.7L539.4 220.9L536 224.1L533.2 227.4L531.4 230.5L530.3 233.6L529.7 237.2L529.8 239.8L530.2 242.6L531 245.4L532.3 248.5L534 251.9L536 255.1L541.4 262.7L549.6 272.2L560.7 284L575.8 299.2L599.1 322L598 323.2L575.4 301.2L560.5 286.2L549.3 274.5L541.3 265.2L535 256.9L532.7 253.2L530.9 249.9L529.5 246.6L528.5 243.4L528 240.6L528 237.7L528.3 234.9L529.2 232.1L530.5 229.5L532.4 226.8L534.6 224.3L537.4 221.7L540.7 219.1L544.8 216.3L554.2 210.9L566.9 204.7L583.3 197.6Z"/>
<path fill="#cfff3a" stroke="#cfff3a" d="M541.7 118.4L587.2 100.9L587.3 101.9L490 139.4L461.9 150.4L439.4 159.6L422.9 166.6L409.7 172.6L398.6 178L388.8 183.2L379.9 188.8L375.9 191.6L372.6 194.3L369.6 197L367.2 199.6L365 202.4L363.3 205.1L362 207.9L361 210.6L360.5 213.5L360.3 216.5L360.5 219.5L361 222.7L362 226L363.3 229.4L362 226.1L360.9 222.9L360.3 219.8L359.9 216.9L360 213.9L360.4 211.1L361 208.5L362.1 205.8L363.5 203.2L365.4 200.5L367.4 198.1L370 195.5L376 190.4L383.9 185.1L392.5 180.1L403.3 174.6L416.4 168.5L431.9 161.7L450.5 154L473 145ZM602.4 190L636.2 176.8L656.5 169L657.2 168.9L615.6 185L589.1 195.6L570 203.8L562.5 207.4L555.8 210.8L549.9 214.2L544.9 217.5L540.7 220.7L537.6 223.7L534.9 227L533 230.3L531.9 233.6L531.4 237L531.6 239.6L532.1 242.5L532.9 245.2L534.2 248.3L535.8 251.4L537.9 254.9L543.3 262.2L551.4 271.7L562.5 283.5L577.7 298.7L600.2 320.7L599.1 322L577 300.4L562.3 285.7L551.4 274.2L543.3 265L537 256.7L534.6 253L532.8 249.6L531.4 246.5L530.4 243.5L529.9 240.6L529.7 237.8L530 235.1L530.6 232.5L531.9 229.7L533.5 227L535.6 224.5L538.3 221.9L541.6 219.1L545.4 216.5L554.5 211.1L566.7 205.1L581.9 198.4Z"/>
<path fill="#d9ff31" stroke="#d9ff31" d="M494.1 135.8L587.1 100L587.2 100.9L490.4 138.2L461.8 149.5L439.7 158.5L423.6 165.3L409.5 171.6L398.1 177.2L388.6 182.3L379.4 188L375.5 190.8L372.2 193.5L369.4 196.1L366.8 198.8L364.7 201.4L363 204.1L361.6 207L360.7 209.7L360.1 212.6L359.9 215.6L360.1 218.5L360.7 221.8L361.6 225.2L362.9 228.5L361.7 225.5L360.7 222.6L360 219.8L359.7 217.2L359.5 214.6L359.7 212L360.2 209.5L360.9 207L361.9 204.7L363.3 202.2L364.8 199.9L366.8 197.5L371.5 192.9L377.6 188.1L384.6 183.6L393 178.8L403.5 173.5L415.5 167.9L429.2 161.9L446.4 154.7ZM646.9 172.9L657.2 168.9L657.9 168.8L619.9 183.4L594.3 193.6L575.9 201.4L561.8 208.1L555.9 211.2L550.8 214.2L546.3 217.2L542.7 219.9L539.6 222.9L537.2 225.7L535.3 228.8L534 231.7L533.4 234.5L533.2 237.5L533.6 240.7L534.4 243.8L535.7 247.1L537.4 250.6L539.8 254.4L542.7 258.6L546.3 263.2L550.6 268.2L561.8 280.3L577.3 296L601.4 319.5L600.2 320.7L576.7 297.7L561.3 282.3L550.1 270.2L542.1 260.6L538.8 256.2L536.3 252.2L534.2 248.3L532.8 244.8L531.9 241.5L531.5 238.3L531.6 235.3L532.2 232.4L533.5 229.4L535.2 226.6L537.6 223.7L540.3 221.1L543.8 218.3L548.2 215.3L553.1 212.3L558.6 209.3L572 202.9L589.1 195.6L612.6 186.1Z"/>
<path fill="#e2ff28" stroke="#e2ff28" d="M529.4 121.2L586.9 99.1L587.1 100L490.3 137.3L461.7 148.6L439.1 157.7L422.6 164.7L409.4 170.7L397.7 176.3L388.2 181.5L379 187.2L375.1 190L371.9 192.6L368.8 195.4L366.4 198L364.2 200.8L362.6 203.3L361.3 206L360.3 208.9L359.7 211.7L359.5 214.6L359.7 217.6L360.3 220.9L361.3 224.3L362.5 227.5L361.2 224.2L360.2 221.2L359.5 218.2L359.2 215.3L359.2 212.6L359.5 209.8L360.2 207.2L361.2 204.5L362.5 202L364.2 199.3L366.2 196.9L368.5 194.5L374.2 189.5L381.6 184.4L390.2 179.3L400.9 173.7L413 168L427.8 161.5L445.2 154.2L466.4 145.7ZM629.4 179.7L657.9 168.8L658.6 168.7L620 183.6L594.5 193.7L575.6 201.8L561.6 208.5L555.6 211.8L550.8 214.8L546.7 217.6L543 220.7L540 223.8L537.8 226.8L536.2 229.9L535.3 232.9L535 235.6L535.1 238.4L535.6 241.2L536.6 244.5L537.9 247.6L539.9 251.2L542.3 254.9L545.1 258.9L553.1 268.5L564.1 280.3L579.2 295.5L602.5 318.3L601.4 319.5L578.8 297.5L563.9 282.5L552.8 270.7L544.9 261.4L541.6 257L538.9 253L536.8 249.4L535.2 246L534 242.6L533.4 239.5L533.2 236.5L533.5 233.7L534.3 230.8L535.6 228.1L537.4 225.4L539.9 222.5L542.7 219.9L546.3 217.2L550.4 214.5L555.2 211.6L566.7 205.7L581.7 198.9L601.7 190.6Z"/>
<path fill="#ebff1e" stroke="#ebff1e" d="M490.1 135.4L586.8 98.1L586.9 99.1L490.2 136.4L461.5 147.6L439.4 156.6L422.9 163.6L408.9 169.9L397.8 175.3L388 180.5L379 186.1L375.1 188.9L371.8 191.5L368.7 194.3L366.2 196.9L364.1 199.5L362.3 202.3L361 204.9L360 207.8L359.4 210.6L359.2 213.6L359.3 216.6L359.8 219.7L360.8 223L362 226.3L360.8 223.2L359.9 220.5L359.3 217.7L358.9 214.9L358.8 212.3L359 209.9L359.5 207.4L360.3 205.1L361.3 202.7L362.5 200.5L364 198.3L366 195.9L370.7 191.3L376.7 186.6L383.7 182L392 177.2L402.5 171.9L414.3 166.4L428.1 160.3L444.7 153.4ZM623.1 182.4L658.6 168.7L659.4 168.5L620.7 183.5L595.2 193.7L576.3 201.8L562.4 208.5L556.4 211.8L551.7 214.8L547.6 217.8L544 220.9L541.3 223.8L539.3 226.8L537.8 229.9L536.9 233.2L536.7 235.9L536.9 238.7L537.6 241.6L538.7 244.7L540.2 248L542 251.2L544.5 255L547.4 258.9L555.2 268.2L566.2 280L581.1 295L603.6 317L602.5 318.3L580.4 296.7L565.7 282L554.9 270.5L546.9 261.2L543.8 257L541.1 253.1L538.9 249.4L537.2 245.9L536 242.7L535.2 239.6L535 236.7L535.1 233.9L535.8 231.1L537 228.3L538.6 225.7L540.9 222.8L543.7 220.1L546.9 217.5L550.8 214.8L555.1 212.1L566 206.3L579.8 200L597.8 192.4Z"/>
<path fill="#f4ff15" stroke="#f4ff15" d="M522.7 121.8L586.7 97.2L586.8 98.1L490 135.4L460.9 146.9L438.8 155.8L422.8 162.7L409.1 168.8L397.3 174.5L387.9 179.6L378.6 185.3L374.7 188L371.4 190.7L368.5 193.3L366 195.9L363.7 198.7L362 201.4L360.6 204.3L359.6 207L359 209.8L358.8 212.6L358.9 215.6L359.5 218.7L360.4 222L361.6 225.4L360.3 222.2L359.4 219.2L358.8 216.2L358.5 213.4L358.5 210.6L358.8 208.1L359.4 205.6L360.5 202.9L361.7 200.4L363.5 197.7L365.4 195.3L367.7 192.9L373.4 187.9L380.6 182.9L388.9 177.9L399.2 172.5L411.5 166.7L425.5 160.5L442.3 153.5L462.7 145.2ZM619.6 183.9L659.4 168.5L660.1 168.4L621.4 183.4L595.9 193.6L577.6 201.5L563.7 208.2L557.7 211.6L553 214.6L548.6 217.9L545.4 220.8L542.6 223.9L540.7 226.8L539.3 230L538.6 233.2L538.5 235.8L538.8 238.4L539.5 241.4L540.5 244.4L542 247.5L544 250.9L549.2 258.4L557 267.7L567.8 279.3L582.4 294L604.8 315.8L603.6 317L582 296L567.6 281.5L557 270.2L549 260.9L545.8 256.8L543.1 252.9L540.9 249.3L539.1 245.7L537.9 242.5L537.1 239.5L536.8 236.6L536.8 233.9L537.4 231L538.5 228.3L540 225.6L542 223L544.7 220.2L547.7 217.7L551.3 215.1L555.5 212.4L565.8 206.8L578.9 200.6L596.3 193.2Z"/>
<path fill="#fdff0c" stroke="#fdff0c" d="M487.7 134.4L586.5 96.3L586.7 97.2L488.8 134.9L460.3 146.2L438.3 155.1L422.1 162L408.6 168L397.5 173.4L387.7 178.6L378.4 184.4L371.2 189.7L368.3 192.3L365.7 194.9L363.5 197.7L361.7 200.4L360.3 203.3L359.3 205.9L358.7 208.7L358.5 211.6L358.6 214.6L359.1 217.7L359.9 220.9L361.1 224.3L360 221.3L359.1 218.6L358.5 215.8L358.2 213.3L358.1 210.6L358.3 208.2L358.8 205.7L359.5 203.4L360.6 201.1L361.8 198.9L363.3 196.7L365.3 194.2L369.8 189.7L375.9 185L382.7 180.5L391.2 175.6L401.5 170.4L413.3 164.8L427 158.9L443.5 152ZM617.6 184.9L660.1 168.4L660.8 168.4L622.1 183.3L597.2 193.3L578.9 201.2L571.3 204.8L565 208L559 211.4L554.3 214.4L550.3 217.4L547 220.4L544.3 223.4L542.4 226.5L541.1 229.7L540.4 232.9L540.3 235.6L540.6 238.2L541.4 241.2L542.5 244.1L544 247.2L545.9 250.5L551.1 257.9L558.9 267.2L569.5 278.5L584.1 293.3L605.9 314.6L604.8 315.8L583.7 295.2L569.2 280.7L558.6 269.5L550.8 260.4L547.6 256.3L544.9 252.4L542.7 248.8L541 245.5L539.8 242.3L538.9 239.3L538.6 236.4L538.6 233.7L539.1 230.9L540 228.2L541.5 225.6L543.4 222.9L546.1 220.1L549 217.6L552.6 214.9L556.4 212.4L566.1 207L579.2 200.8L595.4 193.8Z"/>
<path fill="#ffff03" stroke="#ffff03" d="M519.7 121L586.4 95.4L586.5 96.3L488.7 134L459.7 145.4L438.1 154.2L422.1 161L408.4 167.1L397 172.6L387.3 177.8L378.3 183.4L371 188.7L367.9 191.5L365.4 194.1L363.3 196.7L361.5 199.4L360 202.3L359 205L358.4 207.9L358.1 210.6L358.2 213.6L358.7 216.8L359.6 220.1L360.7 223.3L359.5 220L358.6 217L358 214.2L357.8 211.4L357.8 208.6L358.2 206.2L358.8 203.6L359.8 201L361.1 198.6L362.8 196.1L364.7 193.7L367.1 191.1L372.7 186.3L380 181.1L388 176.4L398.2 171L410.5 165.1L424.4 159L440.7 152.2L461 143.9ZM616.4 185.5L658.9 169.1L660.8 168.4L661.5 168.3L623.5 183L598.5 193L580.2 200.9L572.6 204.5L566.3 207.7L560.3 211.1L555.6 214.2L551.7 217.2L548.5 220.2L546 223.1L543.9 226.4L542.7 229.6L542.1 232.8L542.1 235.5L542.5 238L543.3 241L544.4 243.9L546 247L547.9 250.3L553 257.4L560.8 266.7L571.3 278L585.7 292.5L607.1 313.4L605.9 314.6L585.3 294.5L571.1 280.2L560.5 268.9L552.7 259.9L549.5 255.8L546.7 251.9L544.6 248.3L542.9 245L541.6 241.8L540.8 238.9L540.3 236L540.4 233.3L540.8 230.4L541.8 227.7L543.1 225.2L544.8 222.8L547.1 220.3L549.9 217.7L553.5 215L557.3 212.4L566.9 207L578.9 201.2L595 194.2Z"/>
<path fill="#fff900" stroke="#fff900" d="M486.7 132.9L586.3 94.5L586.4 95.4L488.6 133.1L460 144.3L438 153.3L421.5 160.2L408.3 166.2L396.8 171.7L387.4 176.7L378.4 182.2L371 187.6L367.7 190.5L365.1 193.1L363 195.7L361.2 198.4L359.7 201.2L358.7 204L358.1 206.8L357.8 209.7L357.9 212.6L358.3 215.8L359.1 218.8L360.3 222.3L359.2 219.3L358.4 216.6L357.8 213.9L357.5 211.3L357.4 208.7L357.7 206.2L358.2 203.8L359 201.5L360.1 199L361.3 196.8L362.9 194.6L364.9 192.2L369.6 187.7L375.5 183.1L382.4 178.6L390.7 173.9L400.8 168.7L412.5 163.2L425.9 157.4L442.6 150.4ZM616 185.9L657 170L661.5 168.3L662.2 168.2L624.2 182.9L599.3 192.9L580.9 200.9L573.9 204.2L567.6 207.5L562.1 210.6L557.3 213.7L553.4 216.8L550.2 219.7L547.5 223L545.7 226L544.5 229.1L543.9 232.3L543.9 235L544.3 237.5L545 240.3L546.1 243.2L547.7 246.3L549.6 249.5L554.8 256.9L562.4 266L573 277.3L587.1 291.5L608.2 312.1L607.1 313.4L586.7 293.5L572.7 279.5L562.3 268.4L554.5 259.4L548.8 251.6L546.6 248.1L544.8 244.8L543.5 241.6L542.6 238.6L542.2 235.8L542.1 233L542.5 230.3L543.4 227.7L544.6 225.1L546.4 222.5L548.7 220L551.3 217.5L554.8 214.8L558.6 212.2L567.7 207L579.7 201.1L595.2 194.3Z"/>
<path fill="#fff000" stroke="#fff000" d="M519.8 119.1L586.2 93.6L586.3 94.5L488.5 132.2L459.4 143.6L437.9 152.4L421.8 159.1L408.1 165.3L396.7 170.8L386.9 176L377.8 181.5L373.7 184.4L370.3 187.1L367.3 189.7L364.8 192.4L362.6 195L360.9 197.6L359.5 200.2L358.4 202.9L357.8 205.7L357.4 208.7L357.5 211.6L358 214.8L358.7 217.8L359.9 221.1L358.7 218.1L357.9 215.1L357.3 212.3L357.1 209.5L357.2 206.7L357.6 204.2L358.3 201.6L359.2 199.2L360.6 196.7L362.1 194.4L364 192L366.4 189.4L372 184.7L379.3 179.5L387.4 174.7L397.6 169.3L409.9 163.5L423.7 157.4L440.4 150.4L460.7 142.1ZM616 186.1L655.8 170.7L662.2 168.2L663 168.1L625.5 182.6L601.1 192.4L582.8 200.3L575.6 203.7L569.3 207L563.8 210.2L559.1 213.3L555.1 216.3L551.9 219.3L549.2 222.5L547.4 225.6L546.3 228.7L545.7 231.9L545.7 234.3L546.1 237.1L546.9 239.8L548 242.7L549.5 245.8L551.4 249L556.5 256.2L564.1 265.2L574.4 276.3L588.5 290.5L609.4 310.9L608.2 312.1L588.1 292.5L574.4 278.7L564.2 267.9L556.4 258.9L550.6 251.1L548.4 247.6L546.7 244.3L545.3 241.2L544.4 238.2L544 235.3L543.9 232.7L544.3 229.9L545.1 227.4L546.3 224.8L548 222.3L550.2 219.7L553 217.1L556.1 214.6L559.9 212L569 206.7L580.9 200.9L595.9 194.3Z"/>
<path fill="#ffe700" stroke="#ffe700" d="M486.9 130.9L586.1 92.7L586.2 93.6L488.3 131.3L459.8 142.5L437.7 151.4L421.3 158.4L408 164.3L396.6 169.9L387.1 174.9L378 180.3L373.8 183.2L370.4 185.9L367.1 188.8L364.6 191.4L362.4 194L360.6 196.7L359.2 199.2L358.2 202L357.4 204.9L357.1 207.7L357.2 210.7L357.6 213.8L358.3 216.9L359.5 220.3L358.4 217.4L357.6 214.7L357.1 211.9L356.8 209.4L356.8 206.8L357 204.5L357.6 202.1L358.3 199.8L359.4 197.3L360.7 195.2L362.3 192.9L364.3 190.5L368.9 186L374.9 181.4L381.8 176.9L390.1 172.2L400.2 167.1L412.1 161.5L425.7 155.6L442.2 148.7ZM616.5 186.1L656.5 170.6L663 168.1L663.7 168.1L626.3 182.5L601.9 192.3L584.1 200.1L576.9 203.5L570.6 206.8L565.1 210L560.4 213.1L556.5 216.2L553.3 219.2L550.9 222.2L549.2 225.2L548.1 228.2L547.5 231.4L547.6 234.1L548 236.6L548.7 239.3L549.8 242.2L551.4 245.3L553.3 248.6L558.3 255.6L566 264.7L576.3 275.8L590.2 289.8L610.6 309.7L609.4 310.9L589.5 291.5L575.8 277.7L565.6 266.9L558.1 258.2L552.3 250.4L550.1 246.9L548.5 243.8L547.2 240.7L546.3 237.7L545.8 234.9L545.7 232.2L546.1 229.5L546.9 226.8L548.1 224.3L549.9 221.6L552.1 219.1L554.8 216.6L557.9 214.1L561.6 211.5L570.8 206.2L582.2 200.6L597.2 194Z"/>
<path fill="#ffde00" stroke="#ffde00" d="M523.3 115.9L585.9 91.8L586.1 92.7L488.2 130.4L459.2 141.8L437.6 150.6L421.1 157.5L407.5 163.6L396.1 169.1L386.3 174.3L377.1 179.9L369.8 185.3L366.9 187.8L364.3 190.5L362.1 193.2L360.3 195.8L358.8 198.6L357.8 201.3L357.1 204.2L356.8 207L356.8 210L357.2 212.9L358 216L359.2 219.4L358 216.1L357.2 213.2L356.6 210.3L356.4 207.6L356.5 205L357 202.3L357.7 199.7L358.8 197.2L360.2 194.6L361.9 192.2L363.8 189.9L366.3 187.3L372.2 182.4L379.4 177.4L388.1 172.3L398.4 167L410 161.5L424.7 155L441.5 148L462.4 139.6ZM617.3 186.1L657.3 170.5L663.7 168.1L664.5 168L628.2 182L603.8 191.8L585.9 199.6L578.8 203L572.4 206.3L566.9 209.5L562.2 212.6L558.2 215.7L555.1 218.7L552.6 221.8L550.9 224.8L549.9 227.7L549.4 231.1L549.4 233.6L549.8 236.1L550.5 238.8L551.7 241.8L553.2 244.8L555.2 248.1L560.1 254.9L567.6 264L577.7 274.8L591.4 288.6L611.7 308.4L610.6 309.7L590.9 290.5L577.5 277L567.3 266.2L559.7 257.4L554 249.6L551.8 246.1L550.2 243L548.9 239.9L548 236.9L547.6 234.1L547.5 231.4L548 228.6L548.8 226.1L550.1 223.4L551.8 221L554 218.5L556.5 216.2L559.6 213.7L563.4 211.1L572.1 206L583.5 200.3L598 194Z"/>
<path fill="#ffd500" stroke="#ffd500" d="M488.6 128.4L585.8 90.9L585.9 91.8L488.1 129.5L459.5 140.7L437.5 149.7L421 156.6L407.8 162.5L395.9 168.2L386.5 173.2L377.2 178.8L369.7 184.3L366.8 186.9L364.2 189.5L361.9 192.2L360 194.8L358.6 197.6L357.5 200.3L356.8 203.1L356.5 206L356.5 208.9L356.9 211.9L357.6 214.9L358.7 218.3L357.7 215.3L356.9 212.5L356.1 207.4L356.2 204.7L356.5 202.4L357 200.1L357.8 197.7L359 195.3L360.3 193.1L362 190.8L364 188.5L369 183.8L374.9 179.4L381.9 174.9L390.8 169.9L400.7 164.9L412.6 159.4L426.2 153.4L442.7 146.6ZM618.4 185.9L658.7 170.2L664.5 168L665.2 167.9L628.9 181.9L605.1 191.5L587.2 199.4L574.2 205.8L568.7 209L563.9 212.2L560.4 215L557.2 218L554.7 221L552.9 223.9L551.7 227.3L551.2 230.5L551.2 233.1L551.6 235.6L552.4 238.3L553.5 241.2L555 244.3L556.9 247.3L561.9 254.4L569.3 263.2L579.4 274L593 287.8L612.9 307.2L611.7 308.4L592.3 289.5L579.1 276.2L569.2 265.7L561.6 256.9L555.8 249.1L553.7 245.6L552.1 242.6L550.8 239.7L549.9 236.7L549.4 233.9L549.4 231.1L549.7 228.5L550.5 225.8L551.6 223.4L553.4 220.7L555.6 218.2L558.2 215.7L561.4 213.2L564.7 210.9L573.4 205.8L584.8 200.1L599.3 193.7Z"/>
<path fill="#ffcd00" stroke="#ffcd00" d="M531.3 111L585.7 90.1L585.8 90.9L488.5 128.4L459.4 139.9L437.4 148.8L420.9 155.7L407 161.9L395.8 167.3L386 172.5L376.7 178.1L369.5 183.4L366.3 186.2L363.7 188.8L361.6 191.3L359.7 194L358.3 196.7L357.2 199.4L356.5 202.3L356.2 205.1L356.2 208L356.5 211L357.3 214.3L358.4 217.5L357.2 214.2L356.5 211.3L356 208.4L355.8 205.8L355.9 203L356.4 200.2L357.2 197.6L358.3 195.2L359.8 192.7L361.5 190.2L363.6 187.8L366.2 185.2L372.2 180.3L379.7 175.2L388.4 170.2L399.1 164.7L411.7 158.9L427 152.2L444.9 144.8L466.6 136.1ZM619.8 185.5L661.3 169.4L665.2 167.9L665.9 167.9L630.3 181.7L606.4 191.3L588.5 199.1L581.4 202.6L575.5 205.6L570.1 208.8L565.7 211.7L562.1 214.5L558.9 217.6L556.4 220.6L554.7 223.6L553.5 226.8L553 229.9L553.1 232.3L553.4 234.9L554.2 237.6L555.3 240.5L556.7 243.3L558.6 246.6L563.6 253.6L571 262.5L581.1 273.3L594.5 286.8L614.1 306L612.9 307.2L593.8 288.5L580.6 275.3L570.6 264.7L563.1 255.9L557.6 248.4L555.4 244.9L553.8 241.8L552.5 238.6L551.7 235.9L551.2 233.1L551.2 230.5L551.5 227.9L552.3 225.3L553.6 222.6L555.2 220.3L557.3 217.8L560 215.3L563.1 212.8L566.5 210.4L575.2 205.3L586.7 199.6L601.2 193.2Z"/>
<path fill="#ffc400" stroke="#ffc400" d="M491.9 125.3L585.6 89.2L585.7 90.1L487.9 127.7L459.3 139L436.8 148.1L420.4 155L407.1 160.9L395.3 166.6L385.9 171.6L376.8 177L369.3 182.5L366.3 185.1L363.6 187.8L361.5 190.3L359.6 193L358.1 195.5L357 198.3L356.3 201.1L355.9 203.9L355.8 206.8L356.2 209.9L356.9 213L358 216.3L356.9 213.4L356.2 210.6L355.7 208L355.5 205.4L355.6 203.1L355.9 200.6L356.5 198.1L357.4 195.7L358.6 193.3L360 191.1L363.6 186.6L368.4 182.1L374.8 177.4L382.1 172.8L391 167.9L401.5 162.6L413.5 157.1L427.7 151L444.7 143.9ZM621.5 185.1L664 168.6L665.9 167.9L666.7 167.9L631.6 181.4L608.3 190.8L590.9 198.4L583.7 201.8L577.8 204.9L572.3 208.1L567.9 211L563.9 214.1L560.9 216.9L558.5 219.8L556.6 222.9L555.4 226L554.9 229.2L554.9 231.6L555.3 234.4L556 237.1L557 239.7L558.5 242.8L560.3 245.8L565.1 252.6L572.4 261.5L582.3 272.1L595.7 285.6L615.3 304.8L614.1 306L595.2 287.6L582.2 274.5L572.3 264L565 255.4L559.4 247.9L557.3 244.4L555.7 241.3L554.5 238.4L553.6 235.5L553.1 232.7L553 229.9L553.4 227.2L554.3 224.5L555.4 222.2L557 219.8L559.1 217.3L561.8 214.8L564.9 212.3L568.3 210L577 204.8L588.5 199.1L603 192.7Z"/>
<path fill="#ffbb00" stroke="#ffbb00" d="M547.7 102.8L585.5 88.3L585.6 89.2L488.3 126.7L459.2 138.1L437.1 147L420.6 154L406.6 160.2L395.5 165.5L385.8 170.7L376.4 176.3L369.1 181.6L365.8 184.5L363.2 187L361 189.7L359.1 192.4L357.7 194.9L356.6 197.7L355.9 200.6L355.5 203.4L355.6 206.3L355.9 209.3L356.6 212.4L357.7 215.6L356.5 212.3L355.8 209.3L355.3 206.3L355.2 203.5L355.4 200.7L356 198L356.9 195.4L358.1 192.8L359.8 190.1L361.7 187.7L364 185.1L366.5 182.8L372.9 177.7L381.4 172.2L390.7 167L402.1 161.4L415.3 155.4L431.8 148.3L474.3 131.2ZM623.5 184.6L666.7 167.9L667.4 167.8L633 181.1L609.6 190.6L592.2 198.2L585 201.6L579.2 204.7L573.7 207.9L569.3 210.9L565.7 213.7L562.5 216.7L560.3 219.4L558.5 222.4L557.3 225.5L556.7 228.7L556.8 231.1L557.1 233.6L557.8 236.3L558.9 239.2L560.3 242.1L562.2 245.3L567 252.2L574.1 260.8L584 271.3L597.1 284.7L616.5 303.6L615.3 304.8L596.6 286.6L583.7 273.5L573.8 263L566.6 254.5L561.1 247.1L559 243.6L557.4 240.5L556.1 237.4L555.3 234.6L554.9 231.9L554.9 229.2L555.3 226.7L556.1 224.1L557.4 221.4L559.1 219L561.4 216.4L563.9 214.1L567.1 211.6L570.5 209.3L579.3 204.1L590.3 198.6L604.9 192.2Z"/>
<path fill="#ffb300" stroke="#ffb300" d="M497.5 121.3L585.4 87.5L585.5 88.3L487.6 126L459.1 137.2L436.7 146.3L419.7 153.4L406.5 159.3L394.7 165L385.5 169.9L376.3 175.4L368.7 180.9L365.8 183.4L363 186.1L360.9 188.6L359 191.4L357.5 194L356.4 196.7L355.6 199.6L355.2 202.5L355.2 205.3L355.6 208.3L356.3 211.4L357.3 214.7L356.3 211.6L355.6 208.9L355.1 206.2L354.9 203.6L355 201.1L355.4 198.6L356 196.1L357 193.7L358.3 191.2L359.7 189L363.5 184.5L368.6 179.9L375.3 175L383 170.3L392.3 165.3L402.7 160.2L415.6 154.3L430.8 147.8L448.2 140.7ZM625.9 184L667.4 167.8L668.2 167.8L634.4 180.9L611.5 190.1L594.2 197.7L581.4 204L575.9 207.3L571.5 210.1L567.5 213.2L564.6 216L562.1 219L560.3 222L559.2 225L558.6 227.9L558.6 230.3L558.9 232.8L559.6 235.6L560.6 238.2L562 241.3L563.7 244.3L568.5 251.2L575.6 259.8L585.4 270.4L598.6 283.7L617.7 302.4L616.5 303.6L598.1 285.6L585.4 272.8L575.7 262.5L568.4 254L562.9 246.4L560.9 243.1L559.2 239.8L558 236.9L557.2 233.9L556.8 231.4L556.7 228.7L557.1 226.3L557.9 223.6L559.2 221.1L560.9 218.6L563.1 216L565.7 213.7L568.9 211.2L572.3 208.8L581.1 203.7L592.3 198.1L606.8 191.7Z"/>
<path fill="#ffaa00" stroke="#ffaa00" d="M476.6 128.5L585.3 86.6L585.4 87.5L488.1 124.9L459.4 136.2L436.9 145.3L420.4 152.2L406.5 158.4L395.3 163.8L385.5 168.9L376.2 174.5L368.6 179.9L365.7 182.4L363 185.1L360.7 187.7L358.8 190.3L357.3 192.9L356.2 195.7L355.4 198.6L355 201.4L354.9 204.5L355.3 207.4L355.9 210.4L357 213.6L356 210.8L355.3 208.3L354.8 205.8L354.6 203.2L354.7 200.9L354.9 198.4L355.5 196.2L356.2 193.9L357.3 191.6L358.7 189.3L362 185L366.5 180.6L372.3 176.1L379.1 171.7L387.1 167.1L396.9 162.1L407.8 156.9L420.3 151.4L435.9 144.8ZM628.6 183.2L668.2 167.8L669 167.8L635.1 180.9L612.3 190.1L595.4 197.5L582.8 203.9L577.7 206.8L573.3 209.7L569.4 212.7L566.4 215.6L564 218.5L562.2 221.5L561 224.6L560.5 227.5L560.5 229.8L560.8 232.5L561.5 235.1L562.6 238L565.7 243.8L570.4 250.7L577.5 259.3L587.1 269.6L600 282.7L618.9 301.2L617.7 302.4L599.5 284.6L586.8 271.8L577.2 261.5L569.9 253L564.6 245.7L562.5 242.1L560.9 239.1L559.8 236.1L559 233.1L558.6 230.4L558.6 227.8L559.1 225.1L559.9 222.8L561.2 220.3L563 217.8L565.1 215.5L567.9 212.9L570.9 210.6L574.5 208.1L583.4 203L594.6 197.5L609.3 191Z"/>
<path fill="#ffa200" stroke="#ffa200" d="M506.6 116L585.2 85.8L585.3 86.6L487.4 124.3L458.9 135.5L436.8 144.4L419.9 151.6L406.6 157.4L394.8 163.1L385.1 168.2L375.7 173.8L368.2 179.3L365.2 181.8L362.5 184.5L360.3 187L358.4 189.8L357 192.3L355.8 195.1L355.1 197.7L354.7 200.5L354.6 203.5L354.9 206.4L355.6 209.5L356.6 212.8L355.6 209.8L354.9 207L354.5 204.2L354.3 201.6L354.4 199.1L354.9 196.6L355.6 194.1L356.6 191.7L357.9 189.3L359.5 186.9L361.5 184.5L363.7 182.2L369.2 177.4L376.2 172.6L384 167.9L393.3 162.9L404.7 157.5L418.2 151.4L433.6 144.9L452.6 137.1ZM631.7 182.2L669 167.8L669.7 167.8L637.1 180.4L614.8 189.4L597.8 196.8L585.1 203.2L579.9 206.1L575.5 209L571.8 211.8L568.5 214.9L565.9 217.9L564.2 220.6L563 223.8L562.4 226.7L562.4 229L562.6 231.6L563.2 234.1L564.2 237L565.6 239.8L567.2 242.8L571.9 249.7L579 258.3L588.6 268.7L601.5 281.8L620.1 300L618.9 301.2L601 283.7L588.3 270.9L578.6 260.5L571.6 252.2L566.3 244.9L564.2 241.4L562.7 238.3L561.6 235.4L560.8 232.5L560.5 229.8L560.5 227.1L561 224.6L562 221.9L563.3 219.5L565.1 217.1L567.4 214.5L570 212.2L573.3 209.7L576.8 207.4L585.7 202.3L597.5 196.5L612.3 190.1Z"/>
<path fill="#ff9900" stroke="#ff9900" d="M481.8 124.7L585.1 85L585.2 85.8L487.3 123.5L458.8 134.7L436.3 143.8L420.2 150.5L406.4 156.6L394.7 162.2L384.9 167.4L375.6 172.9L368.1 178.3L365.2 180.8L362.4 183.5L360.2 186L358.2 188.7L356.8 191.4L355.6 194.1L354.8 196.7L354.4 199.5L354.3 202.5L354.6 205.5L355.3 208.6L356.3 211.8L355.3 209L354.7 206.4L354.2 203.8L354 201.3L354.1 198.9L354.4 196.5L355 194.3L355.8 191.9L357 189.5L358.4 187.3L361.9 182.9L366.7 178.4L372.6 174L379.6 169.5L387.6 165L397.4 160L409.1 154.6L422.5 148.6L438.6 141.9ZM635.4 181.1L669.7 167.8L670.5 167.8L638.5 180.2L616.1 189.2L599.6 196.4L586.9 202.7L581.8 205.7L577.3 208.6L573.6 211.4L570.7 214.1L568.1 217.1L566.4 219.8L565.1 222.6L564.4 225.8L564.2 228.2L564.5 230.8L565.1 233.6L566 236.2L567.5 239.4L569.2 242.4L573.7 249L580.7 257.6L590.3 268L602.9 280.8L621.3 298.8L620.1 300L602.2 282.5L589.8 269.9L580.2 259.7L573.1 251.3L567.8 243.7L565.8 240.4L564.4 237.3L563.3 234.3L562.6 231.6L562.4 229L562.5 226.3L563 223.8L563.9 221.4L565.4 218.7L567.2 216.3L569.6 213.8L572.2 211.5L575.5 209L579.5 206.4L588.5 201.3L600.4 195.6L615.3 189.2Z"/>
<path fill="#ff9100" stroke="#ff9100" d="M522.6 108.1L585 84.1L585.1 85L487.2 122.6L458.6 133.9L436.6 142.8L420.1 149.7L406 155.9L394.2 161.6L384.8 166.5L375.4 172.1L367.9 177.5L364.8 180.1L362.2 182.7L359.9 185.4L358 187.9L356.4 190.7L355.3 193.3L354.5 196.1L354.1 198.9L354.1 201.8L354.4 204.8L355 207.9L356 211.1L355 207.9L354.3 205.1L353.9 202.3L353.8 199.7L354 196.9L354.5 194.5L355.3 191.9L356.3 189.5L357.8 187L359.7 184.5L361.8 182L364.2 179.7L370.1 174.8L377.3 170L385.6 165.1L396.2 159.7L408.6 153.9L423.2 147.5L440.5 140.3L461.4 131.9ZM640 179.6L670.5 167.8L671.3 167.9L639.2 180.2L617.5 189L601 196.2L588.8 202.3L583.6 205.3L579.4 208L575.8 210.8L572.6 213.7L570.2 216.4L568.3 219.3L567 222.1L566.3 225L566.1 227.5L566.3 229.7L566.9 232.5L567.7 235.2L569 238.1L570.6 241.1L575.2 248L582 256.4L591.5 266.8L604.2 279.6L622.6 297.6L621.3 298.8L603.4 281.3L591 268.7L581.6 258.6L574.7 250.3L571.8 246.4L569.3 242.6L567.5 239.4L566 236.2L565 233.3L564.4 230.5L564.2 227.7L564.5 225.2L565.1 222.6L566.2 220.1L567.7 217.6L569.6 215.2L572.1 212.8L574.8 210.5L578.2 208L582.2 205.5L591.9 200.2L603.9 194.5L619.6 187.8Z"/>
<path fill="#ff8800" stroke="#ff8800" d="M489.7 119.9L584.9 83.3L585 84.1L487.1 121.8L458.5 133L436 142.1L419.6 149L405.9 155.1L394.1 160.7L384.4 165.8L375.1 171.4L367.7 176.7L364.6 179.3L361.9 181.9L359.7 184.5L357.7 187.2L356.2 189.7L355 192.5L354.3 195.3L353.8 198.1L353.8 201L354.1 203.9L354.7 207L355.7 210.3L354.7 207.3L354 204.5L353.6 202L353.5 199.5L353.6 197L354 194.6L354.6 192.3L355.5 190L356.8 187.5L358.2 185.3L362 180.8L367.1 176.2L373.1 171.8L380.3 167.2L389 162.4L399.6 157.2L411.9 151.5L426.1 145.4L442.6 138.6ZM646.1 177.5L671.3 167.9L672 167.9L640.6 180L619.4 188.6L603.4 195.6L591.1 201.7L586.3 204.4L581.8 207.3L578.1 210L575 212.7L572.6 215.3L570.6 218.2L569.2 220.9L568.3 223.9L568.1 226.3L568.2 228.7L568.6 231.5L569.4 234.2L570.6 237L572.2 240.1L574.2 243.3L576.8 247L583.5 255.4L593 265.8L605.6 278.7L623.8 296.4L622.6 297.6L604.9 280.3L592.5 267.7L583.1 257.6L576.2 249.3L573.3 245.4L571.1 241.9L569.2 238.6L567.8 235.5L566.9 232.5L566.3 229.6L566.2 226.8L566.4 224.4L567.2 221.7L568.3 219.3L569.9 216.8L572.1 214.2L574.7 211.7L577.5 209.5L581.3 206.8L585.4 204.2L595.3 199L608 193.1L624.4 186.2Z"/>
<path fill="#ff8000" stroke="#ff8000" d="M559.3 92.3L584.8 82.5L584.9 83.3L487.5 120.8L458.4 132.2L436.4 141.1L419.9 148L405.8 154.3L394 159.9L384.5 164.8L375.2 170.4L367.8 175.6L364.7 178.2L362 180.8L359.7 183.4L357.6 186.1L356.1 188.7L354.8 191.5L354.1 194.2L353.6 197L353.5 200.1L353.8 203L354.4 206.1L355.4 209.3L354.3 206L353.6 203L353.3 200.1L353.3 197.1L353.6 194.3L354.3 191.7L355.3 189L356.7 186.5L358.5 183.8L360.5 181.3L363.1 178.7L365.7 176.3L372.9 170.9L381.6 165.6L391.5 160.3L403.1 154.6L417.7 148.1L434.5 141L479.1 123.2ZM657 173.7L672 167.9L672.8 167.9L643.2 179.3L622.5 187.7L606.4 194.7L594.3 200.6L589.1 203.5L584.6 206.3L580.7 209L577.6 211.6L575 214.3L573 217L571.5 219.7L570.6 222.2L570.1 224.5L570 227.2L570.4 230.1L571.1 232.8L572.2 235.7L573.7 238.8L575.6 242.1L578 245.5L584.6 254L594 264.4L606.6 277.2L625 295.2L623.8 296.4L605.9 278.9L593.5 266.3L584.2 256.2L577.3 247.8L574.6 243.9L572.4 240.4L570.6 237L569.3 233.9L568.5 230.8L568.1 228L568.1 225.3L568.6 222.8L569.6 220.1L570.8 217.7L572.7 215.2L575 212.7L578.1 210L581.4 207.6L589.7 202.5L600.2 197.1L614.3 190.7L632.2 183.3Z"/>
<path fill="#ff7800" stroke="#ff7800" d="M502.2 113.4L584.7 81.7L584.8 82.5L486.4 120.4L457.4 131.8L435.4 140.7L418.9 147.6L405.3 153.6L393.9 159.1L384.1 164.2L374.8 169.7L367.3 175.1L364.3 177.5L361.5 180.3L359.2 182.9L357.2 185.6L355.7 188.2L354.5 191L353.8 193.6L353.3 196.4L353.2 199.1L353.5 202.1L354.1 205.1L355.1 208.4L354.1 205.4L353.4 202.7L353.1 200.1L352.9 197.5L353.1 194.9L353.6 192.5L354.3 190L355.4 187.6L356.7 185.2L358.3 182.9L362.5 178.2L368 173.5L374.7 168.9L382.4 164.2L391.8 159.3L403 153.8L416 148L430.9 141.7L449.7 134ZM630.2 184.5L672.8 167.9L673.6 168L642.2 180.1L621 188.7L605.1 195.8L598.3 199.1L592.9 202L587.8 205L583.8 207.8L580.2 210.7L577.3 213.5L575.1 216.3L573.4 219.2L572.4 222L572 225.1L572 227.4L572.4 229.9L573 232.4L574 235L576.9 240.5L581.4 247.1L588.1 255.3L597.2 265.1L609.1 277.2L626.3 294L625 295.2L608.6 279.2L596.8 267.3L587.9 257.7L581.1 249.7L576 242.6L574 239.4L572.4 236.3L571.3 233.4L570.5 230.7L570.1 228.2L570 225.8L570.3 223.3L571 220.8L572.1 218.4L573.5 216.2L575.4 213.8L577.6 211.6L580.3 209.4L583.7 206.9L591.5 202.1L601.6 196.9L614 191.3Z"/>
<path fill="#ff7000" stroke="#ff7000" d="M480.2 121.1L584.6 80.9L584.7 81.7L487.3 119.2L458.7 130.4L436.2 139.5L419.7 146.4L405.6 152.6L394.1 158.1L384.3 163.2L374.8 168.8L367.3 174.1L364.2 176.7L361.5 179.2L359.2 181.8L357.1 184.6L355.6 187.2L354.3 190L353.5 192.6L353.1 195.5L353 198.5L353.2 201.4L353.8 204.5L354.8 207.6L353.9 204.8L353.2 202.2L352.8 199.8L352.7 197.2L352.8 194.8L353.2 192.4L353.8 190.2L354.7 187.8L355.8 185.5L357.2 183.3L360.8 179L365.6 174.5L371.6 170L378.5 165.6L387 160.8L396.8 155.9L408.1 150.6L421.2 144.9L437.1 138.3ZM634.1 183.3L673.6 168L674.4 168L644.2 179.7L623 188.3L607 195.4L600.2 198.7L594.8 201.6L589.8 204.6L585.7 207.4L582.2 210.1L579.4 212.9L577.2 215.6L575.6 218.4L574.5 221.2L573.9 224.3L573.9 226.7L574.2 229.1L574.9 231.6L575.8 234.3L577.2 237.1L578.9 240.1L583.2 246.4L589.8 254.6L598.7 264.2L610.6 276.3L627.5 292.9L626.3 294L610.1 278.2L598.3 266.4L589.4 256.8L582.6 248.7L577.6 241.6L575.8 238.6L574.3 235.6L573.2 232.8L572.4 230.1L572 227.4L572 224.9L572.3 222.5L573.1 220L574.3 217.6L575.8 215.3L577.9 212.8L580.2 210.7L583 208.4L586.4 205.9L594.4 201.2L604.5 196L617.6 190.1Z"/>
<path fill="#ff6800" stroke="#ff6800" d="M525.4 102.8L584.5 80.1L584.6 80.9L486.2 118.8L457.7 130L435.6 138.9L418.8 146L405.1 152L393.3 157.6L383.6 162.7L374.3 168.2L366.9 173.5L363.8 176.1L361.1 178.7L358.8 181.2L356.7 184L355.2 186.6L354 189.4L353.2 192.1L352.8 194.9L352.7 197.8L353 200.8L353.6 203.7L354.5 206.9L353.5 203.9L352.9 200.9L352.5 198.2L352.5 195.4L352.7 192.8L353.3 190.1L354.2 187.7L355.3 185.2L356.9 182.7L358.8 180.2L363.4 175.4L369.7 170.4L377.2 165.5L386.3 160.4L396.7 155.1L409.2 149.3L423.6 143.1L441.3 135.7L462.4 127.3ZM638.6 181.9L674.4 168L675.1 168.1L645.6 179.5L624.9 187.9L608.9 195L597.1 201L591.9 204.1L587.9 206.8L584.7 209.3L581.7 212.1L579.4 214.9L577.6 217.9L576.5 220.6L575.9 223.5L575.9 225.9L576.1 228.2L576.7 230.9L577.7 233.5L580.5 239.1L584.8 245.5L591.4 253.6L600.2 263.3L612.1 275.4L628.8 291.7L627.5 292.9L611.3 277L599.6 265.2L590.7 255.6L584.2 247.7L579.2 240.7L577.4 237.6L576 234.5L574.9 231.8L574.2 229.1L573.9 226.7L574 224L574.4 221.5L575.2 219.2L576.4 216.8L578.1 214.4L580.2 212.1L582.8 209.7L585.7 207.4L589.2 205L597.2 200.3L608 194.9L621.2 189Z"/>
<path fill="#ff6000" stroke="#ff6000" d="M492 114.9L584.4 79.4L584.5 80.1L486.6 117.8L458 129L435.5 138.1L419 145L405.3 151.1L393.9 156.5L383.8 161.7L374.4 167.3L366.8 172.6L363.7 175.2L361 177.7L358.7 180.3L356.7 183L355.1 185.6L353.9 188.4L353 191.1L352.6 193.9L352.4 196.7L352.7 199.6L353.2 202.7L354.2 205.9L353.3 203.3L352.7 200.5L352.3 197.9L352.2 195.4L352.3 193L352.8 190.5L353.4 188.2L354.4 185.8L355.7 183.4L357.2 181.2L361.1 176.7L366.2 172.2L372.6 167.6L380 163L389.1 158.1L399.4 153L412.2 147.2L426.8 140.9L443.9 133.9ZM644.1 180.1L675.1 168.1L675.9 168.2L647 179.4L626.9 187.5L611.3 194.4L599.5 200.4L594.3 203.4L590.2 206.1L586.9 208.7L583.9 211.5L581.6 214.2L579.9 216.8L578.6 219.7L578 222.5L577.8 224.8L578 227.4L578.5 229.8L579.4 232.5L580.6 235.3L582.1 238.1L586.4 244.5L592.9 252.7L601.7 262.3L613.3 274.2L630 290.5L628.8 291.7L612.6 275.9L601.1 264.2L592.3 254.6L585.8 246.8L580.8 239.7L579 236.4L577.7 233.5L576.7 230.9L576.1 228.1L575.9 225.3L576 222.8L576.5 220.5L577.5 218L578.8 215.7L580.7 213.3L582.7 211.1L585.4 208.7L588.8 206.1L592.4 203.8L601.1 198.9L612.1 193.5L626 187.4Z"/>
<path fill="#ff5800" stroke="#ff5800" d="M474.6 120.9L584.3 78.6L584.4 79.4L486.5 117L457.5 128.4L435.4 137.3L418.9 144.2L404.9 150.4L393.1 156L383.4 161.1L373.8 166.8L366.5 172L363.3 174.6L360.7 177.2L358.4 179.7L356.3 182.5L354.8 185.1L353.7 187.5L352.8 190.1L352.3 193L352.2 196L352.4 198.9L352.9 201.8L353.9 205.1L353 202.3L352.4 199.7L351.9 194.8L352.1 192.4L352.4 190.2L353 188.1L353.9 185.7L356.3 181.4L359.8 177.1L364.5 172.7L370.2 168.3L377.2 163.8L385.1 159.3L394.5 154.5L405.9 149.2L418.8 143.5L434.5 136.9ZM651.3 177.7L675.9 168.2L676.7 168.3L648.4 179.2L628.8 187.2L613.8 193.8L601.9 199.8L597.1 202.5L593 205.2L589.6 207.7L586.5 210.5L584.1 213.1L582.2 215.8L580.9 218.5L580.1 221.2L579.8 223.7L579.9 226L580.3 228.5L581.1 231.2L582.2 234.1L583.7 236.9L588 243.6L594.2 251.5L603 261.2L614.6 273.1L631.3 289.4L630 290.5L613.8 274.7L602.4 263.1L593.6 253.4L587.1 245.6L584.5 241.9L582.3 238.4L580.6 235.3L579.3 232.2L578.5 229.5L577.9 226.7L577.8 224.1L578.1 221.7L578.8 219.2L579.9 216.8L581.4 214.4L583.4 212L585.7 209.7L588.5 207.4L592 204.9L595.7 202.6L605 197.5L616.7 191.9L632 185.4Z"/>
<path fill="#ff5100" stroke="#ff5100" d="M512.7 105.3L584.2 77.9L584.3 78.6L485.9 116.5L457.4 127.7L435.3 136.6L418.8 143.5L405.2 149.5L393.7 154.9L383.6 160.2L374.2 165.7L366.6 171L363.4 173.6L360.7 176.1L358.4 178.7L356.2 181.5L354.7 184.1L353.4 186.9L352.6 189.6L352.1 192.4L351.9 195.2L352.1 198.1L352.7 201.1L353.6 204.3L352.7 201.2L352.1 198.4L351.8 195.9L351.7 193.3L351.9 190.8L352.5 188.3L353.2 186L354.4 183.5L355.9 181L357.6 178.7L362 174L367.9 169.1L375 164.3L383.3 159.5L393.1 154.4L404.7 148.9L419.2 142.5L435.3 135.8L455.4 127.7ZM666.3 172.3L676.7 168.3L677.5 168.4L650.4 178.8L631.4 186.6L616.8 192.9L605.3 198.6L600.4 201.4L596.2 204L592.7 206.5L589.5 209.1L587 211.7L585 214.1L583.5 216.8L582.5 219.3L582 221.6L581.8 224.3L582 226.8L582.7 229.6L583.6 232.2L585 235.4L586.9 238.6L589 241.8L595.4 250.1L604 259.8L615.9 271.9L632.5 288.2L631.3 289.4L614.8 273.3L603.2 261.4L594.5 251.8L588.2 243.8L585.6 240.1L583.7 236.9L582 233.5L580.9 230.6L580.2 227.9L579.8 225L579.9 222.4L580.5 219.8L581.4 217.4L582.9 214.8L584.7 212.3L587.1 209.9L589.9 207.5L593 205.2L597.1 202.5L601.4 200L611.6 194.8L625.4 188.6L642.9 181.4Z"/>
<path fill="#ff4900" stroke="#ff4900" d="M486.8 114.6L584.1 77.1L584.2 77.9L486.4 115.5L457.8 126.7L435.3 135.8L418.8 142.7L404.7 148.9L393.1 154.4L383.3 159.5L373.8 165.1L366.3 170.3L363.3 172.8L360.3 175.6L358 178.2L356 180.8L354.4 183.5L353.2 186L352.4 188.6L351.9 191.5L351.7 194.5L351.9 197.4L352.4 200.3L353.4 203.6L352.5 200.7L351.9 198.1L351.6 195.6L351.5 193L351.6 190.6L352.1 188.1L352.8 185.8L353.8 183.6L355 181.3L356.5 179.1L360.4 174.6L365.4 170.2L371.7 165.6L378.8 161.2L387.8 156.3L398.3 151.1L410.3 145.6L424.4 139.5L440.9 132.7ZM640.5 182.8L677.5 168.4L678.3 168.5L650 179.4L630.4 187.4L615.5 194.1L604.2 199.9L599.5 202.8L595.4 205.5L591.9 208.4L589.2 211L586.9 213.9L585.4 216.6L584.4 219.3L583.9 222.1L583.8 224.5L584.1 226.7L584.7 229.2L585.6 231.8L588.4 237.4L592.4 243.4L598.7 251.2L607.2 260.6L618.3 272L633.8 287.1L632.5 288.2L617.6 273.6L606.6 262.5L598.2 253.3L591.9 245.7L587.1 238.9L584 233.1L582.9 230.2L582.2 227.5L581.8 224.9L581.9 222.6L582.3 220.1L583 217.8L584.2 215.4L585.6 213.3L587.5 211.1L589.9 208.8L592.7 206.5L595.7 204.3L603.3 199.7L613 194.7L625.1 189.2Z"/>
<path fill="#ff4200" stroke="#ff4200" d="M573.6 80.4L584 76.4L584.1 77.1L486.3 114.8L456.7 126.4L434.7 135.2L418.3 142.1L403.9 148.5L391.9 154.2L382.1 159.3L372.9 164.8L365.6 170L362.5 172.6L359.9 175.1L357.6 177.7L355.6 180.4L354 183L352.9 185.5L352.1 188.1L351.6 191L351.5 193.7L351.7 196.6L352.2 199.6L353.1 202.7L352.1 199.4L351.5 196.5L351.2 193.6L351.3 190.7L351.8 187.9L352.5 185.3L353.7 182.5L355.2 179.9L357.1 177.3L359.4 174.7L362 172.2L365 169.6L372.2 164.4L381.4 158.9L391.7 153.5L404.2 147.6L419 141L436.8 133.6L484.6 114.6ZM645.8 181.1L678.3 168.5L679.1 168.6L652 179.1L632.4 187.1L617.4 193.8L606.1 199.6L601.4 202.5L597.3 205.3L594 207.9L591.4 210.4L589.2 213.1L587.6 215.7L586.5 218.5L585.9 221.4L585.8 223.7L586 226L586.6 228.5L587.5 231.1L590.1 236.4L594.1 242.6L600.4 250.5L608.7 259.7L619.6 270.8L635 285.9L633.8 287.1L618.8 272.5L608.1 261.5L599.7 252.4L593.5 244.8L588.7 238L587 234.9L585.7 232.1L584.7 229.2L584.1 226.7L583.8 224.2L583.9 221.8L584.4 219.3L585.2 217.1L586.4 214.7L587.9 212.6L589.9 210.3L592.2 208.2L595 205.9L598.5 203.4L606.7 198.6L616.5 193.6L629.3 187.9Z"/>
<path fill="#ff3a00" stroke="#ff3a00" d="M508.1 104.8L583.9 75.7L584 76.4L485.7 114.2L435.1 134.3L418.6 141.2L404.9 147.2L393.1 152.8L382.9 158.1L373.5 163.6L366 168.9L362.8 171.4L360 174.1L357.6 176.7L355.5 179.4L353.9 182.1L352.8 184.6L351.9 187.4L351.4 190.1L351.2 193L351.4 195.9L352 199L352.9 202.1L352 199.2L351.4 196.4L351.1 193.9L351 191.2L351.2 188.8L351.8 186.3L352.7 183.6L353.8 181.3L355.2 179L356.9 176.6L361.3 172L367 167.2L374 162.4L382.5 157.5L392.3 152.4L403.3 147.2L417.3 141L433.2 134.3L452.8 126.4ZM652.3 179L679.1 168.6L679.9 168.7L653.4 179L634.4 186.8L619.9 193.2L608.5 199.1L604.2 201.6L600.1 204.4L596.7 207L593.8 209.7L591.7 212.2L589.9 214.9L588.7 217.7L588 220.2L587.8 222.6L588 224.9L588.4 227.4L589.3 230.1L591.8 235.5L595.7 241.6L601.8 249.3L610 258.5L621.1 269.9L636.3 284.8L635 285.9L620.1 271.3L609.4 260.4L601.3 251.5L595.1 243.9L590.4 237L588.7 234L587.5 231.1L586.5 228.2L586 225.7L585.8 223.1L586 220.7L586.5 218.5L587.5 215.9L588.9 213.6L590.7 211.2L592.9 209L595.4 206.7L601.8 202.2L610.1 197.4L621.2 192L634.7 186.1Z"/>
<path fill="#ff3300" stroke="#ff3300" d="M485 113L583.9 74.9L583.9 75.7L486.1 113.3L457.5 124.5L435 133.6L418.1 140.7L404.1 146.8L392.3 152.4L382.5 157.5L372.9 163.1L365.6 168.3L362.5 170.9L359.6 173.5L357.3 176.1L355.4 178.6L353.9 181.1L352.6 183.8L351.7 186.6L351.2 189.2L351 192.1L351.2 195L351.7 198.1L352.6 201.3L351.7 198.3L351.2 195.8L350.8 193.1L350.8 190.7L351 188.3L351.4 186L352.1 183.7L353.1 181.4L355.8 177.1L359.7 172.6L364.8 168.1L371 163.6L378 159.3L386.9 154.4L397.4 149.2L409.3 143.7L423.3 137.7L439.8 130.9ZM661.7 175.7L679.9 168.7L680.7 168.9L654.8 178.9L636.4 186.4L622.4 192.7L611.4 198.2L607 200.8L602.9 203.5L599.5 206L596.7 208.5L594.2 211.1L592.5 213.6L591.2 216.1L590.3 218.8L589.9 221.2L589.9 223.6L590.3 226.1L590.9 228.5L591.8 231.2L593.3 234.1L597.2 240.5L603.1 248.2L611.3 257.4L622.2 268.6L637.6 283.7L636.3 284.8L621.4 270.2L610.5 259L602.4 250.1L596.3 242.4L593.7 238.7L591.8 235.5L590.2 232.4L589.1 229.5L588.3 226.8L587.9 224L587.9 221.6L588.3 219.2L589 216.7L590.2 214.3L591.7 212.2L593.8 209.7L596.3 207.3L599.2 205L606.6 200.2L615.6 195.3L627.6 189.7L642.6 183.3Z"/>
<path fill="#ff2c00" stroke="#ff2c00" d="M573.9 78L583.8 74.2L583.9 74.9L485 113L434.5 133.1L417.6 140.1L403.2 146.5L391.2 152.2L381.6 157.2L372.3 162.7L365 167.9L361.9 170.5L359.2 173.1L356.9 175.7L355 178.3L353.4 180.9L352.3 183.4L351.4 186.1L350.9 189L350.8 191.7L351 194.6L351.5 197.6L352.4 200.7L351.4 197.4L350.8 194.4L350.6 191.5L350.7 188.7L351.1 185.9L351.8 183.3L353 180.5L354.5 177.9L356.5 175.2L358.8 172.7L361.4 170.1L364.5 167.5L371.6 162.4L381.1 156.7L391.4 151.3L403.9 145.4L418.7 138.9L436.6 131.4L484.9 112.3ZM645.9 182.5L680.7 168.9L681.5 169L655.6 179.1L636.6 186.9L622.2 193.4L611.4 199.1L607 201.7L603.1 204.5L599.8 207.2L597.1 209.9L594.9 212.6L593.4 215.3L592.4 218.1L592 220.8L591.9 223.2L592.2 225.4L592.8 227.8L593.6 230.2L596.3 235.5L600.1 241.4L606 248.8L614 257.7L624.4 268.4L638.9 282.6L637.6 283.7L623.6 270L613.4 259.6L605.5 250.9L599.5 243.6L594.9 237L593.2 234L591.8 231.2L590.9 228.5L590.3 226.1L589.9 223.6L589.9 221.2L590.3 218.8L591 216.6L592 214.4L593.4 212.2L595.3 210L597.5 207.8L602.9 203.5L610.4 198.8L619.7 194L631.2 188.6Z"/>
<path fill="#ff2500" stroke="#ff2500" d="M509.4 102.1L583.7 73.5L583.8 74.2L485.4 112.1L434.8 132.2L417.9 139.2L404.2 145.3L392.8 150.7L382.6 155.9L373 161.5L365.4 166.8L362.2 169.4L359.4 172L357 174.6L355.1 177.1L353.5 179.7L352.3 182.2L351.3 184.9L350.8 187.7L350.6 190.5L350.7 193.6L351.2 196.5L352.1 199.8L351.3 196.9L350.7 194.1L350.4 191.6L350.4 188.9L350.6 186.5L351.2 183.9L352 181.6L353.2 179.2L356.2 174.7L360.7 170L366.7 165L373.7 160.3L381.9 155.5L391.7 150.5L403.4 144.9L417.4 138.7L433.4 132L453.4 123.9ZM651.3 180.8L681.5 169L682.3 169.2L657.1 179L638.6 186.6L624.7 192.9L613.8 198.5L609.3 201.2L605.4 203.9L602.1 206.6L599.4 209.2L597.5 211.6L595.8 214.3L594.7 216.8L594.1 219.7L594 222.1L594.2 224.4L594.6 226.6L595.4 229.2L598 234.6L601.7 240.3L607.6 247.9L615.4 256.6L625.7 267.3L640.1 281.5L638.9 282.6L624.9 268.9L614.7 258.5L606.9 249.8L600.9 242.4L596.5 236L594.9 233L593.6 230.2L592.7 227.4L592.1 224.8L591.9 222.5L592 220.1L592.6 217.6L593.4 215.4L594.6 213.2L596.2 210.9L598 208.8L600.5 206.6L606.2 202.3L613.9 197.7L623.6 192.7L636.1 187.1Z"/>
<path fill="#ff1e00" stroke="#ff1e00" d="M486.5 110.2L583.6 72.9L583.7 73.5L485.8 111.2L434.7 131.5L417.8 138.5L403.8 144.7L392 150.3L382.2 155.3L372.6 161L365 166.3L361.9 168.9L359.1 171.5L356.7 174.1L354.8 176.6L353.2 179.2L352 181.7L351.1 184.4L350.5 187.2L350.4 189.9L350.5 192.9L351 195.8L351.9 199L351.1 196.4L350.5 193.6L350.2 188.7L350.4 186.3L350.8 183.9L351.6 181.5L352.6 179.3L355.3 175L359.1 170.6L364.4 165.9L370.6 161.5L377.9 157L386.9 152.1L397.1 147.1L409.4 141.5L423.5 135.4L440 128.6ZM657.9 178.6L682.3 169.2L683.1 169.4L658.5 178.9L640.6 186.3L626.6 192.6L616.2 198L611.9 200.6L608.2 203L604.8 205.7L602.1 208.2L600 210.6L598.3 213.2L596.9 216L596.3 218.6L596 221L596.1 223.2L596.5 225.5L597.1 228L598.2 230.6L599.5 233.4L603.2 239.3L609 246.8L616.9 255.7L627.3 266.5L641.4 280.4L640.1 281.5L626.4 268L616.3 257.6L608.4 248.9L602.5 241.5L598.1 234.9L596.6 232L595.4 229.2L594.6 226.5L594.1 224L594 221.4L594.2 219L594.7 216.8L595.7 214.4L597 212.3L598.8 209.9L600.9 207.7L603.4 205.5L606.3 203.3L609.9 200.8L617.8 196.3L628.5 191.1L641.5 185.3Z"/>
<path fill="#ff1700" stroke="#ff1700" d="M472.5 115L583.5 72.2L583.6 72.9L486.3 110.3L435.1 130.6L417.7 137.9L404.1 143.9L392.3 149.4L382.1 154.6L372.9 160L365.2 165.4L362 167.9L359.1 170.7L356.7 173.2L354.7 175.8L353.1 178.4L351.8 181.1L350.9 183.8L350.3 186.5L350.1 189.4L350.3 192.2L350.8 195.2L351.7 198.4L350.8 195.6L350.3 193.1L349.9 188.3L350.1 186L350.5 183.6L352 179.4L354.5 175.1L358.2 170.7L362.8 166.5L368.7 162.1L375.2 157.8L383.3 153.3L392.5 148.6L403.8 143.3L416.4 137.7L432 131.2ZM667.4 175.4L683.1 169.4L683.9 169.5L660.5 178.6L643.2 185.7L629.7 191.8L619.2 197.2L611 202.2L607.6 204.8L604.8 207.3L602.6 209.6L600.8 212.1L599.5 214.5L598.6 217.2L598.2 219.3L598.1 221.7L598.3 224.2L598.9 226.8L599.8 229.3L601.1 232.2L604.7 238.1L610.3 245.6L618 254.4L628.3 265.1L642.7 279.3L641.4 280.4L627.5 266.7L617.4 256.2L609.6 247.5L603.8 240.1L599.7 233.7L598.2 230.6L597.1 227.7L596.3 224.9L596 222.4L596.1 220L596.5 217.5L597.3 215.1L598.5 212.8L600.1 210.5L602.1 208.2L604.4 206L607.3 203.7L614.3 199.1L622.9 194.4L634.3 189L648.8 182.8Z"/>
<path fill="#ff1000" stroke="#ff1000" d="M517.7 96.8L583.5 71.5L583.5 72.2L485.2 110L434.6 130.1L417.7 137.2L403.8 143.3L392.2 148.7L382.2 153.9L372.4 159.6L364.8 164.8L361.7 167.4L358.8 170L356.5 172.6L354.5 175.1L352.9 177.7L351.7 180.2L350.7 182.9L350.1 185.8L349.9 188.6L350.1 191.5L350.6 194.5L351.4 197.7L350.6 194.7L350 191.9L349.8 189.4L349.8 186.7L350.1 184.2L350.7 181.7L351.6 179.3L352.8 176.9L354.2 174.7L356 172.3L358.3 169.8L360.7 167.5L366.9 162.5L374.4 157.6L383.2 152.6L393.5 147.4L405.8 141.7L419.9 135.5L457.5 120.2ZM653 181.7L683.9 169.5L684.7 169.7L660.7 179.1L642.9 186.5L629.5 192.6L619.1 198.1L614.8 200.7L610.9 203.5L607.9 206L605.3 208.6L603.3 211.1L601.8 213.6L600.7 216.4L600.2 218.9L600.1 221L600.3 223.3L600.8 225.7L601.5 228.1L603.9 233.2L607.6 239.1L613.2 246.3L620.7 254.8L630.6 265L644 278.2L642.7 279.3L629.5 266.3L619.8 256.4L612.5 248.2L606.7 241L602.5 234.7L601 231.9L599.7 229L598.8 226.4L598.3 224L598.1 221.7L598.2 219.3L598.6 217.1L599.3 214.8L600.5 212.6L602 210.4L603.7 208.4L605.9 206.2L611.5 201.9L618.7 197.5L627.5 192.8L638.6 187.7Z"/>
<path fill="#ff0900" stroke="#ff0900" d="M491.7 106.2L583.4 70.9L583.5 71.5L485.6 109.2L434.5 129.4L417.6 136.5L403.5 142.7L391.4 148.4L381.7 153.4L371.8 159.2L364.3 164.5L361.1 167.1L358.3 169.7L356 172.3L354.2 174.7L352.6 177.3L351.3 179.9L350.4 182.6L349.9 185.3L349.7 188L349.9 191L350.4 194L351.2 197L350.4 194.2L349.8 191.5L349.6 188.9L349.6 186.5L349.8 184.1L350.4 181.6L351.2 179.2L352.2 177.1L354.9 172.8L359 168.2L364.4 163.7L371.1 159L378.7 154.4L387.4 149.7L398 144.6L410.8 138.8L425.8 132.4L442.9 125.3ZM658.6 179.9L684.7 169.7L685.5 169.9L662.2 179L644.9 186.2L632 192.1L621.6 197.6L617.2 200.2L613.6 202.7L610.6 205.1L607.8 207.8L605.8 210.2L604.1 212.8L603 215.4L602.4 218.2L602.2 220.3L602.3 222.5L602.7 225L603.5 227.4L605.8 232.6L609.3 238.2L614.8 245.4L622.3 253.9L632.1 264.2L645.2 277.1L644 278.2L631 265.5L621.4 255.5L614 247.3L608.4 240.1L604.2 233.7L602.7 231L601.5 228.1L600.7 225.4L600.2 222.9L600.1 220.6L600.3 218.3L600.9 216L601.7 213.9L603 211.6L604.6 209.4L606.7 207.1L609.1 204.9L614.8 200.7L622.1 196.4L631.6 191.5L643.4 186.2Z"/>
<path fill="#ff0300" stroke="#ff0300" d="M476.6 111.3L583.3 70.2L583.4 70.9L486.1 108.3L434.9 128.6L417.5 135.9L403.8 141.9L392 147.4L381.9 152.6L372.4 158.1L364.7 163.4L361.6 165.9L358.6 168.7L356.2 171.2L354.2 173.7L352.6 176.4L351.3 179L350.4 181.6L349.8 184.4L349.5 187.2L349.7 190.2L350.2 193.2L351 196.3L350.2 193.7L349.7 191.2L349.4 188.7L349.4 186.3L349.6 184L350 181.7L350.7 179.5L351.7 177.1L354.3 172.8L358.1 168.3L362.9 164.1L369 159.6L376.1 155.2L384 150.8L394 145.8L405.3 140.5L418.2 134.9L433.9 128.3ZM665.5 177.7L685.5 169.9L686.3 170.1L664.2 178.8L647.3 185.8L633.9 191.8L624 197.1L619.6 199.7L616 202.2L613 204.6L610.2 207.1L608.1 209.5L606.5 212L605.3 214.5L604.6 217L604.3 219.2L604.3 221.5L604.6 223.8L605.2 226.2L606.2 228.8L607.4 231.4L610.9 237.4L616.4 244.6L623.6 252.8L633.4 263.1L646.5 276.1L645.2 277.1L632.3 264.4L622.9 254.7L615.6 246.5L610 239.3L606.1 233.1L604.6 230.3L603.5 227.4L602.7 224.7L602.3 222.2L602.2 219.9L602.5 217.5L603.1 215.2L604.1 212.8L605.5 210.7L607.2 208.5L609.4 206.2L611.9 204.1L618.2 199.6L626.1 195L636.4 190L648.9 184.5Z"/>
<path fill="#ff0000" stroke="#ff0000" d="M540.2 86.1L583.3 69.6L583.3 70.2L485 108.1L434.3 128.2L417.4 135.2L403.7 141.2L391.9 146.8L381.8 152L371.9 157.7L364.3 163L361.1 165.5L358.3 168.2L355.9 170.7L354 173.3L352.3 175.9L351 178.5L350.1 181.2L349.6 184L349.4 186.7L349.5 189.7L350 192.8L350.8 195.8L349.9 192.7L349.4 189.9L349.2 187.2L349.3 184.4L349.7 181.7L350.4 179.2L351.4 176.7L352.8 174.2L354.5 171.7L356.5 169.3L358.9 166.8L361.7 164.3L368.6 159.2L376.9 154L386.2 149L397.8 143.3L411.4 137.2L426.9 130.6L468.5 113.8ZM675.5 174.3L686.3 170.1L687.1 170.4L665.6 178.7L649.4 185.4L636.5 191.3L626.8 196.4L622.5 198.9L618.8 201.4L615.7 203.7L613.3 205.9L611.1 208.2L609.2 210.7L607.9 213.1L606.9 215.7L606.5 217.8L606.3 220.2L606.5 222.6L607 225L607.8 227.4L609 230.2L612.3 236L617.6 243.2L624.9 251.8L634.7 262L647.8 275L646.5 276.1L633.6 263.3L624 253.3L616.8 245.1L611.3 237.9L607.5 231.7L606 228.5L605.1 225.9L604.5 223.1L604.3 220.6L604.4 218.2L604.9 215.8L605.6 213.7L606.9 211.3L608.5 209.1L610.6 206.8L613 204.5L616 202.2L623 197.6L631.8 192.9L643.4 187.5L657.5 181.5Z"/>
<path fill="#ff0000" stroke="#ff0000" d="M502.8 99.9L583.2 69L583.3 69.6L485.4 107.3L434.3 127.5L417.4 134.6L402.9 140.9L391.2 146.5L381.4 151.5L371.5 157.3L364 162.5L360.8 165.1L358 167.7L355.7 170.3L353.8 172.7L352.1 175.3L350.9 177.9L349.9 180.6L349.4 183.3L349.2 186.2L349.3 188.9L349.8 192L350.6 195L349.8 192.1L349.3 189.5L349 186.9L349 184.4L349.3 181.9L349.9 179.5L350.8 177.1L351.9 174.8L353.3 172.5L355 170.2L359.3 165.7L365 161L372 156.3L380.3 151.4L390 146.4L401 141.1L414.5 135.2L429.8 128.7L449.2 120.9ZM660.7 180.7L687.1 170.4L687.9 170.6L665.8 179.2L649.7 186L636.8 191.9L626.9 197.2L623.1 199.6L619.4 202.2L616.5 204.6L613.8 207.2L611.8 209.7L610.3 212.2L609.1 214.9L608.5 217.6L608.4 219.6L608.5 221.8L608.9 224L609.6 226.4L611.8 231.5L615.2 237L620.4 243.9L627.4 252L636.7 261.7L649.1 274L647.8 275L635.7 263L626.5 253.5L619.5 245.5L614.2 238.9L610.3 232.7L607.8 227.4L607 225L606.5 222.5L606.3 220.2L606.5 217.8L606.9 215.7L607.8 213.3L608.9 211.2L610.4 209L612.2 207L614.5 204.8L619.7 200.8L627 196.3L635.9 191.6L647.1 186.5Z"/>
<path fill="#f90000" stroke="#f90000" d="M484.5 106.4L583.1 68.4L583.2 69L485.9 106.4L434.6 126.7L417.7 133.8L403.2 140.1L391.4 145.7L381.3 150.9L372 156.3L364.1 161.7L360.9 164.2L358 166.9L355.6 169.5L353.6 172L352 174.6L350.7 177.4L349.8 180L349.2 182.6L349 185.4L349.1 188.4L349.6 191.5L350.4 194.5L349.6 191.6L349.1 189.1L348.8 186.6L348.8 184.3L349.1 181.8L349.5 179.6L350.3 177.4L351.3 175L354.1 170.6L358.2 166L363.1 161.8L369.5 157.2L377 152.6L385.7 147.9L395.9 142.9L408.1 137.3L422.1 131.3L438.6 124.5ZM666.3 179.1L687.9 170.6L688.7 170.8L667.9 179L651.7 185.7L639.3 191.5L629.4 196.7L625.5 199.1L621.8 201.7L618.8 204.1L616.1 206.7L614 209.2L612.6 211.4L611.4 214L610.7 216.4L610.5 218.5L610.5 220.9L610.8 223.1L611.4 225.5L613.4 230.4L616.8 236.1L622 243.1L629 251.1L638 260.7L650.4 273L649.1 274L637.2 262.2L628.1 252.7L621.1 244.7L615.9 238L612 231.8L610.6 229L609.6 226.5L608.9 224L608.5 221.5L608.4 219.2L608.6 216.9L609.2 214.6L610.1 212.5L611.4 210.2L613 208.1L614.9 206L617.3 203.9L623.1 199.6L630.5 195.2L640.1 190.3L651.5 185.2Z"/>
<path fill="#f30000" stroke="#f30000" d="M472.4 110.4L583.1 67.8L583.1 68.4L485.3 106L435 125.9L418 133L403.9 139.2L392 144.7L381.6 150.1L371.6 155.8L364 161.1L360.7 163.7L358 166.2L355.6 168.7L353.5 171.4L351.9 174L350.6 176.6L349.6 179.3L349.1 181.9L348.8 184.7L348.9 187.6L349.4 190.7L350.2 193.8L349.4 191.2L348.9 188.7L348.7 186.1L348.7 183.8L348.9 181.4L349.3 179.2L350.9 174.9L353.5 170.6L357.1 166.4L361.8 162.1L367.6 157.8L374.6 153.3L382.7 148.8L392 144.1L403.1 138.9L415.9 133.3L431.7 126.7ZM672.8 177L688.7 170.8L689.5 171.1L669.3 179L653.7 185.5L641.3 191.2L631.8 196.3L627.8 198.7L624.2 201.2L621.2 203.6L618.7 205.8L616.6 208.2L615 210.6L613.7 213.1L612.9 215.6L612.6 217.5L612.5 219.9L612.7 222.1L613.3 224.7L615.3 229.8L618.5 235.3L623.6 242.3L630.5 250.4L639.5 259.9L651.6 272L650.4 273L638.5 261.2L629.4 251.6L622.4 243.6L617.4 236.9L613.7 231L612.4 228.1L611.4 225.5L610.7 222.8L610.5 220.3L610.5 218.2L610.9 215.7L611.6 213.4L612.8 211L614.4 208.7L616.1 206.7L620.5 202.7L626.9 198.2L635 193.6L644.9 188.8L657 183.5Z"/>
<path fill="#ed0000" stroke="#ed0000" d="M528.1 88.3L583 67.2L583.1 67.8L484.7 105.7L434.1 125.7L416.7 132.9L402.7 139.1L391.1 144.5L380.9 149.8L371 155.6L363.5 160.8L360.3 163.3L357.5 166L355.2 168.5L353.3 171L351.6 173.5L350.4 176.1L349.4 178.8L348.9 181.5L348.6 184.3L348.7 187.1L349.2 190.1L350 193.3L349.2 190.1L348.7 187.3L348.5 184.7L348.6 182L349 179.5L349.7 176.9L350.7 174.5L352 172L353.6 169.7L355.6 167.3L358 164.8L360.7 162.4L366.9 157.6L374.8 152.6L383.6 147.7L394.3 142.4L406.8 136.6L422.4 129.9L462.4 113.8ZM681.7 174.1L689.5 171.1L690.3 171.3L670.7 179L655.7 185.3L643.8 190.8L634.3 195.8L627 200.4L624 202.7L621.5 205L619.3 207.3L617.6 209.4L616.3 211.8L615.2 214.3L614.7 216.5L614.6 218.9L614.7 221.2L615.1 223.4L615.8 225.8L616.8 228.4L620 234.2L625 241.3L631.8 249.3L640.8 258.9L652.9 270.9L651.6 272L639.8 260.1L630.7 250.6L623.8 242.6L618.8 235.8L615.3 229.8L614.1 227L613.2 224.3L612.7 221.8L612.5 219.2L612.7 216.8L613.2 214.5L614.1 212.3L615.4 210L616.9 207.9L618.8 205.8L621.2 203.6L623.7 201.5L630.8 196.8L639.7 192.1L650.3 187.1L663.8 181.2Z"/>
<path fill="#e70000" stroke="#e70000" d="M499.2 98.8L582.9 66.7L583 67.2L485.1 104.9L434 125.1L417.1 132.2L402.7 138.5L390.5 144.2L380.8 149.2L371.5 154.6L363.6 160L360.4 162.6L357.6 165.2L355.1 167.8L353.1 170.3L351.5 172.9L350.2 175.6L349.3 178.3L348.7 180.9L348.5 183.7L348.6 186.6L349.1 189.7L349.9 192.7L349.1 189.9L348.5 187.1L348.3 184.6L348.3 182.1L348.7 179.7L349.3 177.2L350.1 174.9L351.3 172.5L352.7 170.2L354.5 167.9L358.7 163.4L364.4 158.7L371.3 154.1L379.5 149.3L388.8 144.5L399.9 139.1L413 133.3L428.3 126.9L447.1 119.3ZM667.7 180.3L690.3 171.3L691.1 171.6L670.9 179.6L655.4 186.1L643.6 191.7L634.2 196.8L630.4 199.3L627.2 201.6L624.2 204L621.9 206.3L619.9 208.9L618.5 211.2L617.4 213.6L616.8 216.2L616.6 218.3L616.7 220.5L617.6 224.9L619.6 229.8L622.7 235L627.6 241.8L634.1 249.3L642.8 258.6L654.2 270L652.9 270.9L641.8 259.9L633.4 251.1L626.9 243.6L621.7 236.9L618.1 231L615.8 225.8L615.1 223.4L614.7 220.9L614.6 218.6L614.8 216.2L615.4 213.9L616.3 211.8L617.3 209.9L618.9 207.7L620.9 205.5L623.1 203.4L628.4 199.4L635.3 195.2L643.8 190.8L654.6 185.8Z"/>
<path fill="#e10000" stroke="#e10000" d="M483.3 104.4L582.9 66.1L582.9 66.7L485.6 104.1L434.8 124.2L417.4 131.4L403.3 137.6L391.5 143.1L381 148.5L371.3 154.1L363.5 159.4L360.4 161.9L357.5 164.6L355.1 167.1L353 169.7L351.4 172.3L350.1 174.9L349.1 177.6L348.6 180.2L348.3 183L348.4 185.9L348.8 188.7L349.6 191.9L348.9 189.2L348.4 186.7L348.2 184.1L348.2 181.8L348.5 179.3L349 177.1L349.7 174.9L350.8 172.6L353.7 168.1L357.5 163.9L362.5 159.6L368.9 155L376.4 150.4L385.1 145.7L395.3 140.7L407.5 135.2L421.5 129.1L437.9 122.4ZM672.5 178.9L691.1 171.6L691.9 171.8L672.3 179.6L657.4 185.9L645.6 191.5L636.7 196.3L629.6 201.1L626.6 203.5L624.3 205.8L622.2 208.3L620.7 210.6L619.6 213L618.9 215.6L618.7 217.5L618.7 219.7L619 221.9L619.5 224.1L621.4 229L624.5 234.5L629.2 241L635.8 248.8L644.4 257.9L655.4 269L654.2 270L643.1 258.9L634.7 250L628.3 242.5L623.4 236L619.8 230.1L617.6 224.9L617 222.5L616.6 220L616.6 217.6L616.9 215.6L617.6 213.3L618.5 211.3L619.6 209.3L621.2 207.1L623.1 205.2L625.5 202.9L631.2 198.7L638.3 194.5L647.5 189.8L658.3 184.8Z"/>
<path fill="#db0000" stroke="#db0000" d="M472.4 108.1L582.8 65.6L582.9 66.1L485 103.7L434.3 123.8L417.4 130.9L403.3 137L391.4 142.6L380.9 147.9L371.3 153.5L363.7 158.7L360.3 161.4L357.5 163.9L355 166.5L353.1 168.9L351.3 171.6L350 174.1L349.1 176.8L348.4 179.6L348.1 182.5L348.2 185.4L348.7 188.3L349.4 191.3L348.7 188.8L348.2 186.3L348 183.8L348 181.4L348.3 179L348.8 176.7L350.4 172.4L353.1 168.1L356.7 164L361.5 159.7L367.5 155.3L374.6 150.9L382.4 146.5L392 141.7L403.2 136.5L416.1 130.8L431.2 124.5ZM677.7 177.4L691.9 171.8L692.7 172.1L673.8 179.6L659.4 185.7L648.1 191L639.2 195.9L632 200.6L629 203L626.6 205.3L624.6 207.6L623.1 209.8L621.9 212.1L621.1 214.6L620.8 216.7L620.7 218.8L620.9 221L621.3 223.3L623.1 228.2L626.2 233.7L630.8 240.2L637.2 247.8L645.6 256.9L656.7 268L655.4 269L644.6 258.1L636.3 249.3L629.8 241.7L625.1 235.4L621.7 229.5L620.4 226.7L619.5 224.1L618.9 221.6L618.7 219.4L618.7 217L619.1 214.9L619.8 212.7L620.8 210.5L622.2 208.3L623.9 206.2L628.3 202.1L634.2 197.9L641.8 193.4L651.1 188.8L662.7 183.6Z"/>
<path fill="#d60000" stroke="#d60000" d="M535.3 83.2L582.8 65L582.8 65.6L485 103.2L434.3 123.3L416.9 130.5L402.5 136.8L390.5 142.4L380.6 147.5L371 153.1L363.3 158.3L360.2 160.8L357.2 163.5L354.8 166.1L352.8 168.5L351.1 171.2L349.8 173.8L348.9 176.4L348.2 179.2L348 182L348.1 185L348.5 187.8L349.3 190.9L348.5 187.7L348 185L347.8 182.3L348 179.6L348.4 177.1L349.2 174.4L350.2 172L351.7 169.5L353.3 167.1L355.4 164.7L358 162.1L360.8 159.7L367.4 154.8L375.4 149.8L384.6 144.8L395.8 139.3L408.9 133.4L424.7 126.7L465.6 110.2ZM683.4 175.8L692.7 172.1L693.5 172.4L675.2 179.7L661.4 185.5L650.1 190.9L641.1 195.7L633.9 200.5L631.3 202.5L628.9 204.8L627.1 206.8L625.4 209.1L624.1 211.5L623.3 213.7L622.9 215.8L622.7 217.8L622.8 220.1L623.2 222.4L623.8 224.7L624.9 227.4L627.6 232.6L632.2 239.2L638.5 246.8L646.9 255.9L657.9 267.1L656.7 268L646.1 257.4L637.8 248.5L631.4 241L626.7 234.5L623.4 228.7L622.2 225.9L621.3 223.3L620.8 220.7L620.7 218.4L620.8 216.2L621.3 213.8L622.2 211.6L623.2 209.6L624.8 207.4L626.6 205.3L629 203L631.5 200.9L637.7 196.8L645.4 192.4L655.4 187.6L667.7 182.2Z"/>
<path fill="#d00000" stroke="#d00000" d="M504.4 94.6L582.7 64.5L582.8 65L484.9 102.7L434.2 122.7L417.2 129.8L402.8 136.1L390.6 141.8L380.5 147L371.2 152.4L363.3 157.7L360.1 160.3L357 163L354.5 165.7L352.6 168.1L350.9 170.7L349.7 173.2L348.7 175.9L348.1 178.6L347.8 181.4L347.9 184.2L348.3 187.1L349.1 190.3L348.3 187.4L347.9 184.7L347.7 182.2L347.8 179.5L348.2 177L348.8 174.7L349.7 172.4L351 170L352.4 167.7L354.3 165.3L358.8 160.8L364.6 156.1L371.6 151.5L379.8 146.8L389.5 141.8L400.9 136.4L414.7 130.3L430.6 123.6L450.1 115.8ZM690 173.8L693.5 172.4L694.2 172.7L676 180L662.2 185.9L651.1 191.2L642.6 195.9L636.3 200L633.7 202.1L631.2 204.3L629.4 206.3L627.7 208.4L626.6 210.4L625.6 212.6L625 214.8L624.7 216.9L624.7 219L625 221.5L625.6 223.9L626.6 226.6L629.3 231.9L633.8 238.5L640 246.1L648.2 255L659.2 266.1L657.9 267.1L647.1 256.2L638.9 247.3L632.8 240L628.2 233.4L625 227.6L623.9 225L623.2 222.3L622.8 219.8L622.7 217.5L623 215.1L623.6 212.8L624.5 210.8L625.8 208.6L627.4 206.4L629.4 204.3L634.4 200.1L641.1 195.7L649.5 191.1L660.2 186.1L673.3 180.4Z"/>
<path fill="#cb0000" stroke="#cb0000" d="M487.8 100.5L582.7 64L582.7 64.5L485.4 101.9L434.6 122L417.2 129.3L403.1 135.4L391.2 140.9L380.7 146.3L370.8 152L363.2 157.2L357.2 162.2L354.7 164.9L352.6 167.4L351 170L349.6 172.6L348.6 175.2L348 178L347.7 180.9L347.8 183.8L348.2 186.7L349 189.7L348.2 187.1L347.8 184.4L347.6 179.6L347.9 177.4L348.4 174.9L349.3 172.5L350.3 170.4L353.2 166L357.5 161.4L362.6 157L369.1 152.5L376.5 148L385.5 143.3L396.1 138.1L408.5 132.5L422.9 126.3L439.9 119.4ZM676.1 179.9L694.2 172.7L695 173L676.8 180.3L663.1 186.2L652.4 191.4L643.6 196.3L636.9 200.9L634.3 203L632 205.4L630.1 207.8L628.7 209.9L627.6 212.4L627 214.8L626.7 216.8L626.7 219L627.5 223.1L629.2 227.8L632.1 233L636.6 239.3L642.4 246.4L650.1 254.8L660.4 265.2L659.2 266.1L649.1 256L641.6 247.8L635.6 240.8L631 234.5L627.8 229.1L626.6 226.6L625.6 223.9L625.1 221.5L624.7 219.3L624.7 216.9L625 214.9L625.6 212.6L626.5 210.6L627.7 208.5L629 206.7L632.8 202.8L638.2 198.7L644.6 194.7L653.1 190.1L663.4 185.4Z"/>
<path fill="#c60000" stroke="#c60000" d="M476.6 104.3L582.6 63.5L582.7 64L485.8 101.2L434.5 121.5L417.1 128.8L403 134.9L391.1 140.5L380.5 145.9L370.7 151.5L363.1 156.7L359.7 159.4L357 161.9L354.5 164.5L352.5 166.9L350.8 169.6L349.5 172.1L348.5 174.8L347.8 177.4L347.6 180.2L347.6 183.1L348.1 186.3L348.8 189.3L348.1 186.5L347.6 184.1L347.4 179.4L347.7 177.1L348.2 174.8L349.9 170.5L352.6 166.1L356.4 161.8L361.4 157.4L367.3 153.1L374.3 148.8L382.5 144.3L392.5 139.3L404.1 133.9L417.5 128.1L433.2 121.6ZM679.4 179.2L695 173L695.8 173.3L678.8 180.1L665 186.1L654.3 191.2L645.9 195.9L639.3 200.4L636.7 202.5L634.3 204.9L632.4 207.1L631 209.3L629.8 211.8L629.1 214.2L628.7 216.2L628.7 218.3L628.9 220.4L629.3 222.6L631 227.1L633.7 232.3L638.1 238.6L643.9 245.7L651.6 254.1L661.6 264.3L660.4 265.2L650.6 255.3L643.1 247.1L637.2 240.1L632.6 233.8L629.5 228.3L627.5 223.4L627 221L626.7 218.7L626.8 216.4L627.1 214.2L627.8 212L628.7 209.9L630 207.9L631.6 205.9L635.6 201.9L641 197.9L647.6 193.9L656.2 189.4L666.6 184.7Z"/>
<path fill="#c10000" stroke="#c10000" d="M468.2 107.1L582.6 63L582.6 63.5L484.7 101.1L434 121.2L416.3 128.6L401.9 134.9L390.2 140.4L380 145.6L370.4 151.1L362.8 156.3L359.4 159L356.7 161.5L354.2 164.1L352.3 166.5L350.6 169.2L349.3 171.7L348.3 174.3L347.7 177L347.4 179.7L347.5 182.7L347.9 185.6L348.6 188.7L347.9 186.1L347.5 183.6L347.3 179L347.6 176.6L348 174.4L349.7 170.1L352.4 165.8L355.9 161.7L360.4 157.7L366.1 153.4L372.8 149.1L380.9 144.6L390 139.9L401.1 134.8L413.8 129.2L428.8 122.9ZM682.4 178.6L695.8 173.3L696.5 173.6L679.6 180.4L666.4 186.1L656.3 191L647.9 195.7L641.2 200.3L636.5 204.4L634.8 206.4L633.2 208.7L631.9 211.2L631.1 213.5L630.8 215.4L630.6 217.5L630.8 219.6L631.1 221.8L632.7 226.5L635.3 231.5L639.7 237.9L645.4 245L652.9 253.2L662.8 263.4L661.6 264.3L652.1 254.6L644.6 246.4L638.7 239.4L634.4 233.3L631.2 227.6L629.3 222.6L628.9 220.4L628.7 218.2L628.8 215.8L629.2 213.7L629.8 211.8L630.7 209.7L632.1 207.5L633.6 205.6L635.6 203.5L638 201.5L643.5 197.4L650.6 193.2L658.7 189L669.1 184.2Z"/>
<path fill="#bc0000" stroke="#bc0000" d="M523.9 85L582.5 62.5L582.6 63L485.2 100.5L434.4 120.5L417 127.8L402.5 134.1L390.4 139.8L380.2 144.9L370.8 150.4L362.9 155.7L359.6 158.3L356.5 161.1L354 163.8L352.1 166.2L350.4 168.8L349.1 171.3L348.1 174L347.6 176.6L347.3 179.4L347.3 182.3L347.7 185.2L348.5 188.2L347.8 185.4L347.3 182.6L347.1 180L347.3 177.4L347.7 174.8L348.3 172.5L349.3 170.2L350.7 167.6L352.3 165.3L354.2 162.9L356.6 160.4L359.3 158L365.5 153.3L373.3 148.3L382.4 143.3L392.7 138.1L405.1 132.4L420.2 125.9L459.9 109.9ZM685.2 178.1L696.5 173.6L697.3 173.9L681 180.5L668.4 186L658.2 190.9L649.7 195.6L643.1 200.1L638.5 204.2L636.7 206.3L635.1 208.6L633.9 211L633.1 213.3L632.7 215.3L632.6 217.5L633.1 221.7L634.5 226.1L637.1 231.1L641.2 237.2L646.9 244.4L654.3 252.5L664 262.5L662.8 263.4L653.3 253.7L646.1 245.8L640.4 238.9L636.2 232.9L633.1 227.4L632 224.8L631.3 222.4L630.8 219.9L630.6 217.7L630.7 215.6L631.1 213.5L631.8 211.6L632.7 209.6L634.1 207.4L635.6 205.4L639.9 201.3L645.4 197.3L652.5 193L661.3 188.6L671.7 183.8Z"/>
<path fill="#b70000" stroke="#b70000" d="M501.1 93.4L582.5 62.1L582.5 62.5L485.2 100L434.4 120.1L417.4 127.1L402.5 133.6L390.3 139.3L380.2 144.5L370.4 150.1L362.7 155.3L359.3 158L356.6 160.4L354.2 163L352.1 165.5L350.4 168.1L349 170.9L348 173.5L347.4 176.2L347.1 179L347.2 182L347.6 184.8L348.4 187.9L347.6 185.1L347.2 182.4L347 180L347.1 177.3L347.5 174.8L348.1 172.5L349 170.2L350.2 167.7L351.7 165.5L353.5 163.2L357.8 158.8L363.3 154.3L370.5 149.5L378.3 145L388 140L399.1 134.7L412.9 128.6L428.6 121.9L447.5 114.3ZM687.5 177.8L697.3 173.9L698 174.2L682.3 180.6L669.8 186.1L659.6 191L651.7 195.4L645 200L640.4 204.1L638.6 206.2L637.1 208.4L635.9 210.5L635.1 212.8L634.7 214.6L634.5 216.7L634.6 219L634.9 221.2L636.3 225.7L638.9 230.7L642.9 236.8L648.4 243.7L655.8 251.9L665.2 261.6L664 262.5L654.8 253L647.6 245.1L642 238.3L637.8 232.2L634.8 226.7L633.8 224.1L633.1 221.7L632.7 219.5L632.6 217.2L632.7 215.1L633.2 212.9L633.9 211L634.9 209L636.4 206.8L638 204.8L642.2 200.8L647.8 196.8L655 192.6L663.8 188.1L674.3 183.4Z"/>
<path fill="#b30000" stroke="#b30000" d="M487.2 98.3L582.4 61.6L582.5 62.1L485.6 99.3L434.8 119.4L416.9 126.8L402.8 133L390.6 138.7L380.1 144L370.2 149.7L362.6 154.9L359.2 157.5L356.5 160L354 162.6L352 165L350.3 167.7L349 170.2L347.9 172.9L347.3 175.5L347 178.3L347.1 181.3L347.5 184.1L348.2 187.3L347.5 184.7L347.1 182.2L346.9 179.6L346.9 177.2L347.3 174.8L347.8 172.5L348.6 170.3L349.8 167.9L352.8 163.5L356.9 159.1L361.9 154.8L368.5 150.3L375.8 145.9L384.9 141L395.4 135.9L407.8 130.3L422.6 124L439.6 117ZM689.3 177.7L698 174.2L698.8 174.5L683.1 180.9L671.2 186.2L661 191.1L653.1 195.6L646.9 199.9L642.3 204L640.5 206.1L638.9 208.3L637.8 210.4L637 212.7L636.6 214.5L636.4 216.6L636.8 220.8L638.1 225.3L640.6 230.3L644.6 236.4L649.9 243.1L657 251L666.4 260.8L665.2 261.6L656.3 252.4L649.1 244.5L643.7 237.9L639.5 231.8L636.6 226.2L635 221.5L634.6 219.3L634.5 217L634.6 215L635.1 212.7L635.9 210.5L637 208.5L639.9 204.6L644.1 200.7L649.7 196.7L656.8 192.5L665.2 188.2L675.7 183.4Z"/>
<path fill="#ae0000" stroke="#ae0000" d="M477.4 101.6L582.4 61.2L582.4 61.6L485.1 99.1L434.1 119.2L416.9 126.4L402.4 132.7L390.2 138.4L379.8 143.7L370.2 149.2L362.5 154.4L359.2 157.1L356.3 159.7L353.8 162.3L351.8 164.7L350.1 167.4L348.8 169.9L347.8 172.5L347.2 175.2L346.9 177.9L347 180.9L347.3 183.8L348.1 186.8L347.4 184.4L347 181.7L346.8 179.3L346.8 176.9L347.1 174.5L347.7 172.3L349.4 167.9L352.4 163.5L356.1 159.4L360.9 155.2L367.2 150.7L374.3 146.3L382.9 141.6L393 136.6L404.6 131.3L418 125.4L433.8 118.9ZM690.5 177.9L698.8 174.5L699.5 174.9L684.5 181L672.5 186.3L662.9 191L655 195.4L648.8 199.7L644.1 203.9L642.3 206L640.8 208.2L639.7 210.3L638.9 212.6L638.4 214.4L638.3 216.5L638.6 220.7L640 225.1L642.5 230.2L646.5 236.3L651.8 243L658.7 250.7L667.6 259.9L666.4 260.8L657.7 251.8L650.8 244.1L645.4 237.5L641.4 231.7L638.5 226.1L636.9 221.4L636.5 218.9L636.4 216.9L636.5 214.9L637 212.7L637.8 210.4L638.9 208.4L640.2 206.5L641.8 204.5L646 200.6L651.6 196.5L658.6 192.4L667.1 188.1L677.6 183.3Z"/>
<path fill="#aa0000" stroke="#aa0000" d="M469.8 104.2L582.3 60.8L582.4 61.2L485 98.7L434.2 118.7L416.4 126.1L402 132.4L389.7 138.2L379.7 143.3L370.1 148.8L362.2 154.1L358.9 156.8L356.1 159.4L353.6 162L351.7 164.4L349.9 167L348.7 169.5L347.7 172.3L347.1 174.8L346.8 177.6L346.8 180.5L347.2 183.4L348 186.5L347.3 184L346.9 181.5L346.7 176.7L347.4 172.3L349.1 168L351.8 163.6L355.4 159.5L360.1 155.3L366.1 150.9L373.1 146.5L381 142.1L390.4 137.4L401.5 132.2L414.3 126.6L429.4 120.3ZM691.3 178.2L699.5 174.9L700.2 175.2L685.8 181.1L673.9 186.4L664.3 191.1L656.4 195.6L650.2 199.9L647.6 202.2L645.6 204.1L643.8 206.3L642.6 208.2L641.5 210.2L640.7 212.5L640.3 214.3L640.1 216.4L640.5 220.6L641.9 225.1L644.2 229.8L648 235.7L653.2 242.4L660.1 250.1L668.7 259.1L667.6 259.9L658.9 250.9L652.2 243.5L646.9 236.8L643.1 231.3L640.4 226.1L638.8 221.3L638.4 218.9L638.3 216.8L638.4 214.8L638.9 212.6L639.5 210.7L640.5 208.6L641.7 206.8L643.4 204.7L647.4 200.8L653 196.7L660.2 192.4L668.5 188.2L679 183.4Z"/>
<path fill="#a50000" stroke="#a50000" d="M541.5 76L582.3 60.4L582.3 60.8L485 98.2L434.2 118.3L416.8 125.5L401.9 132L389.8 137.7L379.7 142.8L370.2 148.3L362.3 153.6L359 156.2L356 159L353.4 161.6L351.5 164L349.8 166.8L348.5 169.2L347.5 171.9L346.9 174.5L346.7 177.3L346.7 180L347.1 182.9L347.8 186L347.1 183.1L346.6 180.2L346.5 177.6L346.7 174.9L347.2 172.3L348 169.7L349.2 167.2L350.7 164.7L352.4 162.4L354.6 159.9L359.8 155.1L366.5 150.2L375.1 144.9L384.7 139.8L396 134.3L409.9 128.1L425.9 121.3L468 104.4ZM691.6 178.7L700.2 175.2L700.9 175.5L686.5 181.4L675.2 186.5L665.6 191.2L658.3 195.5L652.1 199.8L647.6 203.8L645.9 205.8L644.4 208L643.3 210.1L642.5 212.3L642.1 214.3L641.9 216.3L642.3 220.4L643.6 224.7L645.9 229.5L649.7 235.4L654.6 241.8L661.2 249.3L669.9 258.3L668.7 259.1L660.3 250.4L653.9 243.1L648.8 236.8L644.8 230.9L642.1 225.6L640.6 220.9L640.2 218.7L640.1 216.4L640.3 214.3L640.7 212.5L641.3 210.6L642.4 208.5L643.5 206.7L645.2 204.5L649.3 200.7L654.4 196.9L661 192.9L669.3 188.6L679.2 184Z"/>
<path fill="#a10000" stroke="#a10000" d="M513 86.6L582.2 60L582.3 60.4L485.5 97.6L434.6 117.7L417.5 124.8L402.6 131.3L390.4 137L379.9 142.3L370 147.9L362.4 153.1L359 155.8L356.2 158.3L353.7 160.8L351.6 163.3L349.8 166L348.5 168.5L347.5 171.2L346.9 173.8L346.6 176.6L346.6 179.5L347 182.5L347.7 185.5L347 182.8L346.5 179.9L346.4 177.3L346.6 174.9L347 172.4L347.7 170L348.7 167.7L350 165.3L351.5 163L353.5 160.6L358.3 155.9L364.5 151.1L371.9 146.4L380.2 141.7L390.7 136.4L403 130.7L416.7 124.7L453.9 109.6ZM691.5 179.3L700.9 175.5L701.6 175.8L687.3 181.8L676 186.9L667 191.4L659.6 195.6L653.7 199.8L649.3 203.8L647.5 206L646.1 208L645.1 210.1L644.2 212.4L643.7 216.3L644.1 220.3L645.3 224.5L647.5 229.2L651.1 234.8L656 241.3L662.6 248.8L671 257.6L669.9 258.3L661.7 249.8L655.3 242.6L650.2 236.2L646.5 230.6L643.9 225.6L642.4 220.8L642 218.6L641.9 216.3L642.1 214.3L642.5 212.5L643.1 210.5L644.1 208.5L646.7 204.8L650.7 200.9L655.8 197.1L662.4 193L670.1 189L679.9 184.3Z"/>
<path fill="#9d0000" stroke="#9d0000" d="M497.2 92.3L582.2 59.6L582.2 60L485.9 97L435 117.2L416.7 124.7L403 130.7L390.7 136.4L379.9 141.9L370.2 147.4L362.3 152.7L358.9 155.4L356 157.9L353.5 160.6L351.5 163L349.7 165.7L348.4 168.2L347.4 170.9L346.8 173.5L346.4 176.3L346.5 179.3L346.9 182.1L347.6 185.2L346.9 182.5L346.5 179.9L346.3 177.3L346.4 174.8L346.8 172.5L347.5 170L348.4 167.7L349.5 165.4L352.7 161L357 156.6L362.5 152.1L369.6 147.3L377.7 142.6L387.3 137.7L398.1 132.5L409 127.6L425 120.9L443.5 113.3ZM691.2 180.1L701.6 175.8L702.3 176.2L688.6 181.9L677.3 187L668.3 191.5L661 195.8L655.2 199.9L652.7 202.1L650.7 204.1L648.9 206.3L647.7 208.2L646.7 210.3L646 212.4L645.4 216L645.8 220.2L647 224.4L649.3 229.1L652.9 234.8L657.6 241L664 248.2L672.1 256.8L671 257.6L662.8 249L656.7 242L651.8 235.9L648.2 230.3L645.6 225.2L644.2 220.8L643.7 216.6L643.8 214.6L644.2 212.4L644.9 210.5L645.9 208.5L648.5 204.7L652.2 201.1L657.2 197.2L663.2 193.4L670.8 189.4L680.1 185Z"/>
<path fill="#990000" stroke="#990000" d="M486.4 96.1L582.2 59.3L582.2 59.6L488 95.8L437.2 115.9L416.2 124.5L403.3 130.2L390.6 136L379.8 141.5L370.2 147L362.2 152.3L358.9 155L355.8 157.7L353.3 160.3L351.3 162.8L349.5 165.4L348.3 167.9L347.2 170.7L346.6 173.2L346.3 176L346.4 178.9L346.8 181.8L347.5 184.9L346.8 182.2L346.4 179.7L346.3 175L346.6 172.6L347.1 170.3L348 168L349.1 165.7L352 161.4L356.1 157L361.3 152.6L367.7 148.1L375.5 143.4L384.2 138.8L393.7 134.1L408.2 127.6L436.7 115.7ZM701.3 176.6L702.3 176.2L703 176.5L689.3 182.2L678.6 187.1L669.6 191.6L662.6 195.7L657.1 199.7L653 203.4L650.1 207.1L648.9 209.1L648.1 210.9L647.5 213.1L647.2 214.9L647.3 218.9L648.4 223.2L650.5 228L653.9 233.7L658.8 240.2L665.1 247.5L673.1 256L672.1 256.8L664 248.2L657.6 241L652.9 234.8L649.3 229.1L646.9 224.1L646.2 221.7L645.6 219.2L645.4 217L645.5 214.9L645.9 212.8L646.4 210.9L647.4 208.7L648.6 206.8L651.9 202.9L656.2 199.1L662 195.1L669.4 190.9L677.9 186.7L688.6 181.9Z"/>
<path fill="#960000" stroke="#960000" d="M478.3 98.9L582.1 58.9L582.2 59.3L494.4 93L435.8 116L415.4 124.5L402.5 130.1L390.3 135.8L379.5 141.3L370.4 146.4L362.2 151.9L358.8 154.6L355.7 157.3L353.2 160L351.2 162.5L349.4 165.1L348.1 167.6L347.1 170.3L346.5 172.9L346.2 175.7L346.3 178.7L346.7 181.5L347.4 184.6L346.7 181.9L346.3 179.6L346.1 177.1L346.2 174.7L346.5 172.4L347 170.2L348.8 165.8L350.1 163.6L351.8 161.2L355.5 157.1L360.3 153L366.3 148.6L373.4 144.2L381.3 139.9L389.9 135.6L402.1 129.9L414.5 124.5L434.4 116.2ZM347.5 184.9L347.5 184.8L347.6 185.1ZM347.6 185.2L347.6 185.2L347.6 185.3ZM698.7 178.2L703 176.5L703.7 176.8L690.6 182.3L680.2 187L671.4 191.4L664.6 195.4L658.9 199.5L654.6 203.3L652.8 205.5L651.5 207.4L650.4 209.4L649.6 211.4L649.1 213.2L648.9 215.3L649.1 219.3L650.2 223.5L652.2 228.1L655.7 233.7L660.3 240L666.4 247L674.2 255.3L673.1 256L665.5 248L659.4 241L654.7 234.8L651.2 229.4L648.8 224.4L647.5 219.9L647.2 217.6L647.2 215.6L647.4 213.5L648 211.3L648.8 209.4L649.8 207.5L651 205.7L652.9 203.5L657.1 199.7L662.3 195.9L669 192L676.9 187.9L686.9 183.3Z"/>
<path fill="#920000" stroke="#920000" d="M471.8 101L494.3 92.2L582.1 58.6L582.1 58.9L490 94.3L434.4 116.2L414.5 124.5L402.1 129.9L389.9 135.6L379.1 141L369 146.9L361.2 152.2L355.5 157.1L353.5 159.2L351 162.2L349.3 164.9L348 167.4L347 170.1L346.4 172.7L346.1 175.4L346.2 178.3L346.6 181.3L347.3 184.3L346.6 181.6L346.2 179.2L346 176.4L346.1 174.4L346.3 172.3L346.9 169.8L347.7 167.4L348.7 165.4L351.2 161.4L355.4 156.8L360.2 152.6L366 148.4L373.1 144L380.9 139.7L389.4 135.4L401.2 129.9L413.2 124.6L432.6 116.6ZM347.4 184.6L347.4 184.3L347.5 184.9ZM347.5 184.9L347.5 184.7L347.6 185.2ZM347.6 185.2L347.6 185.1L347.7 185.4ZM347.7 185.5L347.7 185.5L347.7 185.5ZM348.5 187.6L348.5 187.5L348.5 187.6ZM348.9 188.4L348.8 188.4L348.9 188.5ZM349.2 189.3L349.2 189.2L349.2 189.3ZM350.6 192.1L350.6 192.1L350.6 192.1ZM696.5 179.8L703.7 176.8L704.3 177.1L691.2 182.6L680.6 187.5L672.2 191.8L665.4 195.9L660.1 199.7L655.9 203.7L654.3 205.6L652.9 207.6L651.9 209.7L651.1 211.8L650.5 215.4L650.7 219.4L651.9 223.6L653.9 228.1L657.2 233.5L661.9 239.7L667.7 246.5L675.2 254.6L674.2 255.3L666.8 247.5L661 240.7L656.4 234.8L653 229.4L650.5 224.4L649.2 219.9L648.9 217.7L648.8 215.7L649.1 213.6L649.5 211.8L650.2 209.8L651.2 207.8L653.9 204.2L657.5 200.6L662.6 196.7L668.8 192.9L676.4 188.8L685.8 184.4Z"/>
<path fill="#8f0000" stroke="#8f0000" d="M581.6 58.4L582.1 58.2L582.1 58.6L484.7 95.9L433 116.4L413.2 124.6L401.2 129.9L389.4 135.4L378.7 140.8L370 145.8L361.8 151.3L358.7 153.8L355.4 156.8L352.9 159.4L350.9 161.8L349.2 164.5L347.7 167.4L346.9 169.8L346.3 172.3L346 175.2L346.1 177.9L346.5 181L347.3 184L346.7 182.3L346.2 179.8L346.1 178.4L345.9 175.4L346.1 172.7L346.6 170.1L347.4 167.5L348.6 165L350.4 162L352.3 159.6L355.1 156.6L360.8 151.7L368.3 146.5L378.3 140.6L388.7 135.3L400.4 129.8L412 124.8L430.7 116.9L478.4 98ZM347.3 184.1L347.2 183.9L347.3 184.3L347.4 184.3L347.4 184.6L347.4 184.4L347.5 184.7L347.5 184.9ZM347.6 185L347.5 184.7L347.6 185.2ZM347.6 185.3L347.6 185.1L347.7 185.5ZM347.7 185.6L347.7 185.4L347.8 185.7ZM348.1 186.4L348 186.3L348.2 186.7ZM348.2 186.7L348.2 186.7L348.2 186.8ZM348.4 187.3L348.4 187.1L348.5 187.6ZM348.5 187.6L348.5 187.5L348.6 187.7ZM348.8 188.2L348.7 187.9L348.9 188.4ZM348.9 188.4L348.9 188.4L348.9 188.5ZM349.1 189L349.1 188.8L349.2 189.3ZM349.3 189.3L349.3 189.2L349.3 189.3ZM349.5 189.9L349.5 189.7L349.6 190.1ZM349.9 190.7L349.9 190.6L350 190.8ZM350.2 191.3L350.2 191.1L350.3 191.5ZM350.5 191.8L350.4 191.6L350.6 192.1ZM350.9 192.7L350.9 192.6L351 192.7ZM351.2 193.2L351.2 193.1L351.3 193.3ZM351.5 193.8L351.5 193.6L351.6 193.9ZM351.9 194.3L351.8 194.2L351.9 194.5ZM352.2 194.9L352.1 194.7L352.2 195ZM352.5 195.4L352.4 195.3L352.6 195.5ZM352.8 195.9L352.8 195.8L352.9 196.1ZM353.2 196.5L353.1 196.4L353.2 196.5ZM353.5 197L353.5 197L353.5 197ZM354.3 198.4L354.3 198.2L354.4 198.5ZM354.7 198.9L354.7 198.9L354.7 198.9ZM355.2 199.7L355.1 199.5L355.3 199.9ZM355.6 200.2L355.6 200.2L355.6 200.2ZM356.1 201L356.1 200.9L356.2 201.1ZM357.1 202.3L357.1 202.3L357.1 202.3ZM357.6 203.1L357.6 203.1L357.6 203.2ZM358.2 203.9L358.2 203.8L358.2 203.9ZM358.8 204.7L358.7 204.6L358.8 204.7ZM360.7 207.3L360.7 207.2L360.7 207.3ZM362.1 209.1L362.1 209L362.1 209.1ZM362.9 210.1L362.9 210L363 210.1ZM363.8 211.1L363.8 211.1L363.8 211.1ZM370 218.4L370 218.4L370 218.4ZM371.3 219.9L371.3 219.8L371.3 219.9ZM374.2 223.1L374.2 223.1L374.2 223.1ZM704.1 177.2L704.3 177.1L704.9 177.5L692.5 182.7L682.4 187.3L674 191.7L667.1 195.7L661.9 199.5L657.7 203.3L654.9 206.9L653.1 210.6L652.2 214.4L652.2 218.2L653.1 222.4L655 227.1L658.2 232.5L662.7 238.8L668.7 245.8L676.2 253.9L675.2 254.6L667.7 246.5L661.9 239.7L657.4 233.8L654.1 228.4L651.9 223.5L650.7 219L650.5 216.9L650.5 214.7L650.9 212.6L651.5 210.7L653.3 207L656.4 203.1L660.6 199.3L666.4 195.2L673.3 191.3L681.7 187L691.9 182.4Z"/>
<path fill="#8b0000" stroke="#8b0000" d="M306.6 162L581.1 57L581.8 57.7L582.1 58.2L482 96.6L447 110.4L419.7 121.5L396 131.8L385.7 136.8L376.2 141.8L368.3 146.5L362.7 150.3L357.7 154.2L353.1 158.7L349.8 162.9L348.4 165.4L347.4 167.5L346.3 171.6L345.9 175.4L346.2 179.8L346.8 182.6L347.9 185.8L347.7 185.6L347.9 185.9L348.2 186.7L348 186.5L349.7 190.1L349.5 189.9L351.9 194.3L351.7 194.1L353.8 197.5L353.7 197.3L358.2 203.9L358 203.7L362.9 210.1L362.8 209.8L370 218.4L369.8 218.2L379.7 229L379.5 228.8L399.5 249.4L399.3 249.2L425.1 274.7L427.4 276.9L428.6 278.2L429.1 278.7L429.3 278.9L429.6 279.2L429.8 279.4L429.7 279.3L429.9 279.5L430.4 280L430.7 280.2L431.4 281L431.9 281.4L432.4 281.9L432.9 282.4L433.4 282.9L433.9 283.4L434.4 283.8L434.9 284.3L437.1 286.5L443.5 292.7L443.7 292.9L447.4 296.5L452.4 301.3L456.1 304.9L456.3 305.1L480.3 328.6L478.9 329.2ZM700.1 179.5L704.9 177.5L705.6 177.8L753.4 224.2L677.5 253.2L676.2 253.9L669.1 246.3L663.6 239.8L659.1 233.8L655.8 228.6L653.6 223.9L652.4 219.4L652.1 217.4L652.1 215.2L652.4 213.1L652.9 211.2L653.6 209.2L654.6 207.4L657.3 203.8L661 200.2L666.2 196.4L672.4 192.6L680.1 188.5L688.9 184.3Z"/>
</g>
<path fill="none" stroke="#000" stroke-width="2.8" stroke-linecap="butt" d="M415.4 261.1L417.6 256.6L419.2 253.8L421.3 251.1L424.1 248.1L427.1 245.5L430.7 242.9L435.8 239.9L440.6 237.3L452.1 232.1L469 225.2L492.1 216.2L546.5 195.6"/>
<g opacity="0.70" stroke-width="0.9" stroke-linejoin="round">
<path fill="#0000fb" stroke="#0000fb" d="M503.1 395.1L503.1 395.1L503.6 395.6L504.1 396.1L505.1 397Z"/>
<path fill="#0003ff" stroke="#0003ff" d="M454.5 347.4L454.5 347.4L454.5 347.4L454.8 347.7L455 347.9L455.5 348.4L456.7 349.6L458 350.9L459.2 352.1L461.7 354.5L464.4 357.2L469.8 362.6L475.7 368.4L489 381.4L505.1 397Z"/>
<path fill="#0009ff" stroke="#0009ff" d="M442.8 335.7L443.2 336.1L443.4 336.3L444.2 337.1L445.4 338.3L446.6 339.6L448.1 341L451.1 344L454 347L460.3 353.2L467.4 360.2L483.5 376L504.6 396.6L466.3 359Z"/>
<path fill="#0010ff" stroke="#0010ff" d="M433.8 326.5L433.7 326.3L434.1 326.8L434.3 327L435.1 327.8L436.5 329.3L439.5 332.3L445.9 338.8L452.9 345.8L460.4 353.3L479.2 371.8L504.2 396.2L459.5 352.4Z"/>
<path fill="#0017ff" stroke="#0017ff" d="M425.4 317.8L425.4 317.7L425.5 317.8L425.7 318.1L426.2 318.6L426.9 319.4L428.4 320.9L429.9 322.4L431.6 324.2L434.8 327.5L438.3 331.1L445.7 338.6L453.9 346.8L474.6 367.3L503.8 395.8L452.8 345.7L437.4 330.2Z"/>
<path fill="#001eff" stroke="#001eff" d="M422.5 314.6L422.3 314.4L423 315.2L424 316.2L425.4 317.8L428.5 321L434.8 327.5L442.2 335L451.1 344L472.5 365.1L503.4 395.3L450.5 343.3L434.9 327.6Z"/>
<path fill="#0025ff" stroke="#0025ff" d="M416.8 308.5L416.7 308.4L417.1 308.8L417.6 309.3L418.3 310.2L419.8 311.8L422.9 315.1L429.9 322.5L437.5 330.2L446.6 339.4L469.5 362L503.1 394.9L446 338.7L429.5 322Z"/>
<path fill="#002cff" stroke="#002cff" d="M413 304.3L413.1 304.5L413.4 304.7L413.9 305.3L414.6 306.1L416.3 308L419.5 311.4L426.2 318.6L434.3 326.9L443.3 336.1L466.9 359.4L502.7 394.4L463.1 355.6L442.5 335.1L425.8 318.1Z"/>
<path fill="#0033ff" stroke="#0033ff" d="M410.2 301.1L410.2 301.1L410.4 301.4L410.9 302L411.9 303.1L413.5 304.8L416.4 308.1L423.3 315.4L431.3 323.7L440.5 333.2L465 357.5L502.3 393.9L461 353.4L440.2 332.7L423.1 315.2Z"/>
<path fill="#003aff" stroke="#003aff" d="M406.7 297.2L406.6 297L406.7 297.2L407 297.5L407.5 298L408.2 298.9L409.9 300.9L412.8 304.1L420.1 312L428.4 320.8L437.8 330.3L462.7 355.1L501.9 393.4L458.7 351L436.7 329L419.5 311.3Z"/>
<path fill="#0042ff" stroke="#0042ff" d="M405 295.2L404.9 295.1L405.3 295.5L405.8 296L406.5 296.9L408 298.7L410.9 301.9L417.9 309.6L426 318.1L436 328.4L461.1 353.4L501.5 392.9L457.1 349.3L435.3 327.6L417.9 309.6Z"/>
<path fill="#0049ff" stroke="#0049ff" d="M402 291.6L402 291.5L402.1 291.6L402.3 291.9L402.8 292.5L403.5 293.4L405 295.2L408.3 298.9L415.2 306.6L423.5 315.4L433.2 325.4L459.3 351.4L501.2 392.4L455 347.1L432.8 324.9L415 306.3L408.1 298.7Z"/>
<path fill="#0051ff" stroke="#0051ff" d="M400.6 289.9L400.5 289.8L401.1 290.5L401.3 290.8L402 291.6L403.4 293.2L406.6 297L413.7 304.9L422.2 313.9L432.1 324.1L458.2 350.2L500.8 391.9L500.5 391.4L453.7 345.6L431.2 323.1L413.4 304.4L406.6 296.9Z"/>
<path fill="#0058ff" stroke="#0058ff" d="M398.1 286.8L398 286.7L398.1 286.8L398.4 287.1L398.9 287.7L399.6 288.7L401 290.4L404 293.9L410.8 301.7L419.5 311L429.3 321.2L456.1 348L500.5 391.4L500.1 390.8L451.8 343.6L429 320.7L411.1 301.8L404 293.9Z"/>
<path fill="#0060ff" stroke="#0060ff" d="M396.5 284.7L396.6 285L396.9 285.3L397.1 285.6L398 286.7L399.3 288.3L402.3 291.9L409.3 299.9L417.7 309L428 319.7L454.8 346.5L500.1 390.8L499.8 390.3L450.5 342.1L427.2 318.7L417.6 308.7L409.2 299.7L402.3 291.8Z"/>
<path fill="#0068ff" stroke="#0068ff" d="M394.7 282.4L394.6 282.3L394.7 282.4L394.9 282.8L395.4 283.4L396.2 284.3L397.5 286L400.4 289.6L407.6 297.8L416.2 307.2L426.5 317.9L453.9 345.4L499.8 390.3L499.4 389.7L448.7 340.1L425.4 316.7L415.3 306.2L407.4 297.5L400.4 289.5Z"/>
<path fill="#0070ff" stroke="#0070ff" d="M393.1 280.3L393.2 280.5L393.5 280.8L393.7 281.1L394.6 282.3L395.9 283.9L398.9 287.8L405.8 295.8L414.4 305.2L424.7 315.9L452.1 343.4L499.4 389.7L499.1 389.1L447.9 339L424.1 315.1L413.8 304.4L405.6 295.4L398.8 287.5Z"/>
<path fill="#0078ff" stroke="#0078ff" d="M391.5 278.2L391.5 278.2L391.5 278.2L391.7 278.5L392.2 279.2L393.1 280.3L394.4 282L397.3 285.7L404.1 293.7L412.9 303.4L423.2 314.1L451 342.2L499.1 389.1L498.7 388.6L446.3 337.3L422.3 313.1L412.3 302.6L404 293.4L397.1 285.4Z"/>
<path fill="#0080ff" stroke="#0080ff" d="M390.5 276.9L390.3 276.6L390.8 277.2L391.2 277.9L391.9 278.7L393.3 280.5L396.1 284.1L403.1 292.4L411.6 301.8L422.1 312.9L450 340.9L498.7 388.6L498.4 388L445.5 336.2L421.5 312L411.5 301.5L403 292.1L396.1 284.1Z"/>
<path fill="#0088ff" stroke="#0088ff" d="M388.8 274.5L388.7 274.4L388.8 274.5L389 274.8L389.5 275.5L390.3 276.6L391.5 278.2L394.5 282L401.4 290.4L409.9 299.8L420.3 310.8L448.7 339.3L498.4 388L498.1 387.4L443.9 334.4L419.7 310L409.5 299.2L401.1 289.8L394.1 281.5Z"/>
<path fill="#0091ff" stroke="#0091ff" d="M387.8 273.1L387.6 272.9L388.1 273.5L388.3 273.8L389 274.7L390.3 276.6L393.3 280.4L400.4 289L409.1 298.7L419.5 309.7L447.8 338.3L498.1 387.4L497.8 386.8L443.1 333.3L418.7 308.7L408.3 297.6L400 288.5L393.3 280.4Z"/>
<path fill="#0099ff" stroke="#0099ff" d="M386.3 271L386.2 270.8L386.3 271L386.6 271.4L387.1 272.1L387.8 273.1L388.9 274.7L391.9 278.6L398.7 287L407.4 296.7L417.8 307.7L430.3 320.5L446.5 336.7L497.8 386.8L497.4 386.2L441.9 331.8L417.2 306.8L406.8 295.8L398.4 286.4L391.7 278.2Z"/>
<path fill="#00a2ff" stroke="#00a2ff" d="M385.4 269.6L385.4 269.6L385.9 270.3L386.1 270.7L386.9 271.8L388 273.3L390.9 277.2L397.7 285.6L406.1 295.1L417 306.6L429.8 319.7L445.7 335.6L497.4 386.2L497.1 385.6L441 330.7L416.4 305.7L406 294.7L397.6 285.3L390.9 277.1Z"/>
<path fill="#00aaff" stroke="#00aaff" d="M384.1 267.7L383.9 267.4L384.1 267.8L384.4 268.1L384.6 268.5L385.4 269.6L386.7 271.4L389.5 275.3L396.5 284L405.1 293.7L415.7 305L428.5 318.1L444.9 334.5L497.1 385.6L496.8 384.9L440 329.3L414.9 303.9L404.5 292.9L396.2 283.4L389.3 275Z"/>
<path fill="#00b3ff" stroke="#00b3ff" d="M383.2 266.3L383.1 266.2L383.4 266.7L383.9 267.4L384.5 268.3L385.8 270.2L388.6 274L395.3 282.4L403.9 292.1L414.4 303.4L427.2 316.5L443.6 332.9L496.8 384.9L496.5 384.3L438.9 328L413.9 302.6L403.3 291.3L395.2 282L388.4 273.6Z"/>
<path fill="#00bbff" stroke="#00bbff" d="M381.9 264.3L382.2 264.8L382.4 265.2L383.2 266.3L384.4 268.1L387.2 272L393.9 280.5L402.4 290.3L413.2 301.8L426.2 315.2L442.6 331.6L496.5 384.3L496.2 383.7L437.9 326.6L412.6 300.9L402.1 289.6L393.8 280.1L387.1 271.8Z"/>
<path fill="#00c4ff" stroke="#00c4ff" d="M381.2 263.2L381 263L381.5 263.7L381.7 264L382.3 265L383.5 266.8L386.5 270.9L393.3 279.6L401.8 289.4L412.6 300.9L425.4 314.1L442 330.7L496.2 383.7L495.9 383L437.1 325.5L411.8 299.8L401.3 288.5L393 279L386.3 270.6Z"/>
<path fill="#00cdff" stroke="#00cdff" d="M380.1 261.5L380.2 261.7L380.5 262.1L381 262.9L381.5 263.7L382.7 265.6L385.3 269.3L391.9 277.7L400.4 287.5L411.1 299.1L424.1 312.5L440.7 329.1L495.9 383L495.6 382.4L436.3 324.4L422.4 310.4L410.8 298.4L400.5 287.4L392 277.6L385.3 269.2Z"/>
<path fill="#00d5ff" stroke="#00d5ff" d="M379.2 260.1L379.1 259.9L379.3 260.1L379.5 260.5L380 261.3L380.6 262.3L381.8 264.2L384.6 268.1L391.2 276.6L399.6 286.4L410.3 298L423.3 311.3L440.2 328.2L495.6 382.4L495.3 381.7L435.4 323.1L421.1 308.7L409.8 297.1L399.5 286L391 276.2L384.4 267.8Z"/>
<path fill="#00deff" stroke="#00deff" d="M378.5 258.9L378.4 258.8L378.8 259.3L379.2 260.1L379.7 260.9L380.9 262.8L383.7 266.7L390.3 275.3L398.8 285.2L409.8 297.1L422.8 310.4L439.6 327.3L495.3 381.7L495 381.1L434.5 321.8L420.3 307.6L409 295.9L398.5 284.6L390.3 275.1L383.7 266.6Z"/>
<path fill="#00e7ff" stroke="#00e7ff" d="M377.5 257.2L377.3 256.9L377.6 257.3L377.8 257.7L378 258.1L378.7 259.2L379.9 261.1L382.5 265L389.3 273.8L397.9 283.8L408.5 295.4L421.7 309.1L438.6 325.9L495 381.1L494.7 380.4L433.7 320.7L419.5 306.4L408 294.5L397.3 282.9L389.1 273.4L382.6 264.9Z"/>
<path fill="#00f0ff" stroke="#00f0ff" d="M376.8 256L376.7 255.8L377.1 256.5L377.5 257.2L378 258L379.1 259.9L381.8 263.9L388.4 272.5L397 282.6L407.8 294.3L420.7 307.7L437.8 324.8L494.7 380.4L494.4 379.7L432.9 319.5L418.5 305.1L407.2 293.4L396.8 282L388.4 272.2L381.8 263.7Z"/>
<path fill="#04f9ff" stroke="#04f9ff" d="M376.1 254.8L375.9 254.5L376.3 255.3L376.6 255.7L377.1 256.6L378.3 258.4L380.9 262.4L387.6 271.2L396.1 281.3L407 293.1L420.2 306.8L437.3 323.9L494.4 379.7L494.1 379.1L432.4 318.6L418 304.1L406.5 292.2L396 280.9L387.6 271.1L381.1 262.6Z"/>
<path fill="#0dfffc" stroke="#0dfffc" d="M375.1 253.1L375 253L375.1 253.1L375.4 253.6L375.6 254L376.2 255.1L377.4 256.9L380 261L386.6 269.8L395.1 279.9L406 291.7L419.4 305.6L436.5 322.7L494.1 379.1L493.8 378.4L431.4 317.2L417 302.7L405.2 290.6L394.8 279.2L386.5 269.4L380 260.9Z"/>
<path fill="#16fff3" stroke="#16fff3" d="M374.6 252.2L374.4 251.9L375.1 253.1L375.6 253.9L376.7 255.8L379.4 260L385.9 268.6L394.4 278.7L405.2 290.6L418.4 304.2L435.5 321.3L493.8 378.4L493.6 377.7L430.9 316.3L416.5 301.8L405 289.9L394.3 278.3L386 268.5L379.4 259.7Z"/>
<path fill="#1fffea" stroke="#1fffea" d="M373.6 250.4L373.7 250.5L373.9 251L374.4 251.9L374.8 252.6L375.8 254.3L378.4 258.3L384.9 267.2L393.4 277.3L404.3 289.1L417.7 303L435 320.4L493.6 377.7L493.3 377L454.5 339.2L429.9 314.9L415.2 300.2L403.7 288.2L393.1 276.6L384.8 266.8L378.5 258.2Z"/>
<path fill="#29ffe1" stroke="#29ffe1" d="M372.9 249.2L372.9 249.1L372.9 249.2L373.2 249.7L373.6 250.4L374.1 251.2L375.2 253.1L377.7 257.1L384.2 266L392.9 276.4L403.7 288.2L417.1 302.1L434.5 319.5L493.3 377L493 376.3L454.2 338.5L429.3 314L414.7 299.2L403.1 287.2L392.4 275.4L384.1 265.6L377.8 257Z"/>
<path fill="#32ffd7" stroke="#32ffd7" d="M372.4 248.2L372.3 248.1L372.7 248.8L373.1 249.5L373.5 250.3L374.7 252.2L377.2 256.2L383.7 265.1L392.2 275.2L403.1 287.2L416.4 300.9L433.7 318.3L493 376.3L492.7 375.6L453.7 337.5L428.6 312.8L414 298L402.5 286.1L391.9 274.5L383.6 264.6L377.2 256.1Z"/>
<path fill="#3bffce" stroke="#3bffce" d="M371.6 246.7L372 247.4L372.2 247.9L372.7 248.8L373.8 250.7L376.3 254.6L382.6 263.4L391.1 273.6L402 285.6L415.4 299.5L433 317.1L492.7 375.6L492.5 374.9L452.9 336.4L428.1 311.8L413.5 297.1L401.7 284.9L391.1 273.3L382.8 263.4L376.4 254.6L373.8 250.6Z"/>
<path fill="#44ffc5" stroke="#44ffc5" d="M371 245.5L370.9 245.4L371 245.6L371.3 246.1L371.6 246.7L372.1 247.6L373.2 249.5L375.6 253.5L382.1 262.4L390.5 272.5L401.5 284.7L414.9 298.6L432.4 316.2L492.5 374.9L492.2 374.2L452.7 335.6L427.6 310.9L412.7 295.9L401 283.7L390.4 272.1L382.1 262.2L375.6 253.2L373.1 249.4Z"/>
<path fill="#4dffbc" stroke="#4dffbc" d="M370.5 244.6L370.4 244.4L371 245.5L371.4 246.4L372.5 248.3L375.1 252.4L381.6 261.5L390 271.6L401 283.7L414.4 297.6L431.9 315.2L492.2 374.2L492 373.5L452.2 334.7L426.8 309.7L412 294.7L400.5 282.8L389.9 271.1L381.5 261L375 252.2Z"/>
<path fill="#57ffb3" stroke="#57ffb3" d="M369.7 243.1L370.1 243.7L370.4 244.4L370.8 245.1L371.9 247.1L374.3 251.1L380.7 260L389.3 270.4L400.3 282.5L413.6 296.4L431.4 314.3L492 373.5L491.7 372.8L451.4 333.5L426.1 308.5L411.2 293.5L399.5 281.3L389 269.7L380.6 259.6L374.4 251L371.8 246.9Z"/>
<path fill="#60ffa9" stroke="#60ffa9" d="M369.2 242.1L369.1 241.8L369.6 242.8L369.9 243.3L370.2 244L371.3 246L373.8 250.2L380.2 259.1L388.8 269.4L399.5 281.3L412.9 295.2L430.7 313.1L491.7 372.8L491.4 372.1L450.9 332.6L425.6 307.6L410.7 292.6L399 280.4L388.3 268.5L380.1 258.6L373.9 250L371.4 246Z"/>
<path fill="#69ffa0" stroke="#69ffa0" d="M368.8 241.1L368.6 240.9L369.2 242.1L369.7 242.9L370.8 244.9L373.3 249.2L379.7 258.1L388.2 268.4L399 280.4L412.6 294.5L430.2 312.1L491.4 372.1L491.2 371.4L450.7 331.8L425.1 306.6L410.5 291.9L398.8 279.7L388 267.8L379.6 257.7L373.3 249L370.9 245Z"/>
<path fill="#72ff97" stroke="#72ff97" d="M367.9 239.3L368.1 239.8L368.6 240.9L368.9 241.4L369.9 243.4L372.3 247.4L375.2 251.7L378.6 256.4L387.1 266.8L398.1 278.9L411.4 292.8L429.4 311L491.2 371.4L491 370.6L450.2 330.9L424.4 305.4L409.3 290.2L397.6 278L386.9 266.1L378.5 255.9L372.3 247.2L369.8 242.9Z"/>
<path fill="#7cff8d" stroke="#7cff8d" d="M367.4 238.4L367.4 238.4L367.4 238.4L367.7 238.9L368 239.6L368.4 240.5L369.4 242.3L371.8 246.4L374.7 250.7L378.1 255.4L386.6 265.8L397.6 278L411.2 292.1L429 310L491 370.6L490.7 369.9L449.4 329.7L423.9 304.5L408.8 289.2L397.1 277L386.4 265.1L378.2 255.2L371.9 246.3L369.4 242.3Z"/>
<path fill="#85ff84" stroke="#85ff84" d="M367.1 237.7L366.9 237.4L367.5 238.6L368 239.5L369 241.4L371.6 245.8L377.8 254.7L386.2 264.9L397.3 277.3L410.9 291.4L428.6 309.1L490.7 369.9L490.5 369.2L449.2 329L423.6 303.7L408.5 288.5L396.8 276.3L386.1 264.4L377.8 254.3L371.4 245.3L369.1 241.6Z"/>
<path fill="#8eff7b" stroke="#8eff7b" d="M366.4 236.1L366.2 235.9L366.5 236.3L366.7 236.9L366.9 237.4L367.4 238.2L368.4 240.2L370.8 244.3L373.6 248.5L377 253.2L385.2 263.4L396.4 275.8L410 290L427.7 307.8L490.5 369.2L490.2 368.5L448.5 327.8L422.7 302.3L407.8 287.3L395.9 274.9L385.2 262.9L376.9 252.8L370.8 244.1L368.3 240Z"/>
<path fill="#98ff72" stroke="#98ff72" d="M365.9 235.2L365.8 235L366.4 236.1L366.8 237L367.9 239.2L370.3 243.3L373.1 247.6L376.5 252.3L385 262.7L395.9 274.9L409.5 289L427.5 307.1L490.2 368.5L490 367.8L448.5 327.3L422.4 301.6L407.3 286.3L395.4 273.9L384.7 262L376.5 252L370.3 243.1L367.9 239.1Z"/>
<path fill="#a1ff68" stroke="#a1ff68" d="M365.5 234.2L365.3 233.9L365.9 235.2L366.3 236L367.3 238L369.8 242.3L372.6 246.6L376 251.3L384.5 261.7L395.4 273.9L409 288L427 306.2L490 367.8L489.8 367L447.8 326.1L421.9 300.6L406.9 285.4L395.2 273.2L384.5 261.3L376 250.9L369.9 242.2L367.5 238.1Z"/>
<path fill="#aaff5f" stroke="#aaff5f" d="M364.8 232.7L365 233.3L365.4 234L365.7 234.8L366.7 236.7L369 240.7L371.9 245.3L375.2 249.9L383.6 260.3L394.7 272.7L408.3 286.8L426.5 305.2L489.8 367L489.5 366.3L447.5 325.4L421.5 299.7L406.1 284.2L394.3 271.7L383.6 259.8L375.3 249.6L372 245.2L369.1 240.7L366.7 236.5Z"/>
<path fill="#b4ff56" stroke="#b4ff56" d="M364.4 232L364.3 231.7L364.9 232.9L365.3 233.8L366.4 235.9L368.8 240.1L371.5 244.4L374.9 249.1L383.3 259.6L394.5 272L408 286.1L426.1 304.2L489.5 366.3L489.3 365.6L447.3 324.6L421.2 298.9L405.9 283.5L394 271L383.2 259L375 248.8L371.6 244.2L368.8 240L366.4 235.9Z"/>
<path fill="#bdff4c" stroke="#bdff4c" d="M364 231L363.9 230.7L364.4 232L364.8 232.8L365.8 234.8L368.1 238.9L371 243.3L374.5 248.1L382.9 258.6L394 271L407.6 285.2L425.6 303.3L489.3 365.6L489.1 364.9L446.8 323.7L420.5 297.7L405.4 282.5L393.6 270L382.6 257.9L374.5 247.8L371.2 243.3L368.4 239L366 234.9Z"/>
<path fill="#c6ff43" stroke="#c6ff43" d="M363.3 229.4L363.9 230.7L364.3 231.6L365.2 233.5L367.5 237.6L370.3 241.9L373.6 246.7L382 257.1L393.1 269.5L406.9 284L424.9 302.1L489.1 364.9L488.9 364.1L445.9 322.2L419.8 296.5L404.5 281L392.6 268.6L382 256.7L373.6 246.2L370.2 241.5L367.4 237.2L365.1 233.2Z"/>
<path fill="#cfff3a" stroke="#cfff3a" d="M363 228.8L362.9 228.5L363.5 229.7L363.8 230.6L364.8 232.6L367.3 236.9L370.1 241.4L373.4 246L381.8 256.4L392.9 268.8L406.4 283L424.7 301.3L488.9 364.1L488.7 363.4L445.7 321.5L419.6 295.8L404.5 280.6L392.4 267.9L381.7 255.9L373.5 245.8L370.1 241.1L367.3 236.8L365 232.7Z"/>
<path fill="#d9ff31" stroke="#d9ff31" d="M362.6 227.8L362.5 227.5L363 228.8L363.4 229.6L364.4 231.7L366.8 236L369.7 240.5L372.9 245L381.3 255.4L392.4 267.9L406.2 282.3L424.4 300.6L488.7 363.4L488.4 362.7L445.4 320.8L419.1 294.9L403.8 279.4L392 266.9L381.1 254.7L372.9 244.5L369.7 240.1L366.9 235.8L364.5 231.7Z"/>
<path fill="#e2ff28" stroke="#e2ff28" d="M362.1 226.5L362 226.3L362.2 226.8L362.6 227.6L362.9 228.3L363.8 230.3L366.1 234.5L368.9 239L372.3 243.8L380.6 254.2L391.7 266.7L405.2 280.8L423.5 299.2L488.4 362.7L488.2 362L445 319.8L418.7 293.9L403.1 278.2L391.3 265.7L380.5 253.6L372.2 243.3L368.9 238.6L366.1 234.3L364 230.5Z"/>
<path fill="#ebff1e" stroke="#ebff1e" d="M361.7 225.5L361.6 225.4L362.1 226.5L362.5 227.4L363.4 229.4L365.7 233.6L368.5 238.1L371.8 242.8L380.2 253.3L391.3 265.7L405 280.1L423.3 298.5L488.2 362L488 361.3L445 319.4L418.5 293.2L402.9 277.4L391.1 265L380 252.6L371.8 242.3L368.5 237.7L365.7 233.4L363.4 229.2Z"/>
<path fill="#f4ff15" stroke="#f4ff15" d="M361.1 224.3L361.5 225.1L361.7 225.5L362 226.4L363 228.4L365.2 232.5L368 237L371.2 241.6L379.5 252.1L390.6 264.5L404.3 278.9L422.6 297.3L488 361.3L487.8 360.5L444.3 318.2L417.8 292L402.2 276.2L390.4 263.8L379.5 251.6L371.2 241.2L367.8 236.4L365.1 232.1L363 228.2Z"/>
<path fill="#fdff0c" stroke="#fdff0c" d="M360.7 223.3L360.7 223.3L360.8 223.4L361 224L361.3 224.6L361.6 225.4L362.6 227.4L364.8 231.6L367.6 236.1L370.8 240.6L379.1 251.1L390.2 263.5L403.9 278L422.1 296.3L487.8 360.5L487.6 359.8L444.1 317.5L417.3 291L401.8 275.3L389.9 262.8L379.1 250.6L370.8 240.3L367.4 235.4L364.7 231.1L362.4 227Z"/>
<path fill="#ffff03" stroke="#ffff03" d="M360.5 222.6L360.3 222.3L360.9 223.6L361.2 224.5L362.2 226.4L364.5 230.9L367.3 235.2L370.5 239.9L379.1 250.6L390.2 263.1L403.9 277.5L422.2 295.8L487.6 359.8L487.4 359.1L443.7 316.5L417.1 290.3L401.8 274.8L389.7 262.1L378.6 249.7L370.5 239.5L367.2 234.7L364.4 230.4L362.3 226.6Z"/>
<path fill="#fff900" stroke="#fff900" d="M360 221.4L359.9 221.1L360.1 221.6L360.4 222.4L360.8 223.4L361.7 225.5L363.9 229.5L366.6 233.9L369.9 238.7L373.9 243.8L378.4 249.4L389.5 261.9L403.3 276.4L421.7 294.9L487.4 359.1L487.2 358.4L443.2 315.6L416.7 289.4L401.1 273.6L389.1 260.9L378.2 248.8L370.1 238.5L366.7 233.8L363.9 229.3L361.7 225.2Z"/>
<path fill="#fff000" stroke="#fff000" d="M359.6 220.4L359.5 220.3L359.6 220.5L359.9 221.1L360.1 221.6L360.4 222.5L361.3 224.5L363.6 228.7L366.2 233L369.5 237.7L373.4 242.9L378 248.5L389.1 260.9L402.8 275.3L421.3 293.9L487.2 358.4L487 357.7L442.8 314.6L416.3 288.4L400.7 272.7L388.6 260L377.9 247.9L369.7 237.6L366.3 232.8L363.6 228.5L361.4 224.4Z"/>
<path fill="#ffe700" stroke="#ffe700" d="M359.3 219.7L359.2 219.4L359.7 220.7L360 221.6L361 223.5L363.3 227.9L366 232.3L369.3 237L373.2 242.2L377.8 247.8L388.9 260.2L402.6 274.6L421.1 293.2L487 357.7L486.8 357L442.6 313.9L416.1 287.7L400.5 272L388.4 259.3L377.6 247.1L369.4 236.8L366.1 232.1L363.3 227.7L361.1 223.6Z"/>
<path fill="#ffde00" stroke="#ffde00" d="M358.8 218.5L358.7 218.3L358.9 218.7L359.2 219.5L359.6 220.5L360.4 222.3L362.6 226.5L365.4 231.1L368.7 235.8L376.9 246.3L388.2 259L401.9 273.4L420.4 292L486.8 357L486.7 356.3L442.4 313.2L415.6 286.8L400.1 271L388 258.3L377.1 246.1L368.8 235.6L365.6 231.1L362.8 226.6L360.6 222.5Z"/>
<path fill="#ffd500" stroke="#ffd500" d="M358.6 217.8L358.4 217.5L358.9 218.8L359.3 219.6L360.2 221.7L362.5 226.1L365.2 230.4L368.5 235.1L372.4 240.3L376.9 245.9L388 258.3L401.7 272.7L420.2 291.3L486.7 356.3L486.5 355.6L442.2 312.5L415.4 286.1L399.9 270.3L387.8 257.6L376.8 245.3L368.6 235L365.3 230.3L362.6 225.9L360.3 221.8Z"/>
<path fill="#ffcd00" stroke="#ffcd00" d="M358.1 216.6L358 216.3L358.2 216.9L358.4 217.5L358.8 218.5L359.7 220.4L362 224.8L364.6 229.2L367.9 233.9L371.8 239.1L376.1 244.4L387.3 257.1L401.1 271.6L419.6 290.2L486.5 355.6L486.3 354.9L441.8 311.6L415 285.1L399.5 269.4L387.2 256.5L376.1 244L367.9 233.5L364.7 229L362 224.7L359.8 220.6Z"/>
<path fill="#ffc400" stroke="#ffc400" d="M357.7 215.6L357.7 215.6L357.7 215.7L358.1 216.6L358.2 216.9L358.5 217.7L359.4 219.7L361.6 223.9L364.2 228.2L367.5 233L371.4 238.2L375.7 243.5L386.9 256.2L400.7 270.6L419.1 289.2L486.3 354.9L486.1 354.2L441.4 310.6L414.6 284.2L399 268.5L386.7 255.5L375.9 243.3L367.6 232.8L364.3 228.1L361.7 223.8L359.4 219.6Z"/>
<path fill="#ffbb00" stroke="#ffbb00" d="M357.5 214.9L357.3 214.7L357.8 215.9L358.2 216.8L359.1 218.9L361.3 223.2L364 227.5L367.2 232.3L371.1 237.5L375.5 242.8L386.7 255.5L400.5 269.9L418.9 288.5L486.1 354.2L485.9 353.5L441.4 310.2L414.4 283.5L398.9 267.8L386.6 254.8L375.5 242.4L367.3 232L364.1 227.4L361.4 223.1L359.2 218.9Z"/>
<path fill="#ffb300" stroke="#ffb300" d="M357 213.7L357 213.6L357 213.8L357.3 214.5L357.5 214.9L357.8 215.8L358.7 217.8L360.8 222L363.5 226.5L366.7 231.1L370.3 236L374.9 241.6L386.1 254.3L399.8 268.8L418.5 287.6L485.9 353.5L485.8 352.8L441 309.3L414 282.6L398.2 266.6L385.9 253.7L374.9 241.2L366.8 231L363.6 226.2L360.9 221.9L358.7 217.7Z"/>
<path fill="#ffaa00" stroke="#ffaa00" d="M356.8 213.1L356.6 212.8L357.1 214L357.4 214.9L358.3 216.9L360.6 221.3L363.2 225.7L366.5 230.4L370.3 235.6L374.9 241.2L386.1 253.9L399.9 268.3L418.6 287.2L485.8 352.8L485.6 352.2L440.9 308.6L413.8 281.9L398 266L385.7 253L374.9 240.8L366.6 230.3L363.3 225.5L360.7 221.2L358.5 217.1Z"/>
<path fill="#ffa200" stroke="#ffa200" d="M356.3 211.8L356.6 212.6L356.8 213.1L357.1 213.9L358 215.9L360 220L362.7 224.5L365.9 229.2L369.7 234.4L374.3 240L385.5 252.7L399.2 267.2L417.9 286L485.6 352.2L485.4 351.5L440.4 307.7L413.4 281L397.4 264.8L385.1 251.8L374.1 239.4L366 229L362.8 224.4L360.1 219.9L358 215.9Z"/>
<path fill="#ff9900" stroke="#ff9900" d="M356.1 211.2L356 211.1L356.3 211.8L356.4 212.2L356.8 213.1L357.6 215L359.7 219.3L362.4 223.8L365.7 228.6L369.6 233.8L374.1 239.4L385.3 252.1L399 266.5L417.8 285.3L485.4 351.5L485.3 350.8L440.3 307L413.2 280.3L397.2 264.1L384.9 251.2L373.9 238.7L365.8 228.3L362.6 223.7L359.8 219.2L357.8 215.2Z"/>
<path fill="#ff9100" stroke="#ff9100" d="M355.8 210.5L355.7 210.3L356.2 211.5L356.5 212.3L357.4 214.4L359.5 218.6L362.2 223.2L365.5 227.9L369.4 233.1L373.9 238.7L385.1 251.4L398.9 265.8L417.6 284.7L485.3 350.8L485.1 350.2L440.1 306.4L413.1 279.7L397.1 263.5L384.7 250.5L373.7 238.1L365.5 227.6L362.4 223L359.6 218.5L357.4 214.3Z"/>
<path fill="#ff8800" stroke="#ff8800" d="M355.4 209.3L355.4 209.3L355.4 209.4L355.7 210.3L355.8 210.5L356.2 211.4L357 213.4L359.1 217.6L361.7 222L365 226.8L368.8 231.9L373.3 237.5L384.5 250.3L398.2 264.7L416.9 283.5L485.1 350.2L484.9 349.5L439.5 305.2L412.4 278.5L396.4 262.3L384.1 249.4L373.1 236.9L368.8 231.5L364.9 226.4L361.7 221.7L359.1 217.3L356.9 213.1Z"/>
<path fill="#ff8000" stroke="#ff8000" d="M355.2 208.7L355.1 208.4L355.5 209.6L355.8 210.5L356.7 212.5L358.9 217L361.5 221.3L364.8 226.1L368.6 231.3L373.1 236.9L384.4 249.6L398.1 264L416.8 282.9L484.9 349.5L484.8 348.9L439.3 304.6L412.3 277.9L396.3 261.7L384 248.7L373 236.2L368.6 230.9L364.7 225.7L361.5 221L358.9 216.6L356.7 212.4Z"/>
<path fill="#ff7800" stroke="#ff7800" d="M354.9 207.8L354.8 207.6L355.2 208.6L355.3 209L355.6 209.9L356.5 211.8L358.5 216L361.1 220.4L364.4 225.2L368.2 230.4L372.7 236L384 248.7L397.9 263.4L416.5 282.1L484.8 348.9L484.6 348.2L439.1 303.9L412.1 277.2L396.1 261L383.7 248L372.6 235.4L368.2 230L364.4 224.9L361.3 220.3L358.7 216L356.5 211.8Z"/>
<path fill="#ff7000" stroke="#ff7000" d="M354.6 207.2L354.5 206.9L354.9 208L355.3 209L356.1 211L358.3 215.4L361 219.8L364.2 224.6L368 229.8L372.6 235.4L383.8 248.1L397.7 262.7L416.5 281.6L484.6 348.2L484.5 347.6L439 303.3L412 276.6L395.9 260.4L383.6 247.4L372.6 235L368.3 229.6L364.4 224.5L361.2 219.8L358.5 215.3L356.3 211.2Z"/>
<path fill="#ff6800" stroke="#ff6800" d="M354.2 206L354.2 205.9L354.3 206.1L354.5 206.9L354.6 207.2L355 208.1L355.8 210.1L357.8 214.2L360.4 218.6L363.7 223.5L367.5 228.6L372 234.2L383.2 246.9L397.1 261.6L415.8 280.5L484.5 347.6L484.3 346.9L438.6 302.4L411.6 275.7L395.3 259.3L383 246.3L372 233.8L367.5 228.2L363.8 223.3L360.6 218.5L358 214.2L355.8 210Z"/>
<path fill="#ff6000" stroke="#ff6000" d="M354 205.4L353.9 205.1L354.2 206L354.3 206.3L354.6 207.1L355.5 209.2L357.7 213.6L360.2 218L363.5 222.9L367.3 228L371.8 233.6L383 246.3L397 261L415.7 279.8L484.3 346.9L484.2 346.3L438.5 301.8L411.4 275.1L395.2 258.7L382.9 245.7L371.9 233.2L367.4 227.7L363.6 222.7L360.4 217.9L357.8 213.6L355.6 209.4Z"/>
<path fill="#ff5800" stroke="#ff5800" d="M353.7 204.5L353.6 204.3L353.8 204.8L354 205.3L354.1 205.7L354.4 206.5L355.2 208.4L357.3 212.8L360 217.2L363.1 221.9L366.9 227.1L371.4 232.7L382.6 245.4L396.6 260.1L415.3 279L484.2 346.3L484 345.7L438.3 301.2L411 274.3L394.9 258L382.5 244.8L371.5 232.4L367.2 227L363.3 221.8L360.1 217.1L357.3 212.4L355.2 208.3Z"/>
<path fill="#ff5100" stroke="#ff5100" d="M353.5 203.9L353.4 203.6L353.8 204.8L354.1 205.7L355 207.7L357 211.9L359.7 216.5L362.9 221.3L366.8 226.5L371.3 232.1L382.5 244.8L396.4 259.5L415.1 278.3L484 345.7L483.9 345.1L438.4 300.8L411.1 273.9L394.9 257.4L382.3 244.2L371.3 231.7L367 226.4L363.1 221.2L359.9 216.5L357.1 211.9L355 207.7Z"/>
<path fill="#ff4900" stroke="#ff4900" d="M353.1 202.7L353.5 203.9L353.8 204.8L354.6 206.8L356.7 211L359.3 215.5L362.4 220.2L366.2 225.4L370.7 231L381.9 243.7L395.8 258.4L414.8 277.5L483.9 345.1L483.7 344.5L438 299.9L410.7 273L394.2 256.3L381.7 243.1L370.8 230.6L366.3 225L362.5 219.9L359.2 215.1L356.7 210.8L354.7 206.7Z"/>
<path fill="#ff4200" stroke="#ff4200" d="M353 202.4L352.9 202.1L353.3 203.3L353.6 204.2L354.4 206.2L356.6 210.7L359.2 215.1L362.5 219.9L366.3 225L370.8 230.6L382 243.4L395.9 258L414.6 276.9L483.7 344.5L483.6 343.9L437.9 299.3L410.6 272.4L394.3 256L381.8 242.8L370.8 230.3L366.3 224.7L362.6 219.8L359.4 215.1L356.8 210.7L354.6 206.5Z"/>
<path fill="#ff3a00" stroke="#ff3a00" d="M352.6 201.3L353 202.4L353.3 203.3L354.1 205.3L356.2 209.6L358.7 213.9L361.9 218.7L365.7 223.9L370.2 229.5L381.6 242.5L395.5 257.2L414.2 276L440.6 302L483.6 343.9L483.5 343.3L437.5 298.5L410.2 271.6L393.7 254.9L381.2 241.7L370.3 229.2L365.7 223.6L362.1 218.7L358.9 213.9L356.3 209.5L354.2 205.3Z"/>
<path fill="#ff3300" stroke="#ff3300" d="M352.4 200.7L352.4 200.7L352.6 201.3L352.8 201.9L353.1 202.7L354 204.8L356 209L358.5 213.4L361.7 218.2L365.5 223.3L370 229L381.4 241.9L395.4 256.6L414.3 275.7L483.5 343.3L483.3 342.7L437.4 297.9L410.1 271L393.6 254.3L381.1 241.1L370.1 228.6L365.6 223L361.9 218.1L358.8 213.4L356.1 209L354 204.8Z"/>
<path fill="#ff2c00" stroke="#ff2c00" d="M352.2 199.9L352.1 199.8L352.2 200L352.4 200.7L352.5 201L352.8 201.9L353.7 203.9L355.7 208.1L358.4 212.8L361.6 217.6L365.4 222.8L369.8 228.2L381.1 241.1L395 255.8L414 274.9L483.3 342.7L483.2 342.1L437 297.1L409.7 270.2L393.5 253.7L380.8 240.3L369.8 227.8L365.4 222.5L361.6 217.3L358.4 212.5L355.8 208.1L353.7 203.9Z"/>
<path fill="#ff2500" stroke="#ff2500" d="M352 199.3L351.9 199L352.2 199.9L352.2 200.2L352.6 201L353.4 203.2L355.5 207.6L358 211.9L361.2 216.7L365.1 221.9L369.5 227.6L380.8 240.3L394.6 255L413.6 274.1L439.9 300L483.2 342.1L483.1 341.6L437.4 297L410.1 270.1L393.6 253.4L380.8 240L369.8 227.5L365.3 221.9L361.4 216.7L358.2 211.9L355.7 207.6L353.6 203.4Z"/>
<path fill="#ff1e00" stroke="#ff1e00" d="M351.7 198.5L351.7 198.4L351.8 198.7L352 199.3L352.1 199.6L352.4 200.5L353.2 202.5L355.2 206.7L357.8 211.2L361 216.1L364.7 221.1L369.2 226.7L380.6 239.7L394.5 254.4L413.5 273.5L440.1 299.7L483.1 341.6L483 341L437 296.2L409.5 269.1L392.7 252.1L380.2 238.9L369.1 226.2L364.7 220.8L361 215.7L357.7 210.8L355.2 206.5L353.1 202.3Z"/>
<path fill="#ff1700" stroke="#ff1700" d="M351.5 197.9L351.4 197.7L351.7 198.5L351.8 198.8L352.1 199.7L352.9 201.8L355.1 206.2L357.7 210.8L360.9 215.6L364.8 220.8L369.3 226.4L380.5 239.2L394.4 253.8L413.3 272.9L483 341L482.8 340.4L436.6 295.4L409.3 268.5L392.6 251.6L380.1 238.4L369.1 225.9L364.8 220.4L360.9 215.3L357.8 210.6L355.2 206.2L353.1 202Z"/>
<path fill="#ff1000" stroke="#ff1000" d="M351.3 197.1L351.2 197L351.4 197.7L351.5 197.9L351.6 198.2L351.9 199.1L352.7 201.2L354.8 205.4L357.3 209.8L360.4 214.6L364.2 219.8L368.7 225.4L380.1 238.4L394 253L413 272.1L439.3 298.1L482.8 340.4L482.7 339.9L436.5 294.9L409.2 268L392.7 251.3L380 237.8L368.8 225.1L364.3 219.5L360.6 214.5L357.4 209.8L354.8 205.3L352.8 201.2Z"/>
<path fill="#ff0900" stroke="#ff0900" d="M351.1 196.6L351 196.3L351.3 197.1L351.4 197.4L351.7 198.3L352.5 200.4L354.6 204.9L357.2 209.4L360.4 214.2L364.1 219.2L368.6 224.8L380 237.8L393.9 252.5L412.9 271.6L439.2 297.5L482.7 339.9L482.6 339.4L436.6 294.6L409.4 267.7L392.6 250.8L379.9 237.3L368.7 224.6L364.2 219L360.5 214L357.3 209.2L354.7 204.9L352.7 200.7Z"/>
<path fill="#ff0300" stroke="#ff0300" d="M350.8 195.8L350.8 195.8L351 196.3L351.1 196.6L351.2 196.9L351.5 197.8L352.3 199.8L354.3 204.1L357 208.7L360.1 213.5L364 218.7L368.3 224.1L379.6 237L393.8 252L412.5 270.8L439.1 297L482.6 339.4L482.5 338.8L436.3 293.8L409 266.9L392.3 250L379.5 236.5L368.4 223.9L364 218.4L360.2 213.2L357 208.5L354.4 204L352.4 199.9Z"/>
<path fill="#ff0000" stroke="#ff0000" d="M350.6 195L350.9 196.1L351.2 197L352 199L354 203.3L356.7 207.9L359.8 212.7L363.6 217.9L368.1 223.5L379.3 236.3L393.4 251.2L412.4 270.3L439 296.5L482.5 338.8L482.4 338.3L436.2 293.3L408.6 266.2L391.9 249.2L379.2 235.8L368 223L363.5 217.4L359.9 212.5L356.7 207.6L354 203.1L352 198.8Z"/>
<path fill="#ff0000" stroke="#ff0000" d="M350.5 194.8L350.4 194.5L350.8 195.6L351.1 196.6L352 198.7L354 203L356.7 207.6L359.9 212.4L363.7 217.7L368.2 223.3L379.4 236L393.6 250.9L412.5 270L482.4 338.3L482.3 337.8L436.1 292.8L408.9 266L392 249L379.3 235.5L368.1 222.8L363.6 217.2L359.9 212.2L356.7 207.4L354.2 203.1L352.1 198.9Z"/>
<path fill="#f90000" stroke="#f90000" d="M350.3 194L350.2 193.8L350.5 194.8L350.9 195.8L351.7 197.9L353.7 202.3L356.3 206.7L359.6 211.7L363.4 216.9L367.7 222.3L379.1 235.3L393 249.9L411.9 269L438.5 295.2L482.3 337.8L482.2 337.3L436.2 292.5L408.7 265.4L391.7 248.2L378.9 234.8L367.9 222.2L363.5 216.7L359.6 211.5L356.4 206.7L353.9 202.3L351.8 198.1Z"/>
<path fill="#f30000" stroke="#f30000" d="M350.1 193.6L350 193.3L350.4 194.3L350.7 195.4L351.6 197.5L353.6 201.8L356.2 206.4L359.4 211.1L363.3 216.4L367.8 222L378.9 234.8L392.9 249.4L411.8 268.5L438.4 294.7L482.2 337.3L482.1 336.8L435.9 291.8L408.6 264.9L391.6 247.7L378.8 234.3L367.7 221.5L363.2 215.9L359.5 211L356.3 206.2L353.8 201.8L351.7 197.6Z"/>
<path fill="#ed0000" stroke="#ed0000" d="M349.9 192.8L349.9 192.7L350 193.3L350.2 193.8L350.5 194.7L351.3 196.8L353.3 201L355.9 205.5L359.1 210.5L363 215.7L367.4 221.3L378.8 234.3L393 249.2L412 268.3L482.1 336.8L482 336.3L435.8 291.3L408.5 264.4L391.5 247.2L378.5 233.5L367.4 220.8L363 215.4L359.2 210.2L356 205.5L353.5 201.1L351.4 196.8Z"/>
<path fill="#e70000" stroke="#e70000" d="M349.7 192L349.6 191.9L349.7 192.2L349.9 192.7L350 193.1L350.3 194L351.1 196L353 200.3L355.7 204.9L358.8 209.7L362.6 214.9L367.1 220.6L378.3 233.3L392.4 248.2L411.4 267.3L438 293.5L482 336.3L481.9 335.9L435.7 290.9L408.1 263.7L391.1 246.5L378.2 232.8L367 220.1L362.6 214.6L358.9 209.5L355.7 204.7L353.2 200.4L351.2 196.1L350.4 194.1L350 193.1L349.9 192.6L349.8 192.3L349.8 192.3Z"/>
<path fill="#e10000" stroke="#e10000" d="M349.4 191.3L349.5 191.4L349.6 191.9L349.7 192L349.8 192.3L350 193.2L350.8 195.3L352.8 199.5L355.4 204.2L358.5 209L362.3 214.2L366.8 219.8L378.1 232.8L392.1 247.5L411.3 266.8L437.9 293L481.9 335.9L481.8 335.4L435.3 290.2L407.8 263L390.8 245.8L377.8 232.1L366.7 219.4L362.2 213.8L358.6 208.8L355.4 204L352.9 199.6L350.9 195.3Z"/>
<path fill="#db0000" stroke="#db0000" d="M349.4 191.2L349.3 190.9L349.6 191.9L349.9 192.8L350.7 194.9L352.8 199.4L355.4 204L358.6 208.8L362.4 214L366.9 219.6L378.3 232.6L392.2 247.3L411.4 266.6L481.8 335.4L481.7 335L435.7 290.2L408.2 263L390.9 245.6L378 231.9L366.8 219.2L362.3 213.6L358.7 208.6L355.5 203.8L352.9 199.4L350.8 195.1Z"/>
<path fill="#d60000" stroke="#d60000" d="M349.2 190.4L349.1 190.3L349.3 190.8L349.3 190.9L349.5 191.5L349.8 192.5L350.7 194.6L352.6 198.8L355.2 203.3L358.3 208.1L362.1 213.3L366.6 218.9L378 231.9L392.1 246.8L411.1 265.9L437.9 292.3L481.7 335L481.6 334.5L435.4 289.5L408.1 262.6L390.9 245.2L377.9 231.5L366.5 218.5L362.2 213.1L358.4 207.9L355.2 203.1L352.6 198.6L350.6 194.3Z"/>
<path fill="#d00000" stroke="#d00000" d="M349 190L349 189.7L349.2 190.4L349.3 190.7L349.6 191.8L350.4 193.9L352.4 198.2L355.1 202.9L358.2 207.7L362 212.9L366.5 218.5L377.9 231.5L392 246.4L411 265.5L437.6 291.7L481.6 334.5L481.5 334.1L435 288.8L407.8 261.9L390.5 244.5L377.6 230.8L366.4 218.1L361.9 212.4L358.3 207.5L355.1 202.7L352.6 198.3L350.5 194.1Z"/>
<path fill="#cb0000" stroke="#cb0000" d="M348.9 189.6L348.8 189.3L349.1 190.4L349.5 191.5L350.3 193.5L352.3 197.9L354.9 202.4L358.1 207.2L361.9 212.4L366.4 218.1L377.8 231L391.9 245.9L410.9 265.1L437.5 291.2L481.5 334.1L481.4 333.7L435.2 288.6L407.9 261.7L390.7 244.3L377.6 230.6L366.3 217.6L362 212.3L358.2 207.1L354.9 202.1L352.3 197.7L350.3 193.4Z"/>
<path fill="#c60000" stroke="#c60000" d="M348.7 188.9L348.6 188.7L348.8 189.3L349 189.9L349.3 190.8L350.1 192.8L352.1 197.2L354.7 201.8L357.8 206.6L361.6 211.8L366.1 217.4L377.5 230.4L391.6 245.3L410.6 264.4L437.4 290.8L481.4 333.7L481.3 333.2L434.9 288L407.6 261.1L390.4 243.7L377.4 230L366.2 217.2L361.7 211.6L357.9 206.4L354.7 201.6L352.1 197L350.1 192.7Z"/>
<path fill="#c10000" stroke="#c10000" d="M348.6 188.5L348.5 188.2L348.7 188.9L348.9 189.5L349.2 190.4L350 192.4L352.1 197L354.6 201.4L357.7 206.1L361.5 211.4L366 217L377.4 230L391.3 244.6L410.5 264L437.1 290.2L481.3 333.2L481.3 332.8L435.3 288.1L407.7 260.9L390.3 243.3L377.3 229.6L365.9 216.6L361.6 211.2L357.8 206L354.6 201.2L352.1 196.8L350.1 192.5Z"/>
<path fill="#bc0000" stroke="#bc0000" d="M348.5 188.2L348.4 187.9L348.7 188.9L349.1 190L349.9 192L351.8 196.3L354.5 201L357.6 205.8L361.4 211L365.9 216.6L377.3 229.6L391.5 244.5L410.4 263.6L437.2 290L481.3 332.8L481.2 332.4L435 287.4L407.7 260.5L390.4 243.1L377.2 229.2L366 216.4L361.5 210.8L357.7 205.6L354.5 200.8L352 196.5L350 192.2Z"/>
<path fill="#b70000" stroke="#b70000" d="M348.3 187.5L348.2 187.3L348.4 187.9L348.6 188.4L348.9 189.3L349.7 191.5L351.6 195.6L354.2 200.3L357.3 205.1L361.1 210.3L365.6 215.9L377 228.9L390.9 243.6L410.1 263L436.9 289.4L481.2 332.4L481.1 332.1L435.1 287.3L407.6 260.2L390.1 242.5L376.9 228.6L365.6 215.7L361.3 210.2L357.4 205L354.3 200.2L351.6 195.5L349.7 191.3Z"/>
<path fill="#b30000" stroke="#b30000" d="M348.2 187.1L348.1 186.8L348.3 187.5L348.5 188.1L348.8 189L349.5 191L351.6 195.5L354.1 199.9L357.3 204.7L361.1 209.9L365.5 215.6L376.9 228.6L391.1 243.5L410 262.6L436.8 289L481.1 332.1L481 331.7L434.8 286.7L407.5 259.8L390 242.1L376.8 228.2L365.7 215.4L361.2 209.8L357.3 204.6L354.2 199.8L351.6 195.4L349.6 191.2Z"/>
<path fill="#ae0000" stroke="#ae0000" d="M348.1 186.8L348 186.5L348.2 187.1L348.3 187.5L348.7 188.6L349.4 190.6L351.4 194.9L354 199.6L357.2 204.4L361 209.6L365.4 215.2L376.8 228.2L390.7 242.9L409.9 262.2L436.8 288.6L481 331.7L481 331.3L435 286.6L407.4 259.4L390 241.8L376.7 227.8L365.5 215L361.1 209.5L357.3 204.3L354.1 199.5L351.6 195.1L349.6 190.9Z"/>
<path fill="#aa0000" stroke="#aa0000" d="M347.9 186.1L347.8 186L347.9 186.3L348 186.6L348.2 187.1L348.5 188.1L349.3 190.2L351.2 194.3L353.8 198.9L356.9 203.7L360.7 209L365.2 214.6L376.5 227.6L390.7 242.5L409.6 261.6L436.5 288L481 331.3L480.9 331L434.4 285.7L407.1 258.8L389.7 241.2L376.4 227.2L365.3 214.5L360.8 208.9L357 203.7L353.9 198.9L351.2 194.2L349.3 190Z"/>
<path fill="#a50000" stroke="#a50000" d="M347.8 185.8L347.7 185.5L347.9 186.1L348.1 186.7L348.4 187.6L349.1 189.7L350.1 192L351.2 194.2L353.7 198.6L356.8 203.4L360.6 208.6L365.1 214.2L376.4 227.2L390.6 242.2L409.5 261.2L436.4 287.7L480.9 331L480.8 330.6L434.6 285.6L407.3 258.7L389.6 240.8L376.4 226.9L365.2 214.2L360.7 208.5L356.9 203.3L353.8 198.5L351.3 194.1L349.3 189.9Z"/>
<path fill="#a10000" stroke="#a10000" d="M347.7 185.5L347.6 185.2L347.8 185.8L347.9 186.3L348.3 187.3L349 189.3L351 193.6L353.6 198.3L356.7 203.1L360.5 208.3L365 213.9L376.4 226.9L390.5 241.8L409.7 261.2L436.6 287.6L480.8 330.6L480.8 330.3L434.5 285.3L407.2 258.4L389.5 240.5L376.3 226.6L364.9 213.6L360.5 207.9L356.8 203L353.7 198.2L351.1 193.6L349.1 189.4Z"/>
<path fill="#9d0000" stroke="#9d0000" d="M347.6 185.2L347.5 184.9L347.8 185.8L348.2 187L348.9 189L349.9 191.3L351 193.5L353.5 197.9L356.7 202.7L360.5 207.9L364.9 213.6L376.3 226.6L390.5 241.5L409.4 260.6L436.3 287L480.8 330.3L480.7 330L434.5 285L407.2 258.1L389.5 240.2L376.2 226.2L365.1 213.5L360.6 207.9L356.8 202.7L353.6 197.9L351.1 193.5L349.1 189.3Z"/>
<path fill="#990000" stroke="#990000" d="M347.4 184.6L347.4 184.5L347.5 184.9L347.6 185.2L347.8 185.7L348.1 186.7L348.9 188.7L350.8 193L353.3 197.4L356.4 202.2L360.2 207.4L364.7 213L376 226L390.2 240.9L409.3 260.3L436.2 286.7L480.7 330L480.6 329.7L434.7 284.9L407.4 258L389.6 240.1L376.2 225.9L364.8 213L360.3 207.3L356.5 202.1L353.4 197.4L350.9 192.9L348.9 188.7Z"/>
<path fill="#960000" stroke="#960000" d="M347.3 184.3L347.3 184L347.4 184.6L347.6 185.2L347.9 186.1L348.7 188.1L349.5 190.2L350.7 192.5L353.2 197L356.3 201.9L360.3 207.3L364.8 213L376.2 225.9L390.3 240.9L409.3 260L436.1 286.4L480.6 329.7L480.6 329.4L434.4 284.4L407.1 257.5L389.3 239.6L375.9 225.4L364.5 212.4L360.1 206.8L356.4 201.8L353.3 197L350.8 192.5L348.8 188.4Z"/>
<path fill="#920000" stroke="#920000" d="M347.2 183.7L347.3 184L347.3 184.3L347.5 184.8ZM347.4 184.6L347.5 184.9L347.6 185.2L347.5 184.7ZM347.5 184.9L347.7 185.5L348.2 186.7L349.1 189L351.1 193.2L353.8 197.8L357 202.6L360.9 207.8L365.4 213.4L376.8 226.4L390.8 241.1L410 260.4L480.6 329.4L480.5 329.1L410.4 260.6L392.6 242.7L376.7 226.1L365.1 212.9L360.4 207L356.9 202.3L353.7 197.6L350.9 192.6L348.9 188.5Z"/>
<path fill="#8f0000" stroke="#8f0000" d="M347.1 183.5L347.2 183.7L347.2 184L347.1 183.6ZM347.2 183.8L347.3 184L347.4 184.3L347.4 184.3ZM347.4 184.4L347.4 184.6L347.5 184.7ZM347.5 184.7L347.5 184.9L347.6 185.1L347.5 184.7ZM347.6 185L347.6 185.2L347.7 185.5L347.6 185.1ZM347.6 185.3L347.7 185.5L347.8 185.8L347.9 185.9L347.9 186.1L348.1 186.4L348.2 186.7L348.3 187L348.5 187.5ZM348.4 187.3L348.5 187.6L348.8 188.4L348.7 187.9ZM348.8 188.2L348.9 188.4L349.2 189.2L349.1 188.8ZM349.1 189L349.2 189.3L349.9 190.7L350.6 192.1ZM350.5 191.8L350.9 192.6L352.3 195.2L354.9 199.4L357.9 203.6L361.8 208.8L370.7 219.4L383.2 233L397.1 247.3L415.5 265.6L480.5 329.1L480.5 328.8L438.4 287.9L408.9 258.9L395.8 245.8L382.4 232L371.5 220.1L362.3 209.3L355.2 199.7L355.3 199.9L355.1 199.5L354.5 198.6L354.3 198.4L354.4 198.5L354.3 198.2L354 197.8L353.9 197.6L353 196.2L352.8 195.9L352.9 196.1L352.8 195.8L352.7 195.7L352.5 195.4L352.6 195.5L352.4 195.3L352.4 195.1L352.2 194.9L352.2 195Z"/>
<path fill="#8b0000" stroke="#8b0000" d="M347 183.3L347.1 183.5L347.1 183.6ZM347.1 183.5L347.2 183.8L347.2 183.9ZM347.4 184.6L347.5 184.7L347.5 184.7ZM347.5 184.7L347.6 185L347.6 185.1ZM347.6 185L347.6 185.3L347.7 185.4ZM347.6 185.3L347.7 185.6L347.9 185.8L347.9 185.9L348 186.1L348 186.3ZM348 186.2L348.1 186.4L348.2 186.7ZM348 186.5L348.2 186.7L348.3 187L348.4 187.1ZM348.3 187L348.4 187.3L348.5 187.5ZM348.4 187.4L348.5 187.6L348.7 187.9L348.6 187.7ZM348.7 187.9L348.8 188.2L348.9 188.4ZM348.8 188.2L349 188.7L349.1 188.8L349 188.6ZM349.1 188.8L349.1 189L349.3 189.2ZM349.1 189.1L349.3 189.3L349.5 189.7L349.4 189.4ZM349.4 189.6L349.5 189.9L349.7 190.1L349.9 190.6L349.5 189.9L349.7 190.1ZM349.8 190.5L350.1 191L350.2 191.1L350 190.8ZM350.1 191L350.2 191.3L350.4 191.6L350.4 191.4ZM350.4 191.6L350.5 191.8L350.7 192.1L350.9 192.6ZM350.8 192.4L351.1 192.9L351.2 193.1L351 192.7ZM351.1 193L351.2 193.2L351.5 193.6L351.4 193.3ZM351.4 193.5L351.5 193.8L351.8 194.2L351.7 193.8ZM351.7 194.1L351.9 194.3L352.1 194.7L352 194.4ZM352.1 194.6L352.2 194.9L352.4 195.3L352.3 194.9ZM352.4 195.2L352.5 195.4L352.8 195.8L352.6 195.4ZM352.7 195.7L352.8 195.9L353.1 196.4L352.9 195.9ZM353 196.3L353.2 196.5L353.5 197L353.3 196.5ZM353.3 196.8L353.5 197L353.7 197.3L353.8 197.6L353.9 197.6L354 197.8L354.3 198.2L353.6 197ZM354.2 198.1L354.3 198.4L354.7 198.9L354.5 198.4ZM354.5 198.7L354.9 199.2L355.1 199.5L354.8 198.9ZM355.1 199.5L355.2 199.7L355.6 200.2L355.4 199.7ZM355.4 200L355.8 200.5L356.1 200.9L355.7 200.2ZM356 200.8L356.1 201L356.7 201.8L357.1 202.3ZM356.9 202.1L357.2 202.6L357.6 203.1L357.4 202.6ZM357.5 202.9L357.8 203.4L358.2 203.8L358 203.4ZM358 203.7L358.4 204.2L358.7 204.6L358.5 204.2ZM358.6 204.4L359.5 205.7L360.7 207.2L359.7 205.7ZM360.6 207L360.9 207.5L362.1 209L361.1 207.5ZM362 208.8L362.3 209.3L362.9 210L362.5 209.3ZM362.8 209.8L363.1 210.3L363.8 211.1L363.3 210.3ZM363.6 210.9L365.9 213.6L370 218.4L369.5 217.6ZM369.8 218.2L370.2 218.6L371.3 219.8L370.8 219.2ZM371.2 219.7L371.5 220.1L374.2 223.1L373.5 222.1ZM374 222.9L374.6 223.6L380.1 229.5L388 237.8L396.1 246.1L408.1 258.1L438.2 287.7L480.5 328.8L456.3 305.1L456.1 304.9L452.4 301.3L447.4 296.5L443.7 292.9L443.5 292.7L443 292.2L441.3 290.5L441 290.3L439.3 288.6L439 288.4L434.9 284.3L434.4 283.8L433.9 283.4L433.4 282.9L432.9 282.4L432.4 281.9L431.9 281.4L431.4 281L430.7 280.2L430.4 280L429.9 279.5L429.7 279.3L429.8 279.4L429.6 279.2L429.3 278.9L429.1 278.7L428.6 278.2L427.4 276.9L425.1 274.7L424.9 274.5L424.4 274L422.9 272.5L422.2 271.8L421.9 271.6L421.4 271.1L420 269.7L419.5 269.2L418.7 268.5L418.5 268.2L417.3 267L415.3 265.1L415 264.9L414.8 264.6L414.5 264.4L414.7 264.6L414.4 264.3L414.2 264L414 263.8L413.5 263.3L412.2 262L412 261.7L411.5 261.2L411 260.8L410.3 260L410 259.8L409.8 259.6L409 258.9L408.8 258.6L408 257.9L407.8 257.7L407 256.9L406.8 256.7L406.1 256L405.8 255.7L405.6 255.5L405.7 255.7L405.5 255.4L405.2 255.1L404.7 254.6L404 253.8L403.7 253.5L399.3 249.2L399.5 249.4L386.9 236.6L387.1 236.8Z"/>
</g>
<path fill="none" stroke="#5a5a5a" stroke-width="0.5" d="M306.6 162L306.6 257.8L478.9 425M478.9 425L753.4 320"/>
<path fill="none" stroke="#5a5a5a" stroke-width="0.5" d="M306.6 257.8l-6.2 2.3M478.9 425l4.9 5.2M323 273.7l-6.2 2.3M505 415l4.9 5.2M339.4 289.6l-6.2 2.3M531.2 405l4.9 5.2M355.8 305.6l-6.2 2.3M557.3 395l4.9 5.2M372.2 321.5l-6.2 2.3M583.5 385l4.9 5.2M388.6 337.4l-6.2 2.3M609.6 375l4.9 5.2M405.1 353.3l-6.2 2.3M635.7 365l4.9 5.2M421.5 369.2l-6.2 2.3M661.9 355l4.9 5.2M437.9 385.2l-6.2 2.3M688 345l4.9 5.2M454.3 401.1l-6.2 2.3M714.2 335l4.9 5.2M470.7 417l-6.2 2.3M740.3 325l4.9 5.2M306.6 246.3l-5 -3.9M306.6 225.2l-5 -3.9M306.6 204.2l-5 -3.9M306.6 183.1l-5 -3.9M306.6 162l-5 -3.9"/>
<g font-family="Liberation Sans, sans-serif" font-size="6.4" fill="#404040"><text x="297.8" y="267.5" text-anchor="end">0.4</text><text x="484.7" y="438.5">0.4</text><text x="314.2" y="283.4" text-anchor="end">0.6</text><text x="510.8" y="428.5">0.6</text><text x="330.6" y="299.3" text-anchor="end">0.8</text><text x="537" y="418.5">0.8</text><text x="347" y="315.3" text-anchor="end">1</text><text x="563.1" y="408.5">1</text><text x="363.4" y="331.2" text-anchor="end">1.2</text><text x="589.3" y="398.5">1.2</text><text x="379.8" y="347.1" text-anchor="end">1.4</text><text x="615.4" y="388.5">1.4</text><text x="396.3" y="363" text-anchor="end">1.6</text><text x="641.5" y="378.5">1.6</text><text x="412.7" y="378.9" text-anchor="end">1.8</text><text x="667.7" y="368.5">1.8</text><text x="429.1" y="394.9" text-anchor="end">2</text><text x="693.8" y="358.5">2</text><text x="445.5" y="410.8" text-anchor="end">2.2</text><text x="720" y="348.5">2.2</text><text x="461.9" y="426.7" text-anchor="end">2.4</text><text x="746.1" y="338.5">2.4</text><text x="299.2" y="242.7" text-anchor="end">-100</text><text x="299.2" y="221.6" text-anchor="end">-80</text><text x="299.2" y="200.6" text-anchor="end">-60</text><text x="299.2" y="179.5" text-anchor="end">-40</text><text x="299.2" y="158.4" text-anchor="end">-20</text></g>
<g font-family="Liberation Serif, serif" font-size="7" letter-spacing="0.12" fill="#484848" text-anchor="middle"><text x="392" y="445.2">A-B bond distance (Å)</text><text x="615.700" y="452.400">B-C bond distance (Å)</text><text transform="translate(280.500 210.500) rotate(-90)">Potential Energy (Kcal/mol)</text></g>
</svg>
</div>
</body></html>
